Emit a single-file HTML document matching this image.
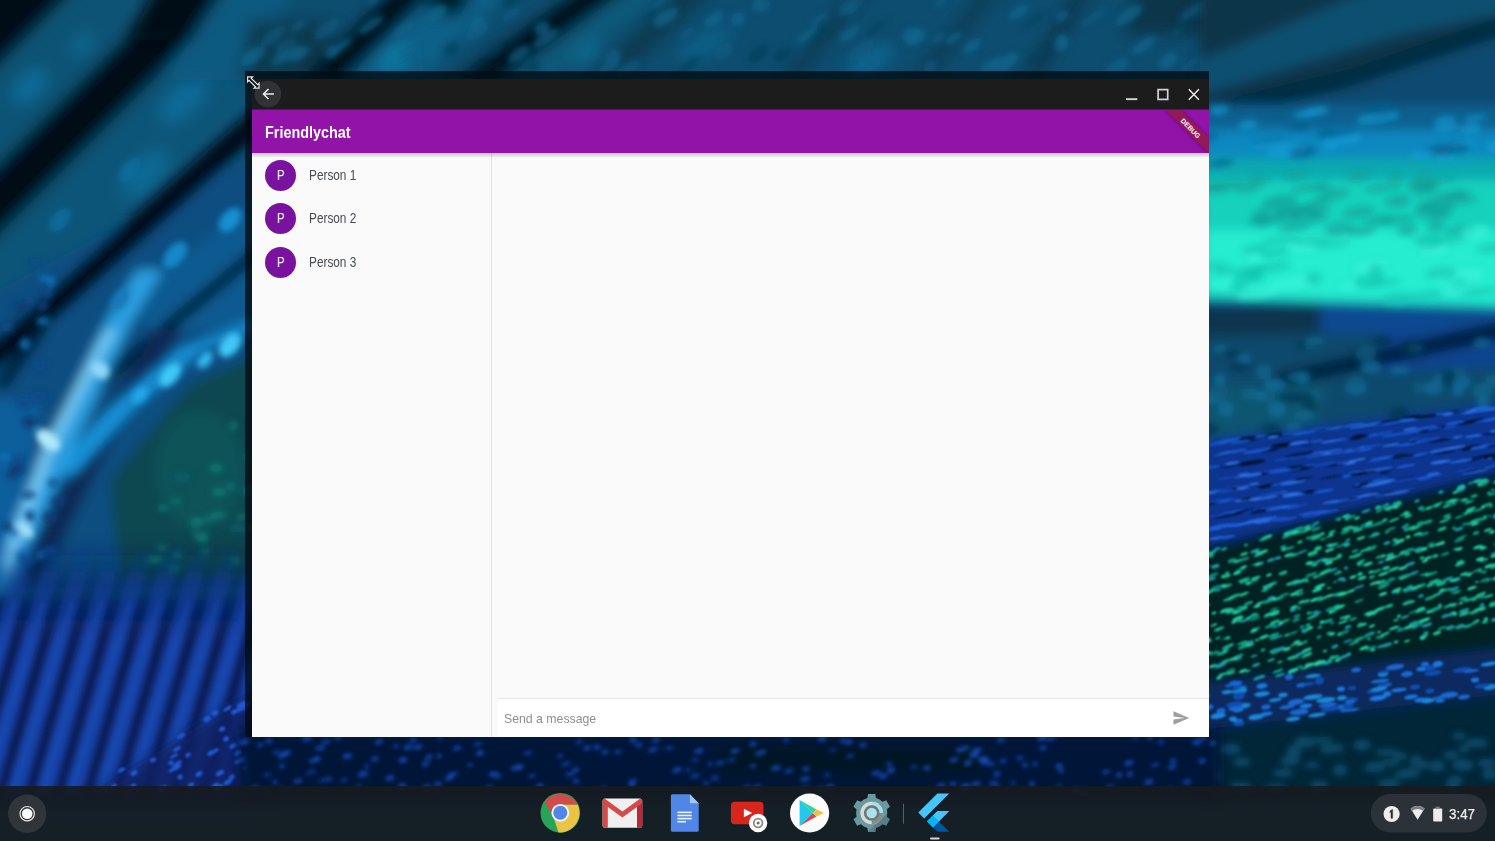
<!DOCTYPE html>
<html><head><meta charset="utf-8">
<style>
*{margin:0;padding:0;box-sizing:border-box}
html,body{width:1495px;height:841px;overflow:hidden;font-family:"Liberation Sans",sans-serif}
body{position:relative;background:#0a3550}
.abs{position:absolute}
#bg{position:absolute;left:0;top:0;width:1495px;height:841px;overflow:hidden}
#frame{position:absolute;left:245px;top:71px;width:964px;height:666px;background:rgba(0,10,15,0.75)}
#win{position:absolute;left:252px;top:79px;width:957px;height:658px;background:#fafafa;overflow:hidden}
#title{position:absolute;left:0;top:0;width:957px;height:31px;background:linear-gradient(#1c1c1c 30px,#561660 30px)}
#appbar{position:absolute;left:0;top:31px;width:957px;height:43px;background:#9113a8;z-index:2}
#shadow{position:absolute;left:0;top:74px;width:957px;height:5px;background:linear-gradient(rgba(0,0,0,0.22),rgba(0,0,0,0));z-index:3}
#appbar .t{position:absolute;left:13px;top:12px;color:#fff;font-size:17.4px;font-weight:bold;transform-origin:0 0;transform:scaleX(0.828);white-space:nowrap}
#side{position:absolute;left:0;top:74px;width:240px;height:584px;background:#fafafa;border-right:1px solid #e2e2e2}
.item{position:absolute;left:12.8px;width:220px;height:31px}
.av{position:absolute;left:0;top:0;width:31.1px;height:31.1px;border-radius:50%;background:#7a12a0;color:#fff;font-size:14.5px;text-align:center;line-height:31px}
.nm{position:absolute;left:44.2px;top:7.3px;font-size:14.5px;color:#474c50;transform-origin:0 0;transform:scaleX(0.815);white-space:nowrap}
.av span{display:inline-block;transform:scaleX(0.8) translateY(0.1px);font-size:14px}
#input{position:absolute;left:246px;top:619px;width:711px;height:39px;background:#fff;border-top:1px solid #e6e6e6}
#input .ph{position:absolute;left:6px;top:11.7px;font-size:13px;color:#8c8f91;transform-origin:0 0;transform:scaleX(0.945);white-space:nowrap}
#shelf{position:absolute;left:0;top:786px;width:1495px;height:55px;background:rgba(22,27,31,0.9)}
</style></head><body>
<div id="bg"><svg id="bgsvg" width="1495" height="841" viewBox="0 0 1495 841" style="position:absolute;left:0;top:0">
<defs>
<filter id="b1" x="-30%" y="-30%" width="160%" height="160%"><feGaussianBlur stdDeviation="1.2"/></filter>
<filter id="b2" x="-30%" y="-30%" width="160%" height="160%"><feGaussianBlur stdDeviation="2"/></filter>
<filter id="b3" x="-30%" y="-30%" width="160%" height="160%"><feGaussianBlur stdDeviation="3"/></filter>
<filter id="b4" x="-30%" y="-30%" width="160%" height="160%"><feGaussianBlur stdDeviation="4"/></filter>
<filter id="b6" x="-30%" y="-30%" width="160%" height="160%"><feGaussianBlur stdDeviation="6"/></filter>
<filter id="b8" x="-30%" y="-30%" width="160%" height="160%"><feGaussianBlur stdDeviation="8"/></filter>
<filter id="b12" x="-30%" y="-30%" width="160%" height="160%"><feGaussianBlur stdDeviation="12"/></filter>
</defs>
<rect width="1495" height="841" fill="#0a4a6c"/>
<g filter="url(#b12)">
<rect x="-30" y="-30" width="290" height="300" fill="#073f5c"/>
<rect x="-30" y="250" width="290" height="340" fill="#0a4a78"/>
<rect x="-30" y="590" width="290" height="210" fill="#0a3078"/>
</g>
<g filter="url(#b8)">
<g transform="rotate(-45)">
<rect x="-400" y="-100" width="900" height="145" fill="#030e18"/>
<rect x="-400" y="45" width="900" height="70" fill="#0a5274"/>
<rect x="-400" y="115" width="900" height="50" fill="#020a12"/>
<rect x="-400" y="165" width="900" height="125" fill="#0a5478"/>
<ellipse cx="-40" cy="82" rx="22" ry="12" fill="#0e6c98"/>
<ellipse cx="27" cy="90" rx="14" ry="9" fill="#0e6890"/>
<ellipse cx="60" cy="200" rx="30" ry="14" fill="#0e6c98"/>
<ellipse cx="-20" cy="225" rx="30" ry="14" fill="#0e6a94"/>
</g>
</g>

<g filter="url(#b6)">
<polygon points="-20,300 260,150 260,600 -20,600" fill="#0a4e80"/>
<polygon points="-38,368 30,310 200,156 252,110 288,110 236,156 66,310 -2,368" fill="#020e1a"/>
<polygon points="120,300 260,200 260,330 150,330" fill="#0b5a90"/>
<polygon points="-8,388 32,330 48,330 8,388" fill="#04203a"/>
<polygon points="70,400 240,258 260,240 280,240 260,258 90,400" fill="#04203a"/>
<polygon points="-20,400 40,400 20,560 -20,580" fill="#0c5e9c"/>
<polygon points="110,480 190,385 260,355 260,580 120,580" fill="#0a4650"/>
<ellipse cx="200" cy="470" rx="45" ry="60" fill="#0c5258"/>
<polygon points="17,580 97,420 157,330 183,330 123,420 43,580" fill="#072c58"/>
<polygon points="50,475 108,410 178,350 248,322 272,322 202,350 132,410 74,475" fill="#1492d8"/>
<polygon points="-18,595 37,470 106,321 137,270 163,270 132,321 63,470 8,595" fill="#2a9ee0"/>
<polygon points="0,570 43,450 95,350 107,330 117,330 105,350 53,450 10,570" fill="#7ccff6"/>
</g>
<g filter="url(#b3)">
<ellipse cx="175" cy="255" rx="16" ry="9" fill="#1488c8" transform="rotate(-50 175 255)"/>
<ellipse cx="230" cy="220" rx="14" ry="9" fill="#1490d0" transform="rotate(-50 230 220)"/>
<ellipse cx="120" cy="300" rx="12" ry="7" fill="#1278b8" transform="rotate(-50 120 300)"/>
<ellipse cx="60" cy="220" rx="14" ry="8" fill="#0e6a9a" transform="rotate(-50 60 220)"/>
<ellipse cx="130" cy="170" rx="14" ry="8" fill="#0e6a9a" transform="rotate(-50 130 170)"/>
<ellipse cx="170" cy="375" rx="14" ry="8" fill="#40c8f8" transform="rotate(-50 170 375)"/>
<ellipse cx="230" cy="345" rx="14" ry="9" fill="#40c8f8" transform="rotate(-50 230 345)"/>
<ellipse cx="48" cy="440" rx="8" ry="14" fill="#b0e8fc" transform="rotate(-50 48 440)"/>
<ellipse cx="25" cy="530" rx="6" ry="10" fill="#a0e0fa" transform="rotate(-50 25 530)"/>
<ellipse cx="100" cy="370" rx="8" ry="10" fill="#90d8f8" transform="rotate(-50 100 370)"/>
<ellipse cx="205" cy="360" rx="10" ry="6" fill="#30b8f0" transform="rotate(-50 205 360)"/>
<ellipse cx="140" cy="395" rx="10" ry="6" fill="#20a8e8" transform="rotate(-50 140 395)"/>
<ellipse cx="218" cy="515" rx="8.5" ry="3.3" fill="#107870"/>
<ellipse cx="197" cy="522" rx="7.5" ry="4.3" fill="#107870"/>
<ellipse cx="201" cy="538" rx="4.0" ry="5.4" fill="#107870"/>
<ellipse cx="245" cy="457" rx="4.5" ry="3.3" fill="#0a5a66"/>
<ellipse cx="202" cy="537" rx="7.6" ry="4.6" fill="#107870"/>
<ellipse cx="205" cy="551" rx="5.8" ry="3.6" fill="#0e6a68"/>
<ellipse cx="163" cy="508" rx="5.8" ry="4.1" fill="#0c6a70"/>
<ellipse cx="210" cy="519" rx="7.4" ry="3.2" fill="#0c6a70"/>
<ellipse cx="241" cy="517" rx="5.1" ry="4.0" fill="#0e6a68"/>
<ellipse cx="155" cy="560" rx="8.4" ry="3.9" fill="#107870"/>
<ellipse cx="177" cy="555" rx="6.3" ry="3.8" fill="#0c6a70"/>
<ellipse cx="219" cy="492" rx="7.7" ry="4.3" fill="#107870"/>
<ellipse cx="173" cy="570" rx="4.7" ry="4.5" fill="#0e6a68"/>
<ellipse cx="233" cy="426" rx="4.8" ry="5.0" fill="#0e6a68"/>
<ellipse cx="176" cy="501" rx="6.3" ry="3.8" fill="#0e6a68"/>
<ellipse cx="236" cy="528" rx="7.8" ry="4.0" fill="#0a5a66"/>
<ellipse cx="182" cy="477" rx="8.8" ry="5.6" fill="#0a5a66"/>
<ellipse cx="247" cy="530" rx="6.5" ry="3.3" fill="#0a5a66"/>
<ellipse cx="231" cy="486" rx="5.0" ry="4.1" fill="#0c6a70"/>
<ellipse cx="195" cy="532" rx="6.7" ry="3.0" fill="#0a5a66"/>
<ellipse cx="174" cy="568" rx="8.0" ry="3.7" fill="#0c6a70"/>
<ellipse cx="235" cy="561" rx="4.4" ry="4.5" fill="#0e6a68"/>
<ellipse cx="247" cy="491" rx="4.6" ry="5.0" fill="#0c6a70"/>
<ellipse cx="162" cy="548" rx="6.1" ry="3.6" fill="#0c6a70"/>
<ellipse cx="216" cy="468" rx="7.4" ry="4.1" fill="#107870"/>
<ellipse cx="7" cy="327" rx="5.7" ry="4.8" fill="#0a4a88"/>
<ellipse cx="35" cy="262" rx="7.5" ry="3.2" fill="#0a4a88"/>
<ellipse cx="54" cy="518" rx="4.4" ry="3.7" fill="#0a3a70"/>
<ellipse cx="29" cy="422" rx="7.6" ry="5.6" fill="#0a3a70"/>
<ellipse cx="28" cy="495" rx="8.0" ry="3.6" fill="#0a4a88"/>
<ellipse cx="40" cy="366" rx="6.1" ry="5.6" fill="#0a4a88"/>
<ellipse cx="40" cy="555" rx="4.5" ry="4.2" fill="#1070b8"/>
<ellipse cx="48" cy="293" rx="5.0" ry="4.6" fill="#0a4a88"/>
<ellipse cx="25" cy="344" rx="5.2" ry="5.8" fill="#1070b8"/>
<ellipse cx="48" cy="517" rx="4.5" ry="5.0" fill="#0a3a70"/>
<ellipse cx="50" cy="551" rx="8.6" ry="5.5" fill="#0a4a88"/>
<ellipse cx="24" cy="404" rx="8.3" ry="5.7" fill="#0a4a88"/>
<ellipse cx="23" cy="556" rx="5.3" ry="5.4" fill="#1070b8"/>
<ellipse cx="17" cy="469" rx="7.7" ry="5.4" fill="#0a3a70"/>
<ellipse cx="43" cy="306" rx="5.5" ry="5.9" fill="#0a3a70"/>
<ellipse cx="44" cy="278" rx="5.6" ry="3.2" fill="#1070b8"/>
<ellipse cx="30" cy="516" rx="4.8" ry="5.9" fill="#0a4a88"/>
<ellipse cx="51" cy="281" rx="4.3" ry="5.6" fill="#1070b8"/>
<ellipse cx="7" cy="527" rx="5.2" ry="4.8" fill="#0a3a70"/>
<ellipse cx="5" cy="457" rx="6.8" ry="3.9" fill="#1070b8"/>
<ellipse cx="12" cy="475" rx="5.2" ry="4.2" fill="#0a3a70"/>
<ellipse cx="39" cy="397" rx="8.6" ry="5.8" fill="#0a4a88"/>
<ellipse cx="27" cy="560" rx="9.0" ry="3.2" fill="#0a4a88"/>
<ellipse cx="30" cy="300" rx="5.7" ry="3.2" fill="#0a4a88"/>
<ellipse cx="22" cy="307" rx="8.2" ry="5.1" fill="#0a3a70"/>
<ellipse cx="59" cy="502" rx="6.6" ry="5.0" fill="#0a3a70"/>
<ellipse cx="18" cy="459" rx="8.7" ry="3.4" fill="#0a4a88"/>
<ellipse cx="53" cy="483" rx="4.8" ry="3.8" fill="#0a4a88"/>
<ellipse cx="43" cy="321" rx="7.2" ry="3.8" fill="#1070b8"/>
<ellipse cx="15" cy="532" rx="4.3" ry="4.9" fill="#1070b8"/>
</g>
<g filter="url(#b6)">
<polygon points="-20,540 270,540 270,800 -20,800" fill="url(#darkg)"/>
</g>
<defs><linearGradient id="barbg" gradientUnits="userSpaceOnUse" x1="0" y1="545" x2="0" y2="640"><stop offset="0" stop-color="#1440a4" stop-opacity="0"/><stop offset="1" stop-color="#1440a4" stop-opacity="1"/></linearGradient><linearGradient id="darkg" gradientUnits="userSpaceOnUse" x1="0" y1="540" x2="0" y2="640"><stop offset="0" stop-color="#081d55" stop-opacity="0"/><stop offset="1" stop-color="#081d55" stop-opacity="1"/></linearGradient></defs>
<g filter="url(#b3)">
<polygon points="-82,795 -63,795 10,540 -7,540" fill="url(#barbg)"/>
<polygon points="-76,790 -72,790 -12,600 -15,600" fill="#2a62d0" fill-opacity="0.45"/>
<polygon points="-53,795 -34,795 39,540 22,540" fill="url(#barbg)"/>
<polygon points="-47,790 -43,790 17,600 14,600" fill="#2a62d0" fill-opacity="0.45"/>
<polygon points="-24,795 -5,795 68,540 51,540" fill="url(#barbg)"/>
<polygon points="-18,790 -14,790 46,600 43,600" fill="#2a62d0" fill-opacity="0.45"/>
<polygon points="5,795 24,795 97,540 80,540" fill="url(#barbg)"/>
<polygon points="11,790 15,790 75,600 72,600" fill="#2a62d0" fill-opacity="0.45"/>
<polygon points="34,795 53,795 126,540 109,540" fill="url(#barbg)"/>
<polygon points="40,790 44,790 104,600 101,600" fill="#2a62d0" fill-opacity="0.45"/>
<polygon points="63,795 82,795 155,540 138,540" fill="url(#barbg)"/>
<polygon points="69,790 73,790 133,600 130,600" fill="#2a62d0" fill-opacity="0.45"/>
<polygon points="92,795 111,795 184,540 167,540" fill="url(#barbg)"/>
<polygon points="98,790 102,790 162,600 159,600" fill="#2a62d0" fill-opacity="0.45"/>
<polygon points="121,795 140,795 213,540 196,540" fill="url(#barbg)"/>
<polygon points="127,790 131,790 191,600 188,600" fill="#2a62d0" fill-opacity="0.45"/>
<polygon points="150,795 169,795 242,540 225,540" fill="url(#barbg)"/>
<polygon points="156,790 160,790 220,600 217,600" fill="#2a62d0" fill-opacity="0.45"/>
<polygon points="179,795 198,795 271,540 254,540" fill="url(#barbg)"/>
<polygon points="185,790 189,790 249,600 246,600" fill="#2a62d0" fill-opacity="0.45"/>
<polygon points="208,795 227,795 300,540 283,540" fill="url(#barbg)"/>
<polygon points="214,790 218,790 278,600 275,600" fill="#2a62d0" fill-opacity="0.45"/>
<polygon points="237,795 256,795 329,540 312,540" fill="url(#barbg)"/>
<polygon points="243,790 247,790 307,600 304,600" fill="#2a62d0" fill-opacity="0.45"/>
<polygon points="266,795 285,795 358,540 341,540" fill="url(#barbg)"/>
<polygon points="272,790 276,790 336,600 333,600" fill="#2a62d0" fill-opacity="0.45"/>
<polygon points="295,795 314,795 387,540 370,540" fill="url(#barbg)"/>
<polygon points="301,790 305,790 365,600 362,600" fill="#2a62d0" fill-opacity="0.45"/>
</g>
<g filter="url(#b6)">
<polygon points="90,795 270,680 270,800" fill="#0a2060" fill-opacity="0.85"/>
</g>
<g filter="url(#b1)">
<ellipse cx="222" cy="729" rx="3.1" ry="2.3" fill="#2058d0" transform="rotate(-30 222 729)"/>
<ellipse cx="188" cy="755" rx="2.9" ry="2.1" fill="#2058d0" transform="rotate(-30 188 755)"/>
<ellipse cx="180" cy="777" rx="2.6" ry="2.5" fill="#2058d0" transform="rotate(-30 180 777)"/>
<ellipse cx="134" cy="773" rx="3.8" ry="2.3" fill="#2058d0" transform="rotate(-30 134 773)"/>
<ellipse cx="122" cy="770" rx="3.8" ry="1.7" fill="#2058d0" transform="rotate(-30 122 770)"/>
<ellipse cx="171" cy="763" rx="2.7" ry="2.3" fill="#2058d0" transform="rotate(-30 171 763)"/>
<ellipse cx="247" cy="767" rx="4.4" ry="2.3" fill="#2058d0" transform="rotate(-30 247 767)"/>
<ellipse cx="121" cy="770" rx="3.8" ry="1.6" fill="#2058d0" transform="rotate(-30 121 770)"/>
<ellipse cx="172" cy="770" rx="3.9" ry="1.6" fill="#2058d0" transform="rotate(-30 172 770)"/>
<ellipse cx="241" cy="705" rx="4.6" ry="2.5" fill="#2058d0" transform="rotate(-30 241 705)"/>
<ellipse cx="215" cy="785" rx="3.8" ry="1.7" fill="#2058d0" transform="rotate(-30 215 785)"/>
<ellipse cx="176" cy="766" rx="4.4" ry="1.9" fill="#2058d0" transform="rotate(-30 176 766)"/>
<ellipse cx="243" cy="703" rx="3.7" ry="1.5" fill="#2058d0" transform="rotate(-30 243 703)"/>
<ellipse cx="160" cy="789" rx="2.8" ry="2.5" fill="#2058d0" transform="rotate(-30 160 789)"/>
<ellipse cx="237" cy="762" rx="2.6" ry="2.0" fill="#2058d0" transform="rotate(-30 237 762)"/>
<ellipse cx="228" cy="782" rx="4.8" ry="2.3" fill="#2058d0" transform="rotate(-30 228 782)"/>
<ellipse cx="177" cy="768" rx="4.4" ry="1.5" fill="#2058d0" transform="rotate(-30 177 768)"/>
<ellipse cx="239" cy="710" rx="3.5" ry="2.0" fill="#2058d0" transform="rotate(-30 239 710)"/>
<ellipse cx="234" cy="712" rx="3.2" ry="2.3" fill="#2058d0" transform="rotate(-30 234 712)"/>
<ellipse cx="114" cy="786" rx="3.1" ry="2.0" fill="#2058d0" transform="rotate(-30 114 786)"/>
<ellipse cx="163" cy="788" rx="4.3" ry="2.1" fill="#2058d0" transform="rotate(-30 163 788)"/>
<ellipse cx="227" cy="709" rx="4.1" ry="1.8" fill="#2058d0" transform="rotate(-30 227 709)"/>
<ellipse cx="233" cy="746" rx="4.2" ry="2.3" fill="#2058d0" transform="rotate(-30 233 746)"/>
<ellipse cx="133" cy="786" rx="3.5" ry="2.0" fill="#2058d0" transform="rotate(-30 133 786)"/>
<ellipse cx="178" cy="763" rx="4.4" ry="1.7" fill="#2058d0" transform="rotate(-30 178 763)"/>
<ellipse cx="226" cy="739" rx="3.1" ry="2.4" fill="#2058d0" transform="rotate(-30 226 739)"/>
<ellipse cx="232" cy="777" rx="3.3" ry="2.4" fill="#2058d0" transform="rotate(-30 232 777)"/>
<ellipse cx="219" cy="787" rx="4.4" ry="2.5" fill="#2058d0" transform="rotate(-30 219 787)"/>
<ellipse cx="177" cy="767" rx="4.5" ry="2.0" fill="#2058d0" transform="rotate(-30 177 767)"/>
<ellipse cx="181" cy="736" rx="4.7" ry="1.9" fill="#2058d0" transform="rotate(-30 181 736)"/>
<ellipse cx="215" cy="751" rx="4.3" ry="1.8" fill="#2058d0" transform="rotate(-30 215 751)"/>
<ellipse cx="238" cy="753" rx="3.9" ry="2.2" fill="#2058d0" transform="rotate(-30 238 753)"/>
<ellipse cx="211" cy="753" rx="4.1" ry="2.3" fill="#2058d0" transform="rotate(-30 211 753)"/>
<ellipse cx="246" cy="705" rx="3.8" ry="2.1" fill="#2058d0" transform="rotate(-30 246 705)"/>
<ellipse cx="244" cy="708" rx="4.3" ry="1.6" fill="#2058d0" transform="rotate(-30 244 708)"/>
<ellipse cx="174" cy="756" rx="4.6" ry="1.5" fill="#2058d0" transform="rotate(-30 174 756)"/>
<ellipse cx="215" cy="713" rx="3.5" ry="2.5" fill="#2058d0" transform="rotate(-30 215 713)"/>
<ellipse cx="229" cy="707" rx="2.5" ry="1.5" fill="#2058d0" transform="rotate(-30 229 707)"/>
<ellipse cx="220" cy="773" rx="4.5" ry="2.4" fill="#2058d0" transform="rotate(-30 220 773)"/>
<ellipse cx="199" cy="774" rx="3.9" ry="2.2" fill="#2058d0" transform="rotate(-30 199 774)"/>
<ellipse cx="249" cy="735" rx="4.3" ry="1.7" fill="#2058d0" transform="rotate(-30 249 735)"/>
<ellipse cx="177" cy="749" rx="4.4" ry="1.8" fill="#2058d0" transform="rotate(-30 177 749)"/>
<ellipse cx="191" cy="785" rx="3.5" ry="2.2" fill="#2058d0" transform="rotate(-30 191 785)"/>
<ellipse cx="207" cy="719" rx="4.0" ry="2.5" fill="#2058d0" transform="rotate(-30 207 719)"/>
<ellipse cx="153" cy="760" rx="3.3" ry="2.1" fill="#2058d0" transform="rotate(-30 153 760)"/>
</g>
<g filter="url(#b8)">
<rect x="240" y="-20" width="980" height="100" fill="#0a4e70"/>
<polygon points="160,-20 230,-20 190,40 130,40" fill="#020c14"/>
<polygon points="230,-20 300,-20 235,80 165,80" fill="#0a5a80"/>
<polygon points="250,20 335,20 320,80 240,80" fill="#083a50"/>
<polygon points="400,-20 445,-20 345,80 300,80" fill="#020c14"/>
<polygon points="445,-20 520,-20 420,80 345,80" fill="#0a6088"/>
<ellipse cx="395" cy="58" rx="18" ry="9" fill="#1080a8" transform="rotate(-40 395 58)"/>
<polygon points="430,-20 480,-20 460,15 430,15" fill="#041a26"/>
<polygon points="590,-20 640,-20 500,80 450,80" fill="#020c14"/>
<polygon points="640,-20 680,-20 550,80 505,80" fill="#0a5a7a"/>
<ellipse cx="587" cy="53" rx="16" ry="8" fill="#0d6a90" transform="rotate(-40 587 53)"/>
<polygon points="690,-20 725,-20 620,80 585,80" fill="#083a50"/>
<ellipse cx="705" cy="45" rx="30" ry="10" fill="#0c6088" transform="rotate(-30 705 45)"/>
<polygon points="860,-20 880,-20 800,80 780,80" fill="#083a55"/>
<polygon points="990,-20 1010,-20 930,80 910,80" fill="#073a55"/>
<ellipse cx="870" cy="61" rx="25" ry="9" fill="#0d6a98" transform="rotate(-30 870 61)"/>
<polygon points="1140,-20 1230,-20 1230,35 1120,35" fill="#083448"/>
<polygon points="1080,-20 1100,-20 1040,80 1020,80" fill="#073850"/>
</g>
<g filter="url(#b3)">
<ellipse cx="451" cy="49" rx="9.4" ry="5.6" fill="#07405a" fill-opacity="0.7" transform="rotate(-35 451 49)"/>
<ellipse cx="249" cy="61" rx="8.8" ry="4.0" fill="#0b5a80" fill-opacity="0.7" transform="rotate(-35 249 61)"/>
<ellipse cx="299" cy="54" rx="12.0" ry="5.0" fill="#0d6a90" fill-opacity="0.7" transform="rotate(-35 299 54)"/>
<ellipse cx="817" cy="32" rx="11.0" ry="6.8" fill="#07405a" fill-opacity="0.7" transform="rotate(-35 817 32)"/>
<ellipse cx="660" cy="2" rx="15.5" ry="3.6" fill="#0b5a80" fill-opacity="0.7" transform="rotate(-35 660 2)"/>
<ellipse cx="972" cy="46" rx="10.6" ry="5.1" fill="#0d6a90" fill-opacity="0.7" transform="rotate(-35 972 46)"/>
<ellipse cx="666" cy="17" rx="14.5" ry="6.6" fill="#0d6a90" fill-opacity="0.7" transform="rotate(-35 666 17)"/>
<ellipse cx="991" cy="65" rx="13.5" ry="4.4" fill="#0d6a90" fill-opacity="0.7" transform="rotate(-35 991 65)"/>
<ellipse cx="400" cy="58" rx="9.3" ry="4.3" fill="#0d6a90" fill-opacity="0.7" transform="rotate(-35 400 58)"/>
<ellipse cx="1176" cy="33" rx="8.0" ry="3.0" fill="#0d6a90" fill-opacity="0.7" transform="rotate(-35 1176 33)"/>
<ellipse cx="1062" cy="16" rx="7.1" ry="5.1" fill="#0c6088" fill-opacity="0.7" transform="rotate(-35 1062 16)"/>
<ellipse cx="850" cy="9" rx="7.2" ry="5.8" fill="#0d6a90" fill-opacity="0.7" transform="rotate(-35 850 9)"/>
<ellipse cx="763" cy="6" rx="8.4" ry="5.4" fill="#0c6088" fill-opacity="0.7" transform="rotate(-35 763 6)"/>
<ellipse cx="477" cy="31" rx="13.9" ry="6.7" fill="#0c6088" fill-opacity="0.7" transform="rotate(-35 477 31)"/>
<ellipse cx="628" cy="69" rx="14.1" ry="5.7" fill="#0b5a80" fill-opacity="0.7" transform="rotate(-35 628 69)"/>
<ellipse cx="273" cy="36" rx="14.9" ry="6.1" fill="#0b5a80" fill-opacity="0.7" transform="rotate(-35 273 36)"/>
<ellipse cx="417" cy="67" rx="6.8" ry="6.9" fill="#0b5a80" fill-opacity="0.7" transform="rotate(-35 417 67)"/>
<ellipse cx="938" cy="38" rx="7.6" ry="4.4" fill="#0b5a80" fill-opacity="0.7" transform="rotate(-35 938 38)"/>
<ellipse cx="876" cy="28" rx="14.0" ry="3.2" fill="#07405a" fill-opacity="0.7" transform="rotate(-35 876 28)"/>
<ellipse cx="807" cy="35" rx="14.2" ry="3.6" fill="#0d6a90" fill-opacity="0.7" transform="rotate(-35 807 35)"/>
<ellipse cx="542" cy="28" rx="8.7" ry="5.7" fill="#0d6a90" fill-opacity="0.7" transform="rotate(-35 542 28)"/>
<ellipse cx="288" cy="54" rx="14.3" ry="5.1" fill="#0c6088" fill-opacity="0.7" transform="rotate(-35 288 54)"/>
<ellipse cx="849" cy="34" rx="11.6" ry="4.5" fill="#0d6a90" fill-opacity="0.7" transform="rotate(-35 849 34)"/>
<ellipse cx="285" cy="45" rx="12.1" ry="4.7" fill="#0c6088" fill-opacity="0.7" transform="rotate(-35 285 45)"/>
<ellipse cx="653" cy="14" rx="6.3" ry="3.9" fill="#07405a" fill-opacity="0.7" transform="rotate(-35 653 14)"/>
<ellipse cx="253" cy="56" rx="14.5" ry="6.9" fill="#0d6a90" fill-opacity="0.7" transform="rotate(-35 253 56)"/>
<ellipse cx="954" cy="38" rx="9.8" ry="4.1" fill="#0d6a90" fill-opacity="0.7" transform="rotate(-35 954 38)"/>
<ellipse cx="911" cy="35" rx="9.3" ry="6.6" fill="#0d6a90" fill-opacity="0.7" transform="rotate(-35 911 35)"/>
<ellipse cx="519" cy="54" rx="13.0" ry="5.9" fill="#0c6088" fill-opacity="0.7" transform="rotate(-35 519 54)"/>
<ellipse cx="1093" cy="18" rx="16.0" ry="4.3" fill="#0b5a80" fill-opacity="0.7" transform="rotate(-35 1093 18)"/>
<ellipse cx="1036" cy="56" rx="13.2" ry="3.1" fill="#07405a" fill-opacity="0.7" transform="rotate(-35 1036 56)"/>
<ellipse cx="1129" cy="15" rx="15.8" ry="6.1" fill="#0d6a90" fill-opacity="0.7" transform="rotate(-35 1129 15)"/>
<ellipse cx="1006" cy="63" rx="14.9" ry="6.3" fill="#0d6a90" fill-opacity="0.7" transform="rotate(-35 1006 63)"/>
<ellipse cx="724" cy="51" rx="11.1" ry="6.9" fill="#0b5a80" fill-opacity="0.7" transform="rotate(-35 724 51)"/>
<ellipse cx="609" cy="67" rx="13.7" ry="5.1" fill="#0c6088" fill-opacity="0.7" transform="rotate(-35 609 67)"/>
<ellipse cx="373" cy="0" rx="6.9" ry="4.8" fill="#0b5a80" fill-opacity="0.7" transform="rotate(-35 373 0)"/>
<ellipse cx="287" cy="46" rx="7.1" ry="5.0" fill="#07405a" fill-opacity="0.7" transform="rotate(-35 287 46)"/>
<ellipse cx="873" cy="63" rx="8.9" ry="6.1" fill="#0c6088" fill-opacity="0.7" transform="rotate(-35 873 63)"/>
<ellipse cx="511" cy="0" rx="10.1" ry="6.2" fill="#07405a" fill-opacity="0.7" transform="rotate(-35 511 0)"/>
<ellipse cx="689" cy="65" rx="14.8" ry="4.1" fill="#07405a" fill-opacity="0.7" transform="rotate(-35 689 65)"/>
<ellipse cx="371" cy="25" rx="15.4" ry="4.4" fill="#0d6a90" fill-opacity="0.7" transform="rotate(-35 371 25)"/>
<ellipse cx="1034" cy="20" rx="13.8" ry="3.0" fill="#07405a" fill-opacity="0.7" transform="rotate(-35 1034 20)"/>
<ellipse cx="282" cy="57" rx="12.9" ry="5.0" fill="#0c6088" fill-opacity="0.7" transform="rotate(-35 282 57)"/>
<ellipse cx="1019" cy="12" rx="11.7" ry="5.2" fill="#0d6a90" fill-opacity="0.7" transform="rotate(-35 1019 12)"/>
<ellipse cx="1062" cy="45" rx="7.7" ry="6.0" fill="#0c6088" fill-opacity="0.7" transform="rotate(-35 1062 45)"/>
<ellipse cx="409" cy="53" rx="10.1" ry="4.3" fill="#0b5a80" fill-opacity="0.7" transform="rotate(-35 409 53)"/>
<ellipse cx="613" cy="57" rx="9.0" ry="6.7" fill="#0c6088" fill-opacity="0.7" transform="rotate(-35 613 57)"/>
<ellipse cx="477" cy="23" rx="9.0" ry="4.7" fill="#0d6a90" fill-opacity="0.7" transform="rotate(-35 477 23)"/>
<ellipse cx="1206" cy="6" rx="15.6" ry="6.7" fill="#0b5a80" fill-opacity="0.7" transform="rotate(-35 1206 6)"/>
<ellipse cx="930" cy="67" rx="7.8" ry="5.9" fill="#0b5a80" fill-opacity="0.7" transform="rotate(-35 930 67)"/>
<ellipse cx="1192" cy="63" rx="15.1" ry="3.3" fill="#0b5a80" fill-opacity="0.7" transform="rotate(-35 1192 63)"/>
<ellipse cx="1117" cy="67" rx="14.2" ry="6.6" fill="#0c6088" fill-opacity="0.7" transform="rotate(-35 1117 67)"/>
<ellipse cx="941" cy="2" rx="9.1" ry="3.6" fill="#0c6088" fill-opacity="0.7" transform="rotate(-35 941 2)"/>
<ellipse cx="851" cy="5" rx="15.5" ry="6.9" fill="#0b5a80" fill-opacity="0.7" transform="rotate(-35 851 5)"/>
<ellipse cx="327" cy="29" rx="15.8" ry="6.5" fill="#0b5a80" fill-opacity="0.7" transform="rotate(-35 327 29)"/>
<ellipse cx="714" cy="19" rx="11.7" ry="5.6" fill="#0d6a90" fill-opacity="0.7" transform="rotate(-35 714 19)"/>
<ellipse cx="533" cy="67" rx="7.4" ry="6.7" fill="#07405a" fill-opacity="0.7" transform="rotate(-35 533 67)"/>
<ellipse cx="782" cy="55" rx="9.9" ry="6.0" fill="#07405a" fill-opacity="0.7" transform="rotate(-35 782 55)"/>
<ellipse cx="757" cy="4" rx="6.8" ry="3.8" fill="#0d6a90" fill-opacity="0.7" transform="rotate(-35 757 4)"/>
<ellipse cx="686" cy="34" rx="11.2" ry="4.0" fill="#0b5a80" fill-opacity="0.7" transform="rotate(-35 686 34)"/>
<ellipse cx="511" cy="14" rx="11.7" ry="4.3" fill="#0b5a80" fill-opacity="0.7" transform="rotate(-35 511 14)"/>
<ellipse cx="758" cy="54" rx="12.3" ry="6.7" fill="#07405a" fill-opacity="0.7" transform="rotate(-35 758 54)"/>
<ellipse cx="437" cy="13" rx="11.4" ry="6.8" fill="#0d6a90" fill-opacity="0.7" transform="rotate(-35 437 13)"/>
<ellipse cx="332" cy="52" rx="8.7" ry="6.0" fill="#0b5a80" fill-opacity="0.7" transform="rotate(-35 332 52)"/>
<ellipse cx="819" cy="19" rx="11.0" ry="3.3" fill="#0c6088" fill-opacity="0.7" transform="rotate(-35 819 19)"/>
<ellipse cx="1062" cy="41" rx="6.6" ry="7.0" fill="#0d6a90" fill-opacity="0.7" transform="rotate(-35 1062 41)"/>
<ellipse cx="916" cy="37" rx="11.5" ry="6.9" fill="#0d6a90" fill-opacity="0.7" transform="rotate(-35 916 37)"/>
<ellipse cx="861" cy="50" rx="16.0" ry="6.4" fill="#0b5a80" fill-opacity="0.7" transform="rotate(-35 861 50)"/>
<ellipse cx="493" cy="50" rx="10.3" ry="3.1" fill="#07405a" fill-opacity="0.7" transform="rotate(-35 493 50)"/>
<ellipse cx="1179" cy="30" rx="14.9" ry="5.6" fill="#07405a" fill-opacity="0.7" transform="rotate(-35 1179 30)"/>
<ellipse cx="1144" cy="45" rx="14.6" ry="5.0" fill="#0d6a90" fill-opacity="0.7" transform="rotate(-35 1144 45)"/>
<ellipse cx="298" cy="26" rx="9.7" ry="4.4" fill="#0b5a80" fill-opacity="0.7" transform="rotate(-35 298 26)"/>
<ellipse cx="738" cy="19" rx="7.6" ry="6.6" fill="#0d6a90" fill-opacity="0.7" transform="rotate(-35 738 19)"/>
<ellipse cx="340" cy="47" rx="15.1" ry="3.7" fill="#0d6a90" fill-opacity="0.7" transform="rotate(-35 340 47)"/>
<ellipse cx="546" cy="38" rx="15.2" ry="5.4" fill="#0c6088" fill-opacity="0.7" transform="rotate(-35 546 38)"/>
<ellipse cx="1168" cy="61" rx="10.8" ry="6.4" fill="#0d6a90" fill-opacity="0.7" transform="rotate(-35 1168 61)"/>
<ellipse cx="404" cy="29" rx="14.2" ry="4.9" fill="#0c6088" fill-opacity="0.7" transform="rotate(-35 404 29)"/>
<ellipse cx="1192" cy="11" rx="15.4" ry="4.5" fill="#0b5a80" fill-opacity="0.7" transform="rotate(-35 1192 11)"/>
<ellipse cx="399" cy="58" rx="9.8" ry="3.5" fill="#0d6a90" fill-opacity="0.7" transform="rotate(-35 399 58)"/>
<ellipse cx="865" cy="60" rx="7.0" ry="6.9" fill="#0c6088" fill-opacity="0.7" transform="rotate(-35 865 60)"/>
</g>
<g filter="url(#b6)">
<rect x="1200" y="-20" width="320" height="120" fill="#08354a"/>
<polygon points="1200,60 1395,-20 1520,-20 1520,10 1395,36 1200,95" fill="#0a5070"/>
<polygon points="1200,105 1348,70 1520,10 1520,30 1348,88 1200,125" fill="#052a40"/>
<polygon points="1200,125 1348,88 1520,30 1520,110 1200,130" fill="#0a4a70"/>
<rect x="1200" y="105" width="320" height="30" fill="#0a6090"/>
<rect x="1200" y="130" width="320" height="30" fill="#0c88c0"/>
<rect x="1200" y="158" width="320" height="30" fill="#10a8b0"/>
<polygon points="1200,180 1520,180 1520,310 1200,298" fill="#18d2bc"/>
<polygon points="1200,230 1520,230 1520,305 1200,295" fill="#28ecd0"/>

<polygon points="1200,298 1520,308 1520,340 1200,345" fill="#0c4890"/>
<polygon points="1200,305 1320,305 1320,345 1200,350" fill="#07344e"/>
<polygon points="1200,336 1520,330 1520,440 1200,440" fill="#0a4a6c"/>
<polygon points="1380,332 1520,325 1520,365 1380,372" fill="#0d4490"/>
<polygon points="1270,375 1495,322 1520,325 1520,335 1290,385" fill="#041e3a"/>
<polygon points="1200,385 1330,385 1310,440 1200,445" fill="#0b5470"/>
<polygon points="1200,440 1520,400 1520,470 1200,548" fill="#0c3590"/>
<polygon points="1200,548 1520,465 1520,648 1200,686" fill="#052420"/>
<polygon points="1200,684 1520,646 1520,694 1200,732" fill="#082a60"/>
<polygon points="1200,730 1520,692 1520,800 1200,800" fill="#062838"/>
</g>
<g filter="url(#b3)">
<ellipse cx="1220" cy="349" rx="8" ry="4" fill="#0e6a90" fill-opacity="0.7"/>
<ellipse cx="1315" cy="396" rx="7" ry="4" fill="#0c5c80" fill-opacity="0.7"/>
<ellipse cx="1303" cy="373" rx="7" ry="4" fill="#06344e" fill-opacity="0.7"/>
<ellipse cx="1315" cy="341" rx="10" ry="4" fill="#0e6a90" fill-opacity="0.7"/>
<ellipse cx="1232" cy="354" rx="11" ry="4" fill="#06344e" fill-opacity="0.7"/>
<ellipse cx="1371" cy="367" rx="11" ry="7" fill="#1070a0" fill-opacity="0.7"/>
<ellipse cx="1356" cy="388" rx="11" ry="7" fill="#1070a0" fill-opacity="0.7"/>
<ellipse cx="1209" cy="429" rx="10" ry="6" fill="#06344e" fill-opacity="0.7"/>
<ellipse cx="1356" cy="382" rx="9" ry="7" fill="#0c5c80" fill-opacity="0.7"/>
<ellipse cx="1415" cy="348" rx="8" ry="5" fill="#1070a0" fill-opacity="0.7"/>
<ellipse cx="1303" cy="379" rx="6" ry="6" fill="#1070a0" fill-opacity="0.7"/>
<ellipse cx="1210" cy="399" rx="11" ry="5" fill="#1070a0" fill-opacity="0.7"/>
<ellipse cx="1494" cy="381" rx="9" ry="7" fill="#0e6a90" fill-opacity="0.7"/>
<ellipse cx="1485" cy="403" rx="7" ry="6" fill="#0c5c80" fill-opacity="0.7"/>
<ellipse cx="1250" cy="394" rx="8" ry="6" fill="#0e6a90" fill-opacity="0.7"/>
<ellipse cx="1244" cy="359" rx="7" ry="5" fill="#1070a0" fill-opacity="0.7"/>
<ellipse cx="1482" cy="403" rx="5" ry="6" fill="#1070a0" fill-opacity="0.7"/>
<ellipse cx="1410" cy="348" rx="11" ry="7" fill="#06344e" fill-opacity="0.7"/>
<ellipse cx="1226" cy="409" rx="8" ry="8" fill="#1070a0" fill-opacity="0.7"/>
<ellipse cx="1482" cy="343" rx="9" ry="6" fill="#0e6a90" fill-opacity="0.7"/>
<ellipse cx="1461" cy="382" rx="10" ry="7" fill="#1070a0" fill-opacity="0.7"/>
<ellipse cx="1399" cy="414" rx="11" ry="7" fill="#06344e" fill-opacity="0.7"/>
<ellipse cx="1361" cy="355" rx="10" ry="8" fill="#06344e" fill-opacity="0.7"/>
<ellipse cx="1312" cy="393" rx="7" ry="4" fill="#0c5c80" fill-opacity="0.7"/>
<ellipse cx="1438" cy="379" rx="5" ry="5" fill="#0e6a90" fill-opacity="0.7"/>
<ellipse cx="1399" cy="370" rx="11" ry="4" fill="#1070a0" fill-opacity="0.7"/>
<ellipse cx="1458" cy="391" rx="6" ry="6" fill="#1070a0" fill-opacity="0.7"/>
<ellipse cx="1270" cy="397" rx="6" ry="8" fill="#0c5c80" fill-opacity="0.7"/>
<ellipse cx="1264" cy="372" rx="8" ry="8" fill="#0e6a90" fill-opacity="0.7"/>
<ellipse cx="1482" cy="391" rx="10" ry="8" fill="#0e6a90" fill-opacity="0.7"/>
<ellipse cx="1261" cy="396" rx="6" ry="5" fill="#1070a0" fill-opacity="0.7"/>
<ellipse cx="1366" cy="353" rx="11" ry="8" fill="#0c5c80" fill-opacity="0.7"/>
<ellipse cx="1433" cy="388" rx="10" ry="7" fill="#1070a0" fill-opacity="0.7"/>
<ellipse cx="1456" cy="374" rx="11" ry="7" fill="#0c5c80" fill-opacity="0.7"/>
<ellipse cx="1382" cy="341" rx="11" ry="6" fill="#06344e" fill-opacity="0.7"/>
<ellipse cx="1305" cy="398" rx="10" ry="5" fill="#06344e" fill-opacity="0.7"/>
<ellipse cx="1310" cy="407" rx="8" ry="5" fill="#06344e" fill-opacity="0.7"/>
<ellipse cx="1304" cy="415" rx="11" ry="5" fill="#0e6a90" fill-opacity="0.7"/>
<ellipse cx="1449" cy="378" rx="7" ry="8" fill="#06344e" fill-opacity="0.7"/>
<ellipse cx="1240" cy="367" rx="11" ry="5" fill="#06344e" fill-opacity="0.7"/>
<ellipse cx="1220" cy="379" rx="6" ry="6" fill="#1070a0" fill-opacity="0.7"/>
<ellipse cx="1275" cy="385" rx="11" ry="6" fill="#1070a0" fill-opacity="0.7"/>
<ellipse cx="1277" cy="409" rx="9" ry="8" fill="#1070a0" fill-opacity="0.7"/>
<ellipse cx="1303" cy="345" rx="6" ry="6" fill="#06344e" fill-opacity="0.7"/>
<ellipse cx="1418" cy="388" rx="5" ry="8" fill="#0c5c80" fill-opacity="0.7"/>
<ellipse cx="1299" cy="377" rx="12" ry="6" fill="#0e6a90" fill-opacity="0.7"/>
<ellipse cx="1289" cy="398" rx="12" ry="5" fill="#06344e" fill-opacity="0.7"/>
<ellipse cx="1271" cy="429" rx="11" ry="5" fill="#06344e" fill-opacity="0.7"/>
<ellipse cx="1309" cy="344" rx="5" ry="7" fill="#0c5c80" fill-opacity="0.7"/>
<ellipse cx="1219" cy="392" rx="10" ry="8" fill="#0c5c80" fill-opacity="0.7"/>
<ellipse cx="1293" cy="427" rx="8" ry="5" fill="#0e6a90" fill-opacity="0.7"/>
</g>
<g filter="url(#b3)">
<ellipse cx="1322" cy="187" rx="10" ry="4" fill="#0e9e98" fill-opacity="0.6" transform="rotate(-8 1322 187)"/>
<ellipse cx="1425" cy="190" rx="13" ry="6" fill="#0e9e98" fill-opacity="0.6" transform="rotate(-8 1425 190)"/>
<ellipse cx="1361" cy="231" rx="14" ry="5" fill="#0e9e98" fill-opacity="0.6" transform="rotate(-8 1361 231)"/>
<ellipse cx="1383" cy="188" rx="19" ry="4" fill="#0e9e98" fill-opacity="0.6" transform="rotate(-8 1383 188)"/>
<ellipse cx="1318" cy="216" rx="10" ry="6" fill="#0e9e98" fill-opacity="0.6" transform="rotate(-8 1318 216)"/>
<ellipse cx="1451" cy="195" rx="19" ry="5" fill="#0e9e98" fill-opacity="0.6" transform="rotate(-8 1451 195)"/>
<ellipse cx="1430" cy="203" rx="13" ry="4" fill="#0e9e98" fill-opacity="0.6" transform="rotate(-8 1430 203)"/>
<ellipse cx="1207" cy="187" rx="20" ry="5" fill="#0e9e98" fill-opacity="0.6" transform="rotate(-8 1207 187)"/>
<ellipse cx="1339" cy="229" rx="15" ry="7" fill="#0e9e98" fill-opacity="0.6" transform="rotate(-8 1339 229)"/>
<ellipse cx="1309" cy="188" rx="19" ry="4" fill="#0e9e98" fill-opacity="0.6" transform="rotate(-8 1309 188)"/>
<ellipse cx="1435" cy="211" rx="20" ry="7" fill="#0e9e98" fill-opacity="0.6" transform="rotate(-8 1435 211)"/>
<ellipse cx="1396" cy="177" rx="8" ry="5" fill="#0e9e98" fill-opacity="0.6" transform="rotate(-8 1396 177)"/>
<ellipse cx="1443" cy="180" rx="13" ry="3" fill="#0e9e98" fill-opacity="0.6" transform="rotate(-8 1443 180)"/>
<ellipse cx="1295" cy="175" rx="12" ry="5" fill="#0e9e98" fill-opacity="0.6" transform="rotate(-8 1295 175)"/>
<ellipse cx="1263" cy="222" rx="9" ry="4" fill="#0e9e98" fill-opacity="0.6" transform="rotate(-8 1263 222)"/>
<ellipse cx="1280" cy="199" rx="17" ry="4" fill="#0e9e98" fill-opacity="0.6" transform="rotate(-8 1280 199)"/>
<ellipse cx="1407" cy="230" rx="10" ry="6" fill="#0e9e98" fill-opacity="0.6" transform="rotate(-8 1407 230)"/>
<ellipse cx="1379" cy="220" rx="15" ry="5" fill="#0e9e98" fill-opacity="0.6" transform="rotate(-8 1379 220)"/>
<ellipse cx="1233" cy="184" rx="10" ry="4" fill="#0e9e98" fill-opacity="0.6" transform="rotate(-8 1233 184)"/>
<ellipse cx="1247" cy="187" rx="15" ry="6" fill="#0e9e98" fill-opacity="0.6" transform="rotate(-8 1247 187)"/>
<ellipse cx="1436" cy="226" rx="9" ry="6" fill="#0e9e98" fill-opacity="0.6" transform="rotate(-8 1436 226)"/>
<ellipse cx="1259" cy="179" rx="11" ry="5" fill="#0e9e98" fill-opacity="0.6" transform="rotate(-8 1259 179)"/>
<ellipse cx="1219" cy="188" rx="13" ry="6" fill="#0e9e98" fill-opacity="0.6" transform="rotate(-8 1219 188)"/>
<ellipse cx="1321" cy="200" rx="12" ry="3" fill="#0e9e98" fill-opacity="0.6" transform="rotate(-8 1321 200)"/>
<ellipse cx="1460" cy="230" rx="17" ry="5" fill="#0e9e98" fill-opacity="0.6" transform="rotate(-8 1460 230)"/>
<ellipse cx="1334" cy="194" rx="16" ry="6" fill="#0e9e98" fill-opacity="0.6" transform="rotate(-8 1334 194)"/>
<ellipse cx="1295" cy="227" rx="17" ry="4" fill="#0e9e98" fill-opacity="0.6" transform="rotate(-8 1295 227)"/>
<ellipse cx="1440" cy="215" rx="11" ry="4" fill="#0e9e98" fill-opacity="0.6" transform="rotate(-8 1440 215)"/>
<ellipse cx="1423" cy="180" rx="13" ry="7" fill="#0e9e98" fill-opacity="0.6" transform="rotate(-8 1423 180)"/>
<ellipse cx="1279" cy="205" rx="19" ry="6" fill="#0e9e98" fill-opacity="0.6" transform="rotate(-8 1279 205)"/>
<ellipse cx="1434" cy="207" rx="19" ry="4" fill="#0e9e98" fill-opacity="0.6" transform="rotate(-8 1434 207)"/>
<ellipse cx="1461" cy="200" rx="16" ry="5" fill="#0e9e98" fill-opacity="0.6" transform="rotate(-8 1461 200)"/>
<ellipse cx="1287" cy="216" rx="15" ry="7" fill="#0e9e98" fill-opacity="0.6" transform="rotate(-8 1287 216)"/>
<ellipse cx="1398" cy="201" rx="13" ry="7" fill="#0e9e98" fill-opacity="0.6" transform="rotate(-8 1398 201)"/>
<ellipse cx="1305" cy="215" rx="16" ry="7" fill="#0e9e98" fill-opacity="0.6" transform="rotate(-8 1305 215)"/>
<ellipse cx="1261" cy="215" rx="10" ry="6" fill="#0e9e98" fill-opacity="0.6" transform="rotate(-8 1261 215)"/>
<ellipse cx="1396" cy="220" rx="18" ry="4" fill="#0e9e98" fill-opacity="0.6" transform="rotate(-8 1396 220)"/>
<ellipse cx="1455" cy="196" rx="13" ry="3" fill="#0e9e98" fill-opacity="0.6" transform="rotate(-8 1455 196)"/>
<ellipse cx="1359" cy="175" rx="12" ry="6" fill="#0e9e98" fill-opacity="0.6" transform="rotate(-8 1359 175)"/>
<ellipse cx="1422" cy="185" rx="17" ry="5" fill="#0e9e98" fill-opacity="0.6" transform="rotate(-8 1422 185)"/>
<ellipse cx="1265" cy="220" rx="17" ry="5" fill="#0e9e98" fill-opacity="0.6" transform="rotate(-8 1265 220)"/>
<ellipse cx="1359" cy="212" rx="16" ry="6" fill="#0e9e98" fill-opacity="0.6" transform="rotate(-8 1359 212)"/>
<ellipse cx="1428" cy="187" rx="8" ry="3" fill="#0e9e98" fill-opacity="0.6" transform="rotate(-8 1428 187)"/>
<ellipse cx="1294" cy="210" rx="20" ry="5" fill="#0e9e98" fill-opacity="0.6" transform="rotate(-8 1294 210)"/>
<ellipse cx="1312" cy="208" rx="19" ry="5" fill="#0e9e98" fill-opacity="0.6" transform="rotate(-8 1312 208)"/>
<ellipse cx="1291" cy="283" rx="22" ry="6" fill="#3af4dc" fill-opacity="0.6" transform="rotate(-8 1291 283)"/>
<ellipse cx="1434" cy="249" rx="13" ry="7" fill="#3af4dc" fill-opacity="0.6" transform="rotate(-8 1434 249)"/>
<ellipse cx="1457" cy="279" rx="13" ry="5" fill="#14c4b0" fill-opacity="0.6" transform="rotate(-8 1457 279)"/>
<ellipse cx="1309" cy="245" rx="14" ry="6" fill="#3af4dc" fill-opacity="0.6" transform="rotate(-8 1309 245)"/>
<ellipse cx="1258" cy="294" rx="22" ry="5" fill="#3af4dc" fill-opacity="0.6" transform="rotate(-8 1258 294)"/>
<ellipse cx="1398" cy="299" rx="15" ry="7" fill="#14c4b0" fill-opacity="0.6" transform="rotate(-8 1398 299)"/>
<ellipse cx="1238" cy="286" rx="9" ry="6" fill="#14c4b0" fill-opacity="0.6" transform="rotate(-8 1238 286)"/>
<ellipse cx="1370" cy="267" rx="17" ry="5" fill="#3af4dc" fill-opacity="0.6" transform="rotate(-8 1370 267)"/>
<ellipse cx="1281" cy="240" rx="21" ry="5" fill="#14c4b0" fill-opacity="0.6" transform="rotate(-8 1281 240)"/>
<ellipse cx="1304" cy="246" rx="19" ry="4" fill="#3af4dc" fill-opacity="0.6" transform="rotate(-8 1304 246)"/>
<ellipse cx="1222" cy="284" rx="11" ry="4" fill="#3af4dc" fill-opacity="0.6" transform="rotate(-8 1222 284)"/>
<ellipse cx="1255" cy="249" rx="13" ry="5" fill="#14c4b0" fill-opacity="0.6" transform="rotate(-8 1255 249)"/>
<ellipse cx="1430" cy="242" rx="13" ry="7" fill="#14c4b0" fill-opacity="0.6" transform="rotate(-8 1430 242)"/>
<ellipse cx="1421" cy="238" rx="10" ry="4" fill="#14c4b0" fill-opacity="0.6" transform="rotate(-8 1421 238)"/>
<ellipse cx="1215" cy="266" rx="13" ry="4" fill="#14c4b0" fill-opacity="0.6" transform="rotate(-8 1215 266)"/>
<ellipse cx="1383" cy="283" rx="17" ry="4" fill="#14c4b0" fill-opacity="0.6" transform="rotate(-8 1383 283)"/>
<ellipse cx="1464" cy="287" rx="14" ry="4" fill="#14c4b0" fill-opacity="0.6" transform="rotate(-8 1464 287)"/>
<ellipse cx="1248" cy="275" rx="15" ry="7" fill="#14c4b0" fill-opacity="0.6" transform="rotate(-8 1248 275)"/>
<ellipse cx="1314" cy="278" rx="9" ry="6" fill="#14c4b0" fill-opacity="0.6" transform="rotate(-8 1314 278)"/>
<ellipse cx="1369" cy="281" rx="16" ry="7" fill="#14c4b0" fill-opacity="0.6" transform="rotate(-8 1369 281)"/>
<ellipse cx="1459" cy="289" rx="19" ry="4" fill="#3af4dc" fill-opacity="0.6" transform="rotate(-8 1459 289)"/>
<ellipse cx="1376" cy="271" rx="8" ry="7" fill="#14c4b0" fill-opacity="0.6" transform="rotate(-8 1376 271)"/>
<ellipse cx="1479" cy="292" rx="19" ry="4" fill="#14c4b0" fill-opacity="0.6" transform="rotate(-8 1479 292)"/>
<ellipse cx="1348" cy="286" rx="9" ry="4" fill="#3af4dc" fill-opacity="0.6" transform="rotate(-8 1348 286)"/>
<ellipse cx="1451" cy="276" rx="19" ry="7" fill="#3af4dc" fill-opacity="0.6" transform="rotate(-8 1451 276)"/>
<ellipse cx="1441" cy="273" rx="16" ry="6" fill="#14c4b0" fill-opacity="0.6" transform="rotate(-8 1441 273)"/>
<ellipse cx="1426" cy="296" rx="18" ry="5" fill="#14c4b0" fill-opacity="0.6" transform="rotate(-8 1426 296)"/>
<ellipse cx="1256" cy="258" rx="9" ry="4" fill="#3af4dc" fill-opacity="0.6" transform="rotate(-8 1256 258)"/>
<ellipse cx="1253" cy="270" rx="14" ry="5" fill="#14c4b0" fill-opacity="0.6" transform="rotate(-8 1253 270)"/>
<ellipse cx="1448" cy="239" rx="21" ry="6" fill="#14c4b0" fill-opacity="0.6" transform="rotate(-8 1448 239)"/>
<ellipse cx="1492" cy="248" rx="16" ry="5" fill="#14c4b0" fill-opacity="0.6" transform="rotate(-8 1492 248)"/>
<ellipse cx="1475" cy="232" rx="14" ry="7" fill="#3af4dc" fill-opacity="0.6" transform="rotate(-8 1475 232)"/>
<ellipse cx="1226" cy="271" rx="13" ry="4" fill="#14c4b0" fill-opacity="0.6" transform="rotate(-8 1226 271)"/>
<ellipse cx="1312" cy="241" rx="18" ry="5" fill="#14c4b0" fill-opacity="0.6" transform="rotate(-8 1312 241)"/>
<ellipse cx="1332" cy="244" rx="19" ry="4" fill="#14c4b0" fill-opacity="0.6" transform="rotate(-8 1332 244)"/>
<ellipse cx="1255" cy="278" rx="10" ry="5" fill="#14c4b0" fill-opacity="0.6" transform="rotate(-8 1255 278)"/>
<ellipse cx="1273" cy="267" rx="18" ry="5" fill="#14c4b0" fill-opacity="0.6" transform="rotate(-8 1273 267)"/>
<ellipse cx="1275" cy="253" rx="16" ry="5" fill="#14c4b0" fill-opacity="0.6" transform="rotate(-8 1275 253)"/>
<ellipse cx="1435" cy="232" rx="9" ry="3" fill="#14c4b0" fill-opacity="0.6" transform="rotate(-8 1435 232)"/>
<ellipse cx="1473" cy="276" rx="11" ry="7" fill="#3af4dc" fill-opacity="0.6" transform="rotate(-8 1473 276)"/>
<ellipse cx="1208" cy="137" rx="11" ry="4" fill="#0a5a88" fill-opacity="0.6" transform="rotate(-8 1208 137)"/>
<ellipse cx="1305" cy="114" rx="12" ry="4" fill="#12a0d8" fill-opacity="0.6" transform="rotate(-8 1305 114)"/>
<ellipse cx="1221" cy="163" rx="13" ry="4" fill="#0a5a88" fill-opacity="0.6" transform="rotate(-8 1221 163)"/>
<ellipse cx="1447" cy="128" rx="13" ry="4" fill="#12a0d8" fill-opacity="0.6" transform="rotate(-8 1447 128)"/>
<ellipse cx="1276" cy="114" rx="9" ry="3" fill="#0a5a88" fill-opacity="0.6" transform="rotate(-8 1276 114)"/>
<ellipse cx="1269" cy="142" rx="19" ry="3" fill="#0a5a88" fill-opacity="0.6" transform="rotate(-8 1269 142)"/>
<ellipse cx="1331" cy="144" rx="9" ry="6" fill="#12a0d8" fill-opacity="0.6" transform="rotate(-8 1331 144)"/>
<ellipse cx="1349" cy="139" rx="13" ry="5" fill="#12a0d8" fill-opacity="0.6" transform="rotate(-8 1349 139)"/>
<ellipse cx="1300" cy="126" rx="10" ry="5" fill="#0a5a88" fill-opacity="0.6" transform="rotate(-8 1300 126)"/>
<ellipse cx="1475" cy="118" rx="13" ry="3" fill="#12a0d8" fill-opacity="0.6" transform="rotate(-8 1475 118)"/>
<ellipse cx="1385" cy="120" rx="14" ry="5" fill="#0a5a88" fill-opacity="0.6" transform="rotate(-8 1385 120)"/>
<ellipse cx="1380" cy="121" rx="19" ry="3" fill="#0a5a88" fill-opacity="0.6" transform="rotate(-8 1380 121)"/>
<ellipse cx="1287" cy="151" rx="21" ry="6" fill="#12a0d8" fill-opacity="0.6" transform="rotate(-8 1287 151)"/>
<ellipse cx="1435" cy="150" rx="15" ry="4" fill="#0a5a88" fill-opacity="0.6" transform="rotate(-8 1435 150)"/>
<ellipse cx="1471" cy="129" rx="11" ry="5" fill="#12a0d8" fill-opacity="0.6" transform="rotate(-8 1471 129)"/>
<ellipse cx="1337" cy="134" rx="22" ry="3" fill="#0a5a88" fill-opacity="0.6" transform="rotate(-8 1337 134)"/>
<ellipse cx="1219" cy="110" rx="10" ry="5" fill="#12a0d8" fill-opacity="0.6" transform="rotate(-8 1219 110)"/>
<ellipse cx="1461" cy="144" rx="16" ry="3" fill="#12a0d8" fill-opacity="0.6" transform="rotate(-8 1461 144)"/>
<ellipse cx="1268" cy="145" rx="22" ry="3" fill="#12a0d8" fill-opacity="0.6" transform="rotate(-8 1268 145)"/>
<ellipse cx="1446" cy="158" rx="11" ry="4" fill="#12a0d8" fill-opacity="0.6" transform="rotate(-8 1446 158)"/>
<ellipse cx="1495" cy="147" rx="9" ry="6" fill="#12a0d8" fill-opacity="0.6" transform="rotate(-8 1495 147)"/>
<ellipse cx="1317" cy="111" rx="12" ry="5" fill="#12a0d8" fill-opacity="0.6" transform="rotate(-8 1317 111)"/>
<ellipse cx="1451" cy="149" rx="19" ry="6" fill="#0a5a88" fill-opacity="0.6" transform="rotate(-8 1451 149)"/>
<ellipse cx="1422" cy="155" rx="12" ry="5" fill="#12a0d8" fill-opacity="0.6" transform="rotate(-8 1422 155)"/>
<ellipse cx="1378" cy="118" rx="22" ry="6" fill="#12a0d8" fill-opacity="0.6" transform="rotate(-8 1378 118)"/>
<ellipse cx="1445" cy="120" rx="12" ry="4" fill="#12a0d8" fill-opacity="0.6" transform="rotate(-8 1445 120)"/>
<ellipse cx="1248" cy="125" rx="10" ry="5" fill="#12a0d8" fill-opacity="0.6" transform="rotate(-8 1248 125)"/>
<ellipse cx="1380" cy="109" rx="16" ry="6" fill="#0a5a88" fill-opacity="0.6" transform="rotate(-8 1380 109)"/>
<ellipse cx="1303" cy="152" rx="14" ry="6" fill="#0a5a88" fill-opacity="0.6" transform="rotate(-8 1303 152)"/>
<ellipse cx="1327" cy="131" rx="9" ry="3" fill="#0a5a88" fill-opacity="0.6" transform="rotate(-8 1327 131)"/>
</g>
<g filter="url(#b1)">
<ellipse cx="1389" cy="508" rx="5.2" ry="1.7" fill="#2ac8a0" transform="rotate(-20 1389 508)"/>
<ellipse cx="1397" cy="505" rx="5.4" ry="1.6" fill="#12a080" transform="rotate(-20 1397 505)"/>
<ellipse cx="1396" cy="507" rx="2.5" ry="1.4" fill="#12a080" transform="rotate(-20 1396 507)"/>
<ellipse cx="1317" cy="523" rx="3.0" ry="1.5" fill="#0e8878" transform="rotate(-20 1317 523)"/>
<ellipse cx="1287" cy="536" rx="5.1" ry="1.1" fill="#18b890" transform="rotate(-20 1287 536)"/>
<ellipse cx="1246" cy="545" rx="2.5" ry="1.0" fill="#18b890" transform="rotate(-20 1246 545)"/>
<ellipse cx="1267" cy="537" rx="5.9" ry="1.7" fill="#20d0a0" transform="rotate(-20 1267 537)"/>
<ellipse cx="1298" cy="529" rx="5.5" ry="1.5" fill="#12a080" transform="rotate(-20 1298 529)"/>
<ellipse cx="1483" cy="484" rx="5.9" ry="1.7" fill="#20d0a0" transform="rotate(-20 1483 484)"/>
<ellipse cx="1211" cy="553" rx="5.7" ry="1.2" fill="#20d0a0" transform="rotate(-20 1211 553)"/>
<ellipse cx="1294" cy="532" rx="2.0" ry="1.5" fill="#20d0a0" transform="rotate(-20 1294 532)"/>
<ellipse cx="1224" cy="549" rx="3.2" ry="1.5" fill="#12a080" transform="rotate(-20 1224 549)"/>
<ellipse cx="1347" cy="519" rx="2.2" ry="1.7" fill="#18b890" transform="rotate(-20 1347 519)"/>
<ellipse cx="1485" cy="481" rx="3.6" ry="1.4" fill="#0e8878" transform="rotate(-20 1485 481)"/>
<ellipse cx="1313" cy="527" rx="2.0" ry="1.0" fill="#12a080" transform="rotate(-20 1313 527)"/>
<ellipse cx="1389" cy="510" rx="2.5" ry="1.2" fill="#0e8878" transform="rotate(-20 1389 510)"/>
<ellipse cx="1307" cy="527" rx="4.1" ry="1.6" fill="#18b890" transform="rotate(-20 1307 527)"/>
<ellipse cx="1379" cy="511" rx="3.5" ry="1.2" fill="#0e8878" transform="rotate(-20 1379 511)"/>
<ellipse cx="1484" cy="480" rx="3.4" ry="1.5" fill="#12a080" transform="rotate(-20 1484 480)"/>
<ellipse cx="1305" cy="531" rx="4.2" ry="1.2" fill="#20d0a0" transform="rotate(-20 1305 531)"/>
<ellipse cx="1295" cy="533" rx="4.5" ry="1.5" fill="#20d0a0" transform="rotate(-20 1295 533)"/>
<ellipse cx="1499" cy="476" rx="2.2" ry="1.7" fill="#1a98a8" transform="rotate(-20 1499 476)"/>
<ellipse cx="1477" cy="481" rx="5.0" ry="1.3" fill="#20d0a0" transform="rotate(-20 1477 481)"/>
<ellipse cx="1339" cy="519" rx="2.2" ry="1.7" fill="#18b890" transform="rotate(-20 1339 519)"/>
<ellipse cx="1441" cy="492" rx="2.8" ry="1.7" fill="#1a98a8" transform="rotate(-20 1441 492)"/>
<ellipse cx="1485" cy="483" rx="5.2" ry="1.1" fill="#0e8878" transform="rotate(-20 1485 483)"/>
<ellipse cx="1315" cy="524" rx="3.7" ry="1.1" fill="#1a98a8" transform="rotate(-20 1315 524)"/>
<ellipse cx="1456" cy="492" rx="3.8" ry="1.4" fill="#2ac8a0" transform="rotate(-20 1456 492)"/>
<ellipse cx="1299" cy="529" rx="3.9" ry="1.7" fill="#18b890" transform="rotate(-20 1299 529)"/>
<ellipse cx="1316" cy="529" rx="5.8" ry="1.5" fill="#0e8878" transform="rotate(-20 1316 529)"/>
<ellipse cx="1461" cy="486" rx="4.0" ry="1.4" fill="#1a98a8" transform="rotate(-20 1461 486)"/>
<ellipse cx="1461" cy="488" rx="5.1" ry="1.6" fill="#2ac8a0" transform="rotate(-20 1461 488)"/>
<ellipse cx="1378" cy="507" rx="3.2" ry="1.4" fill="#2ac8a0" transform="rotate(-20 1378 507)"/>
<ellipse cx="1288" cy="533" rx="5.1" ry="1.5" fill="#20d0a0" transform="rotate(-20 1288 533)"/>
<ellipse cx="1487" cy="481" rx="2.7" ry="1.6" fill="#0e8878" transform="rotate(-20 1487 481)"/>
<ellipse cx="1366" cy="511" rx="4.7" ry="1.3" fill="#1a98a8" transform="rotate(-20 1366 511)"/>
<ellipse cx="1396" cy="507" rx="3.4" ry="1.5" fill="#2ac8a0" transform="rotate(-20 1396 507)"/>
<ellipse cx="1482" cy="482" rx="5.7" ry="1.1" fill="#2ac8a0" transform="rotate(-20 1482 482)"/>
<ellipse cx="1338" cy="519" rx="3.3" ry="1.1" fill="#12a080" transform="rotate(-20 1338 519)"/>
<ellipse cx="1264" cy="539" rx="5.4" ry="1.2" fill="#18b890" transform="rotate(-20 1264 539)"/>
<ellipse cx="1417" cy="501" rx="2.7" ry="1.6" fill="#1a98a8" transform="rotate(-20 1417 501)"/>
<ellipse cx="1357" cy="518" rx="3.2" ry="1.4" fill="#2ac8a0" transform="rotate(-20 1357 518)"/>
<ellipse cx="1285" cy="537" rx="2.8" ry="1.4" fill="#1a98a8" transform="rotate(-20 1285 537)"/>
<ellipse cx="1397" cy="503" rx="4.7" ry="1.5" fill="#18b890" transform="rotate(-20 1397 503)"/>
<ellipse cx="1496" cy="482" rx="2.7" ry="1.7" fill="#18b890" transform="rotate(-20 1496 482)"/>
<ellipse cx="1299" cy="529" rx="2.8" ry="1.0" fill="#0e8878" transform="rotate(-20 1299 529)"/>
<ellipse cx="1309" cy="529" rx="2.3" ry="1.2" fill="#2ac8a0" transform="rotate(-20 1309 529)"/>
<ellipse cx="1471" cy="483" rx="3.6" ry="1.2" fill="#0e8878" transform="rotate(-20 1471 483)"/>
<ellipse cx="1461" cy="490" rx="4.2" ry="1.7" fill="#1a98a8" transform="rotate(-20 1461 490)"/>
<ellipse cx="1386" cy="505" rx="4.2" ry="1.3" fill="#1a98a8" transform="rotate(-20 1386 505)"/>
<ellipse cx="1291" cy="531" rx="2.5" ry="1.3" fill="#1a98a8" transform="rotate(-20 1291 531)"/>
<ellipse cx="1394" cy="505" rx="2.6" ry="1.4" fill="#1a98a8" transform="rotate(-20 1394 505)"/>
<ellipse cx="1346" cy="516" rx="2.5" ry="1.1" fill="#2ac8a0" transform="rotate(-20 1346 516)"/>
<ellipse cx="1205" cy="552" rx="4.3" ry="1.5" fill="#12a080" transform="rotate(-20 1205 552)"/>
<ellipse cx="1301" cy="532" rx="4.3" ry="1.3" fill="#12a080" transform="rotate(-20 1301 532)"/>
<ellipse cx="1351" cy="517" rx="4.8" ry="1.3" fill="#12a080" transform="rotate(-20 1351 517)"/>
<ellipse cx="1381" cy="508" rx="5.9" ry="1.4" fill="#0e8878" transform="rotate(-20 1381 508)"/>
<ellipse cx="1211" cy="556" rx="3.2" ry="1.7" fill="#12a080" transform="rotate(-20 1211 556)"/>
<ellipse cx="1346" cy="516" rx="4.5" ry="1.3" fill="#20d0a0" transform="rotate(-20 1346 516)"/>
<ellipse cx="1217" cy="549" rx="3.6" ry="1.4" fill="#1a98a8" transform="rotate(-20 1217 549)"/>
<ellipse cx="1286" cy="549" rx="5.1" ry="1.2" fill="#20d0a0" transform="rotate(-20 1286 549)"/>
<ellipse cx="1454" cy="504" rx="3.1" ry="1.4" fill="#0e8878" transform="rotate(-20 1454 504)"/>
<ellipse cx="1358" cy="530" rx="5.5" ry="1.7" fill="#18b890" transform="rotate(-20 1358 530)"/>
<ellipse cx="1429" cy="508" rx="4.1" ry="1.3" fill="#20d0a0" transform="rotate(-20 1429 508)"/>
<ellipse cx="1421" cy="508" rx="3.4" ry="1.5" fill="#1a98a8" transform="rotate(-20 1421 508)"/>
<ellipse cx="1244" cy="554" rx="4.2" ry="1.5" fill="#18b890" transform="rotate(-20 1244 554)"/>
<ellipse cx="1467" cy="500" rx="2.1" ry="1.6" fill="#0e8878" transform="rotate(-20 1467 500)"/>
<ellipse cx="1380" cy="523" rx="5.8" ry="1.5" fill="#0e8878" transform="rotate(-20 1380 523)"/>
<ellipse cx="1345" cy="532" rx="4.9" ry="1.7" fill="#0e8878" transform="rotate(-20 1345 532)"/>
<ellipse cx="1450" cy="501" rx="5.3" ry="1.5" fill="#0e8878" transform="rotate(-20 1450 501)"/>
<ellipse cx="1377" cy="524" rx="3.9" ry="1.2" fill="#12a080" transform="rotate(-20 1377 524)"/>
<ellipse cx="1346" cy="531" rx="4.0" ry="1.2" fill="#12a080" transform="rotate(-20 1346 531)"/>
<ellipse cx="1331" cy="535" rx="2.2" ry="1.5" fill="#20d0a0" transform="rotate(-20 1331 535)"/>
<ellipse cx="1447" cy="506" rx="4.7" ry="1.0" fill="#2ac8a0" transform="rotate(-20 1447 506)"/>
<ellipse cx="1332" cy="532" rx="3.6" ry="1.4" fill="#18b890" transform="rotate(-20 1332 532)"/>
<ellipse cx="1453" cy="501" rx="4.6" ry="1.7" fill="#2ac8a0" transform="rotate(-20 1453 501)"/>
<ellipse cx="1469" cy="502" rx="4.8" ry="1.3" fill="#12a080" transform="rotate(-20 1469 502)"/>
<ellipse cx="1385" cy="520" rx="2.6" ry="1.5" fill="#18b890" transform="rotate(-20 1385 520)"/>
<ellipse cx="1369" cy="526" rx="5.0" ry="1.2" fill="#1a98a8" transform="rotate(-20 1369 526)"/>
<ellipse cx="1375" cy="525" rx="5.5" ry="1.1" fill="#0e8878" transform="rotate(-20 1375 525)"/>
<ellipse cx="1232" cy="561" rx="4.0" ry="1.3" fill="#2ac8a0" transform="rotate(-20 1232 561)"/>
<ellipse cx="1315" cy="536" rx="4.8" ry="1.1" fill="#2ac8a0" transform="rotate(-20 1315 536)"/>
<ellipse cx="1405" cy="514" rx="5.8" ry="1.4" fill="#12a080" transform="rotate(-20 1405 514)"/>
<ellipse cx="1283" cy="547" rx="3.0" ry="1.6" fill="#1a98a8" transform="rotate(-20 1283 547)"/>
<ellipse cx="1493" cy="494" rx="5.5" ry="1.3" fill="#0e8878" transform="rotate(-20 1493 494)"/>
<ellipse cx="1258" cy="555" rx="4.6" ry="1.1" fill="#2ac8a0" transform="rotate(-20 1258 555)"/>
<ellipse cx="1216" cy="567" rx="4.0" ry="1.3" fill="#0e8878" transform="rotate(-20 1216 567)"/>
<ellipse cx="1464" cy="500" rx="3.3" ry="1.6" fill="#18b890" transform="rotate(-20 1464 500)"/>
<ellipse cx="1365" cy="525" rx="5.4" ry="1.7" fill="#0e8878" transform="rotate(-20 1365 525)"/>
<ellipse cx="1406" cy="513" rx="2.5" ry="1.7" fill="#2ac8a0" transform="rotate(-20 1406 513)"/>
<ellipse cx="1350" cy="528" rx="4.8" ry="1.3" fill="#12a080" transform="rotate(-20 1350 528)"/>
<ellipse cx="1290" cy="548" rx="4.8" ry="1.6" fill="#0e8878" transform="rotate(-20 1290 548)"/>
<ellipse cx="1245" cy="559" rx="4.6" ry="1.6" fill="#0e8878" transform="rotate(-20 1245 559)"/>
<ellipse cx="1489" cy="493" rx="2.1" ry="1.7" fill="#12a080" transform="rotate(-20 1489 493)"/>
<ellipse cx="1423" cy="510" rx="2.4" ry="1.0" fill="#12a080" transform="rotate(-20 1423 510)"/>
<ellipse cx="1263" cy="552" rx="5.7" ry="1.5" fill="#20d0a0" transform="rotate(-20 1263 552)"/>
<ellipse cx="1205" cy="567" rx="5.6" ry="1.5" fill="#0e8878" transform="rotate(-20 1205 567)"/>
<ellipse cx="1300" cy="542" rx="2.8" ry="1.5" fill="#18b890" transform="rotate(-20 1300 542)"/>
<ellipse cx="1316" cy="538" rx="5.5" ry="1.1" fill="#20d0a0" transform="rotate(-20 1316 538)"/>
<ellipse cx="1238" cy="561" rx="5.0" ry="1.5" fill="#18b890" transform="rotate(-20 1238 561)"/>
<ellipse cx="1347" cy="528" rx="5.7" ry="1.3" fill="#18b890" transform="rotate(-20 1347 528)"/>
<ellipse cx="1408" cy="516" rx="3.9" ry="1.7" fill="#18b890" transform="rotate(-20 1408 516)"/>
<ellipse cx="1437" cy="506" rx="3.8" ry="1.2" fill="#12a080" transform="rotate(-20 1437 506)"/>
<ellipse cx="1215" cy="566" rx="4.3" ry="1.5" fill="#1a98a8" transform="rotate(-20 1215 566)"/>
<ellipse cx="1323" cy="539" rx="3.5" ry="1.2" fill="#0e8878" transform="rotate(-20 1323 539)"/>
<ellipse cx="1312" cy="537" rx="6.0" ry="1.4" fill="#12a080" transform="rotate(-20 1312 537)"/>
<ellipse cx="1257" cy="552" rx="2.2" ry="1.5" fill="#2ac8a0" transform="rotate(-20 1257 552)"/>
<ellipse cx="1493" cy="490" rx="2.2" ry="1.6" fill="#0e8878" transform="rotate(-20 1493 490)"/>
<ellipse cx="1255" cy="551" rx="5.3" ry="1.6" fill="#1a98a8" transform="rotate(-20 1255 551)"/>
<ellipse cx="1308" cy="538" rx="2.3" ry="1.7" fill="#0e8878" transform="rotate(-20 1308 538)"/>
<ellipse cx="1232" cy="560" rx="4.7" ry="1.5" fill="#0e8878" transform="rotate(-20 1232 560)"/>
<ellipse cx="1322" cy="534" rx="3.0" ry="1.3" fill="#20d0a0" transform="rotate(-20 1322 534)"/>
<ellipse cx="1394" cy="520" rx="5.8" ry="1.1" fill="#2ac8a0" transform="rotate(-20 1394 520)"/>
<ellipse cx="1355" cy="528" rx="4.1" ry="1.1" fill="#20d0a0" transform="rotate(-20 1355 528)"/>
<ellipse cx="1438" cy="504" rx="5.9" ry="1.1" fill="#18b890" transform="rotate(-20 1438 504)"/>
<ellipse cx="1458" cy="500" rx="2.1" ry="1.4" fill="#0e8878" transform="rotate(-20 1458 500)"/>
<ellipse cx="1330" cy="536" rx="4.1" ry="1.1" fill="#18b890" transform="rotate(-20 1330 536)"/>
<ellipse cx="1474" cy="496" rx="3.8" ry="1.6" fill="#12a080" transform="rotate(-20 1474 496)"/>
<ellipse cx="1369" cy="523" rx="3.9" ry="1.6" fill="#20d0a0" transform="rotate(-20 1369 523)"/>
<ellipse cx="1447" cy="503" rx="2.5" ry="1.1" fill="#12a080" transform="rotate(-20 1447 503)"/>
<ellipse cx="1411" cy="528" rx="5.9" ry="1.5" fill="#20d0a0" transform="rotate(-20 1411 528)"/>
<ellipse cx="1223" cy="576" rx="2.2" ry="1.1" fill="#20d0a0" transform="rotate(-20 1223 576)"/>
<ellipse cx="1465" cy="514" rx="2.3" ry="1.6" fill="#0e8878" transform="rotate(-20 1465 514)"/>
<ellipse cx="1427" cy="522" rx="5.6" ry="1.5" fill="#12a080" transform="rotate(-20 1427 522)"/>
<ellipse cx="1375" cy="535" rx="5.3" ry="1.5" fill="#18b890" transform="rotate(-20 1375 535)"/>
<ellipse cx="1420" cy="525" rx="3.1" ry="1.6" fill="#0e8878" transform="rotate(-20 1420 525)"/>
<ellipse cx="1371" cy="536" rx="3.2" ry="1.1" fill="#0e8878" transform="rotate(-20 1371 536)"/>
<ellipse cx="1404" cy="527" rx="2.3" ry="1.6" fill="#1a98a8" transform="rotate(-20 1404 527)"/>
<ellipse cx="1213" cy="575" rx="5.9" ry="1.6" fill="#0e8878" transform="rotate(-20 1213 575)"/>
<ellipse cx="1459" cy="517" rx="4.4" ry="1.2" fill="#0e8878" transform="rotate(-20 1459 517)"/>
<ellipse cx="1242" cy="568" rx="3.4" ry="1.1" fill="#1a98a8" transform="rotate(-20 1242 568)"/>
<ellipse cx="1449" cy="518" rx="2.4" ry="1.4" fill="#12a080" transform="rotate(-20 1449 518)"/>
<ellipse cx="1391" cy="529" rx="5.1" ry="1.3" fill="#0e8878" transform="rotate(-20 1391 529)"/>
<ellipse cx="1240" cy="570" rx="5.7" ry="1.3" fill="#0e8878" transform="rotate(-20 1240 570)"/>
<ellipse cx="1256" cy="564" rx="4.7" ry="1.1" fill="#0e8878" transform="rotate(-20 1256 564)"/>
<ellipse cx="1491" cy="506" rx="2.4" ry="1.6" fill="#0e8878" transform="rotate(-20 1491 506)"/>
<ellipse cx="1407" cy="525" rx="2.0" ry="1.7" fill="#12a080" transform="rotate(-20 1407 525)"/>
<ellipse cx="1347" cy="545" rx="3.6" ry="1.2" fill="#20d0a0" transform="rotate(-20 1347 545)"/>
<ellipse cx="1447" cy="516" rx="4.1" ry="1.6" fill="#12a080" transform="rotate(-20 1447 516)"/>
<ellipse cx="1313" cy="554" rx="5.3" ry="1.5" fill="#18b890" transform="rotate(-20 1313 554)"/>
<ellipse cx="1387" cy="532" rx="2.6" ry="1.6" fill="#0e8878" transform="rotate(-20 1387 532)"/>
<ellipse cx="1318" cy="548" rx="3.6" ry="1.6" fill="#20d0a0" transform="rotate(-20 1318 548)"/>
<ellipse cx="1471" cy="509" rx="5.2" ry="1.2" fill="#2ac8a0" transform="rotate(-20 1471 509)"/>
<ellipse cx="1344" cy="544" rx="2.4" ry="1.1" fill="#2ac8a0" transform="rotate(-20 1344 544)"/>
<ellipse cx="1208" cy="579" rx="4.3" ry="1.1" fill="#0e8878" transform="rotate(-20 1208 579)"/>
<ellipse cx="1212" cy="579" rx="4.4" ry="1.4" fill="#1a98a8" transform="rotate(-20 1212 579)"/>
<ellipse cx="1345" cy="544" rx="3.6" ry="1.7" fill="#1a98a8" transform="rotate(-20 1345 544)"/>
<ellipse cx="1478" cy="510" rx="4.7" ry="1.4" fill="#0e8878" transform="rotate(-20 1478 510)"/>
<ellipse cx="1312" cy="553" rx="4.7" ry="1.4" fill="#20d0a0" transform="rotate(-20 1312 553)"/>
<ellipse cx="1289" cy="555" rx="5.1" ry="1.5" fill="#2ac8a0" transform="rotate(-20 1289 555)"/>
<ellipse cx="1327" cy="551" rx="2.1" ry="1.7" fill="#12a080" transform="rotate(-20 1327 551)"/>
<ellipse cx="1226" cy="576" rx="4.7" ry="1.7" fill="#20d0a0" transform="rotate(-20 1226 576)"/>
<ellipse cx="1408" cy="529" rx="5.0" ry="1.5" fill="#12a080" transform="rotate(-20 1408 529)"/>
<ellipse cx="1348" cy="540" rx="2.5" ry="1.3" fill="#1a98a8" transform="rotate(-20 1348 540)"/>
<ellipse cx="1330" cy="550" rx="4.7" ry="1.3" fill="#2ac8a0" transform="rotate(-20 1330 550)"/>
<ellipse cx="1361" cy="538" rx="4.7" ry="1.2" fill="#20d0a0" transform="rotate(-20 1361 538)"/>
<ellipse cx="1237" cy="573" rx="4.2" ry="1.5" fill="#20d0a0" transform="rotate(-20 1237 573)"/>
<ellipse cx="1278" cy="558" rx="3.2" ry="1.6" fill="#1a98a8" transform="rotate(-20 1278 558)"/>
<ellipse cx="1228" cy="576" rx="2.3" ry="1.3" fill="#12a080" transform="rotate(-20 1228 576)"/>
<ellipse cx="1271" cy="560" rx="4.3" ry="1.6" fill="#1a98a8" transform="rotate(-20 1271 560)"/>
<ellipse cx="1420" cy="523" rx="3.7" ry="1.4" fill="#12a080" transform="rotate(-20 1420 523)"/>
<ellipse cx="1294" cy="555" rx="4.4" ry="1.7" fill="#12a080" transform="rotate(-20 1294 555)"/>
<ellipse cx="1329" cy="545" rx="3.2" ry="1.4" fill="#1a98a8" transform="rotate(-20 1329 545)"/>
<ellipse cx="1259" cy="564" rx="4.4" ry="1.5" fill="#2ac8a0" transform="rotate(-20 1259 564)"/>
<ellipse cx="1302" cy="552" rx="5.8" ry="1.1" fill="#1a98a8" transform="rotate(-20 1302 552)"/>
<ellipse cx="1487" cy="505" rx="5.4" ry="1.5" fill="#12a080" transform="rotate(-20 1487 505)"/>
<ellipse cx="1469" cy="512" rx="5.2" ry="1.6" fill="#18b890" transform="rotate(-20 1469 512)"/>
<ellipse cx="1262" cy="563" rx="2.4" ry="1.1" fill="#1a98a8" transform="rotate(-20 1262 563)"/>
<ellipse cx="1429" cy="522" rx="3.8" ry="1.2" fill="#12a080" transform="rotate(-20 1429 522)"/>
<ellipse cx="1415" cy="528" rx="5.8" ry="1.5" fill="#18b890" transform="rotate(-20 1415 528)"/>
<ellipse cx="1313" cy="554" rx="2.8" ry="1.2" fill="#12a080" transform="rotate(-20 1313 554)"/>
<ellipse cx="1340" cy="546" rx="5.0" ry="1.1" fill="#0e8878" transform="rotate(-20 1340 546)"/>
<ellipse cx="1483" cy="507" rx="2.0" ry="1.7" fill="#20d0a0" transform="rotate(-20 1483 507)"/>
<ellipse cx="1244" cy="567" rx="3.5" ry="1.3" fill="#2ac8a0" transform="rotate(-20 1244 567)"/>
<ellipse cx="1226" cy="576" rx="4.9" ry="1.2" fill="#18b890" transform="rotate(-20 1226 576)"/>
<ellipse cx="1444" cy="521" rx="5.0" ry="1.1" fill="#20d0a0" transform="rotate(-20 1444 521)"/>
<ellipse cx="1318" cy="549" rx="4.0" ry="1.5" fill="#18b890" transform="rotate(-20 1318 549)"/>
<ellipse cx="1375" cy="534" rx="3.3" ry="1.6" fill="#1a98a8" transform="rotate(-20 1375 534)"/>
<ellipse cx="1333" cy="545" rx="5.9" ry="1.2" fill="#2ac8a0" transform="rotate(-20 1333 545)"/>
<ellipse cx="1227" cy="573" rx="2.4" ry="1.4" fill="#12a080" transform="rotate(-20 1227 573)"/>
<ellipse cx="1365" cy="550" rx="5.7" ry="1.1" fill="#20d0a0" transform="rotate(-20 1365 550)"/>
<ellipse cx="1243" cy="580" rx="5.3" ry="1.1" fill="#18b890" transform="rotate(-20 1243 580)"/>
<ellipse cx="1211" cy="591" rx="5.8" ry="1.7" fill="#18b890" transform="rotate(-20 1211 591)"/>
<ellipse cx="1221" cy="586" rx="5.9" ry="1.3" fill="#0e8878" transform="rotate(-20 1221 586)"/>
<ellipse cx="1358" cy="555" rx="4.4" ry="1.6" fill="#0e8878" transform="rotate(-20 1358 555)"/>
<ellipse cx="1355" cy="551" rx="3.6" ry="1.6" fill="#0e8878" transform="rotate(-20 1355 551)"/>
<ellipse cx="1459" cy="529" rx="4.6" ry="1.5" fill="#1a98a8" transform="rotate(-20 1459 529)"/>
<ellipse cx="1216" cy="587" rx="5.1" ry="1.3" fill="#0e8878" transform="rotate(-20 1216 587)"/>
<ellipse cx="1475" cy="521" rx="6.0" ry="1.6" fill="#20d0a0" transform="rotate(-20 1475 521)"/>
<ellipse cx="1249" cy="583" rx="3.7" ry="1.7" fill="#20d0a0" transform="rotate(-20 1249 583)"/>
<ellipse cx="1269" cy="575" rx="3.1" ry="1.4" fill="#20d0a0" transform="rotate(-20 1269 575)"/>
<ellipse cx="1206" cy="593" rx="5.1" ry="1.6" fill="#18b890" transform="rotate(-20 1206 593)"/>
<ellipse cx="1227" cy="586" rx="5.6" ry="1.7" fill="#12a080" transform="rotate(-20 1227 586)"/>
<ellipse cx="1396" cy="544" rx="4.0" ry="1.2" fill="#0e8878" transform="rotate(-20 1396 544)"/>
<ellipse cx="1245" cy="580" rx="5.7" ry="1.7" fill="#18b890" transform="rotate(-20 1245 580)"/>
<ellipse cx="1209" cy="593" rx="2.3" ry="1.1" fill="#2ac8a0" transform="rotate(-20 1209 593)"/>
<ellipse cx="1315" cy="565" rx="2.6" ry="1.4" fill="#2ac8a0" transform="rotate(-20 1315 565)"/>
<ellipse cx="1369" cy="548" rx="2.4" ry="1.3" fill="#20d0a0" transform="rotate(-20 1369 548)"/>
<ellipse cx="1314" cy="564" rx="4.3" ry="1.7" fill="#12a080" transform="rotate(-20 1314 564)"/>
<ellipse cx="1490" cy="516" rx="2.1" ry="1.0" fill="#0e8878" transform="rotate(-20 1490 516)"/>
<ellipse cx="1244" cy="582" rx="4.8" ry="1.0" fill="#12a080" transform="rotate(-20 1244 582)"/>
<ellipse cx="1329" cy="560" rx="4.4" ry="1.6" fill="#18b890" transform="rotate(-20 1329 560)"/>
<ellipse cx="1442" cy="529" rx="4.8" ry="1.7" fill="#18b890" transform="rotate(-20 1442 529)"/>
<ellipse cx="1370" cy="549" rx="2.4" ry="1.1" fill="#20d0a0" transform="rotate(-20 1370 549)"/>
<ellipse cx="1373" cy="547" rx="4.3" ry="1.4" fill="#0e8878" transform="rotate(-20 1373 547)"/>
<ellipse cx="1496" cy="515" rx="2.7" ry="1.7" fill="#18b890" transform="rotate(-20 1496 515)"/>
<ellipse cx="1395" cy="540" rx="2.8" ry="1.5" fill="#18b890" transform="rotate(-20 1395 540)"/>
<ellipse cx="1478" cy="520" rx="4.2" ry="1.6" fill="#12a080" transform="rotate(-20 1478 520)"/>
<ellipse cx="1340" cy="555" rx="2.0" ry="1.4" fill="#1a98a8" transform="rotate(-20 1340 555)"/>
<ellipse cx="1339" cy="555" rx="2.4" ry="1.3" fill="#12a080" transform="rotate(-20 1339 555)"/>
<ellipse cx="1315" cy="563" rx="5.3" ry="1.4" fill="#12a080" transform="rotate(-20 1315 563)"/>
<ellipse cx="1424" cy="534" rx="5.3" ry="1.5" fill="#0e8878" transform="rotate(-20 1424 534)"/>
<ellipse cx="1254" cy="581" rx="4.8" ry="1.4" fill="#0e8878" transform="rotate(-20 1254 581)"/>
<ellipse cx="1475" cy="524" rx="4.4" ry="1.4" fill="#2ac8a0" transform="rotate(-20 1475 524)"/>
<ellipse cx="1310" cy="563" rx="3.8" ry="1.5" fill="#1a98a8" transform="rotate(-20 1310 563)"/>
<ellipse cx="1351" cy="557" rx="2.2" ry="1.4" fill="#18b890" transform="rotate(-20 1351 557)"/>
<ellipse cx="1327" cy="561" rx="3.8" ry="1.4" fill="#1a98a8" transform="rotate(-20 1327 561)"/>
<ellipse cx="1485" cy="517" rx="2.3" ry="1.5" fill="#18b890" transform="rotate(-20 1485 517)"/>
<ellipse cx="1218" cy="590" rx="3.2" ry="1.4" fill="#1a98a8" transform="rotate(-20 1218 590)"/>
<ellipse cx="1418" cy="534" rx="4.6" ry="1.6" fill="#18b890" transform="rotate(-20 1418 534)"/>
<ellipse cx="1325" cy="560" rx="3.8" ry="1.2" fill="#20d0a0" transform="rotate(-20 1325 560)"/>
<ellipse cx="1357" cy="555" rx="3.9" ry="1.1" fill="#12a080" transform="rotate(-20 1357 555)"/>
<ellipse cx="1483" cy="519" rx="4.4" ry="1.3" fill="#12a080" transform="rotate(-20 1483 519)"/>
<ellipse cx="1309" cy="563" rx="3.7" ry="1.5" fill="#2ac8a0" transform="rotate(-20 1309 563)"/>
<ellipse cx="1321" cy="560" rx="5.7" ry="1.1" fill="#1a98a8" transform="rotate(-20 1321 560)"/>
<ellipse cx="1337" cy="558" rx="5.6" ry="1.1" fill="#20d0a0" transform="rotate(-20 1337 558)"/>
<ellipse cx="1371" cy="549" rx="5.8" ry="1.2" fill="#12a080" transform="rotate(-20 1371 549)"/>
<ellipse cx="1400" cy="541" rx="5.1" ry="1.6" fill="#20d0a0" transform="rotate(-20 1400 541)"/>
<ellipse cx="1387" cy="543" rx="3.7" ry="1.6" fill="#1a98a8" transform="rotate(-20 1387 543)"/>
<ellipse cx="1283" cy="573" rx="4.6" ry="1.7" fill="#18b890" transform="rotate(-20 1283 573)"/>
<ellipse cx="1408" cy="537" rx="2.4" ry="1.7" fill="#20d0a0" transform="rotate(-20 1408 537)"/>
<ellipse cx="1454" cy="528" rx="2.2" ry="1.7" fill="#0e8878" transform="rotate(-20 1454 528)"/>
<ellipse cx="1256" cy="578" rx="5.1" ry="1.1" fill="#20d0a0" transform="rotate(-20 1256 578)"/>
<ellipse cx="1465" cy="524" rx="3.2" ry="1.3" fill="#0e8878" transform="rotate(-20 1465 524)"/>
<ellipse cx="1224" cy="586" rx="2.7" ry="1.7" fill="#2ac8a0" transform="rotate(-20 1224 586)"/>
<ellipse cx="1469" cy="524" rx="2.4" ry="1.3" fill="#12a080" transform="rotate(-20 1469 524)"/>
<ellipse cx="1329" cy="563" rx="4.2" ry="1.5" fill="#2ac8a0" transform="rotate(-20 1329 563)"/>
<ellipse cx="1356" cy="556" rx="5.8" ry="1.3" fill="#18b890" transform="rotate(-20 1356 556)"/>
<ellipse cx="1255" cy="578" rx="4.5" ry="1.1" fill="#2ac8a0" transform="rotate(-20 1255 578)"/>
<ellipse cx="1496" cy="517" rx="3.7" ry="1.2" fill="#1a98a8" transform="rotate(-20 1496 517)"/>
<ellipse cx="1339" cy="572" rx="2.2" ry="1.7" fill="#12a080" transform="rotate(-20 1339 572)"/>
<ellipse cx="1318" cy="576" rx="5.7" ry="1.2" fill="#2ac8a0" transform="rotate(-20 1318 576)"/>
<ellipse cx="1361" cy="562" rx="2.2" ry="1.7" fill="#0e8878" transform="rotate(-20 1361 562)"/>
<ellipse cx="1295" cy="582" rx="5.2" ry="1.5" fill="#20d0a0" transform="rotate(-20 1295 582)"/>
<ellipse cx="1289" cy="584" rx="3.0" ry="1.4" fill="#2ac8a0" transform="rotate(-20 1289 584)"/>
<ellipse cx="1383" cy="556" rx="2.8" ry="1.5" fill="#2ac8a0" transform="rotate(-20 1383 556)"/>
<ellipse cx="1432" cy="546" rx="2.9" ry="1.2" fill="#2ac8a0" transform="rotate(-20 1432 546)"/>
<ellipse cx="1231" cy="598" rx="4.5" ry="1.6" fill="#12a080" transform="rotate(-20 1231 598)"/>
<ellipse cx="1442" cy="543" rx="3.2" ry="1.7" fill="#2ac8a0" transform="rotate(-20 1442 543)"/>
<ellipse cx="1310" cy="575" rx="4.9" ry="1.1" fill="#18b890" transform="rotate(-20 1310 575)"/>
<ellipse cx="1304" cy="580" rx="4.6" ry="1.4" fill="#1a98a8" transform="rotate(-20 1304 580)"/>
<ellipse cx="1476" cy="533" rx="3.3" ry="1.7" fill="#12a080" transform="rotate(-20 1476 533)"/>
<ellipse cx="1360" cy="563" rx="3.5" ry="1.6" fill="#20d0a0" transform="rotate(-20 1360 563)"/>
<ellipse cx="1398" cy="556" rx="4.9" ry="1.0" fill="#12a080" transform="rotate(-20 1398 556)"/>
<ellipse cx="1297" cy="583" rx="4.6" ry="1.3" fill="#1a98a8" transform="rotate(-20 1297 583)"/>
<ellipse cx="1404" cy="552" rx="4.9" ry="1.4" fill="#2ac8a0" transform="rotate(-20 1404 552)"/>
<ellipse cx="1408" cy="554" rx="2.1" ry="1.4" fill="#2ac8a0" transform="rotate(-20 1408 554)"/>
<ellipse cx="1205" cy="606" rx="5.1" ry="1.6" fill="#18b890" transform="rotate(-20 1205 606)"/>
<ellipse cx="1272" cy="584" rx="5.9" ry="1.6" fill="#12a080" transform="rotate(-20 1272 584)"/>
<ellipse cx="1492" cy="532" rx="3.0" ry="1.6" fill="#2ac8a0" transform="rotate(-20 1492 532)"/>
<ellipse cx="1235" cy="596" rx="5.5" ry="1.5" fill="#18b890" transform="rotate(-20 1235 596)"/>
<ellipse cx="1265" cy="587" rx="2.3" ry="1.7" fill="#20d0a0" transform="rotate(-20 1265 587)"/>
<ellipse cx="1333" cy="570" rx="4.9" ry="1.3" fill="#1a98a8" transform="rotate(-20 1333 570)"/>
<ellipse cx="1368" cy="564" rx="5.1" ry="1.5" fill="#20d0a0" transform="rotate(-20 1368 564)"/>
<ellipse cx="1362" cy="561" rx="3.7" ry="1.3" fill="#12a080" transform="rotate(-20 1362 561)"/>
<ellipse cx="1431" cy="544" rx="3.8" ry="1.3" fill="#0e8878" transform="rotate(-20 1431 544)"/>
<ellipse cx="1346" cy="568" rx="2.1" ry="1.6" fill="#1a98a8" transform="rotate(-20 1346 568)"/>
<ellipse cx="1389" cy="559" rx="4.5" ry="1.5" fill="#1a98a8" transform="rotate(-20 1389 559)"/>
<ellipse cx="1265" cy="590" rx="3.8" ry="1.4" fill="#18b890" transform="rotate(-20 1265 590)"/>
<ellipse cx="1410" cy="550" rx="4.1" ry="1.7" fill="#12a080" transform="rotate(-20 1410 550)"/>
<ellipse cx="1270" cy="585" rx="3.7" ry="1.2" fill="#2ac8a0" transform="rotate(-20 1270 585)"/>
<ellipse cx="1462" cy="537" rx="5.1" ry="1.1" fill="#0e8878" transform="rotate(-20 1462 537)"/>
<ellipse cx="1408" cy="550" rx="3.6" ry="1.3" fill="#0e8878" transform="rotate(-20 1408 550)"/>
<ellipse cx="1488" cy="530" rx="4.1" ry="1.2" fill="#2ac8a0" transform="rotate(-20 1488 530)"/>
<ellipse cx="1459" cy="540" rx="5.1" ry="1.7" fill="#0e8878" transform="rotate(-20 1459 540)"/>
<ellipse cx="1439" cy="544" rx="4.6" ry="1.5" fill="#2ac8a0" transform="rotate(-20 1439 544)"/>
<ellipse cx="1422" cy="550" rx="2.8" ry="1.4" fill="#2ac8a0" transform="rotate(-20 1422 550)"/>
<ellipse cx="1406" cy="554" rx="2.8" ry="1.4" fill="#12a080" transform="rotate(-20 1406 554)"/>
<ellipse cx="1313" cy="574" rx="4.4" ry="1.3" fill="#12a080" transform="rotate(-20 1313 574)"/>
<ellipse cx="1390" cy="555" rx="4.2" ry="1.5" fill="#18b890" transform="rotate(-20 1390 555)"/>
<ellipse cx="1424" cy="549" rx="3.9" ry="1.6" fill="#20d0a0" transform="rotate(-20 1424 549)"/>
<ellipse cx="1419" cy="551" rx="4.0" ry="1.3" fill="#18b890" transform="rotate(-20 1419 551)"/>
<ellipse cx="1418" cy="549" rx="5.5" ry="1.2" fill="#1a98a8" transform="rotate(-20 1418 549)"/>
<ellipse cx="1338" cy="573" rx="4.4" ry="1.4" fill="#12a080" transform="rotate(-20 1338 573)"/>
<ellipse cx="1321" cy="575" rx="5.9" ry="1.0" fill="#0e8878" transform="rotate(-20 1321 575)"/>
<ellipse cx="1292" cy="584" rx="2.3" ry="1.4" fill="#12a080" transform="rotate(-20 1292 584)"/>
<ellipse cx="1230" cy="599" rx="3.3" ry="1.1" fill="#20d0a0" transform="rotate(-20 1230 599)"/>
<ellipse cx="1325" cy="572" rx="5.4" ry="1.6" fill="#20d0a0" transform="rotate(-20 1325 572)"/>
<ellipse cx="1391" cy="558" rx="5.7" ry="1.7" fill="#2ac8a0" transform="rotate(-20 1391 558)"/>
<ellipse cx="1462" cy="539" rx="2.3" ry="1.4" fill="#0e8878" transform="rotate(-20 1462 539)"/>
<ellipse cx="1269" cy="587" rx="3.7" ry="1.5" fill="#1a98a8" transform="rotate(-20 1269 587)"/>
<ellipse cx="1226" cy="600" rx="3.0" ry="1.2" fill="#18b890" transform="rotate(-20 1226 600)"/>
<ellipse cx="1379" cy="557" rx="3.5" ry="1.3" fill="#12a080" transform="rotate(-20 1379 557)"/>
<ellipse cx="1307" cy="581" rx="2.4" ry="1.3" fill="#12a080" transform="rotate(-20 1307 581)"/>
<ellipse cx="1310" cy="575" rx="3.3" ry="1.6" fill="#0e8878" transform="rotate(-20 1310 575)"/>
<ellipse cx="1302" cy="581" rx="3.8" ry="1.7" fill="#18b890" transform="rotate(-20 1302 581)"/>
<ellipse cx="1381" cy="562" rx="3.2" ry="1.3" fill="#1a98a8" transform="rotate(-20 1381 562)"/>
<ellipse cx="1360" cy="565" rx="2.4" ry="1.4" fill="#0e8878" transform="rotate(-20 1360 565)"/>
<ellipse cx="1327" cy="571" rx="4.9" ry="1.7" fill="#18b890" transform="rotate(-20 1327 571)"/>
<ellipse cx="1244" cy="594" rx="5.5" ry="1.2" fill="#20d0a0" transform="rotate(-20 1244 594)"/>
<ellipse cx="1329" cy="588" rx="2.4" ry="1.0" fill="#12a080" transform="rotate(-20 1329 588)"/>
<ellipse cx="1422" cy="558" rx="2.4" ry="1.6" fill="#18b890" transform="rotate(-20 1422 558)"/>
<ellipse cx="1225" cy="610" rx="4.5" ry="1.2" fill="#2ac8a0" transform="rotate(-20 1225 610)"/>
<ellipse cx="1273" cy="599" rx="3.2" ry="1.5" fill="#1a98a8" transform="rotate(-20 1273 599)"/>
<ellipse cx="1410" cy="564" rx="5.4" ry="1.6" fill="#1a98a8" transform="rotate(-20 1410 564)"/>
<ellipse cx="1341" cy="579" rx="3.5" ry="1.7" fill="#1a98a8" transform="rotate(-20 1341 579)"/>
<ellipse cx="1231" cy="610" rx="3.1" ry="1.7" fill="#20d0a0" transform="rotate(-20 1231 610)"/>
<ellipse cx="1483" cy="548" rx="3.6" ry="1.6" fill="#20d0a0" transform="rotate(-20 1483 548)"/>
<ellipse cx="1243" cy="609" rx="4.9" ry="1.3" fill="#20d0a0" transform="rotate(-20 1243 609)"/>
<ellipse cx="1258" cy="606" rx="2.0" ry="1.5" fill="#20d0a0" transform="rotate(-20 1258 606)"/>
<ellipse cx="1280" cy="598" rx="3.7" ry="1.5" fill="#0e8878" transform="rotate(-20 1280 598)"/>
<ellipse cx="1240" cy="607" rx="2.8" ry="1.1" fill="#0e8878" transform="rotate(-20 1240 607)"/>
<ellipse cx="1277" cy="599" rx="4.3" ry="1.4" fill="#18b890" transform="rotate(-20 1277 599)"/>
<ellipse cx="1435" cy="556" rx="3.4" ry="1.5" fill="#12a080" transform="rotate(-20 1435 556)"/>
<ellipse cx="1455" cy="549" rx="2.8" ry="1.0" fill="#0e8878" transform="rotate(-20 1455 549)"/>
<ellipse cx="1360" cy="574" rx="2.9" ry="1.7" fill="#20d0a0" transform="rotate(-20 1360 574)"/>
<ellipse cx="1270" cy="600" rx="2.1" ry="1.1" fill="#12a080" transform="rotate(-20 1270 600)"/>
<ellipse cx="1237" cy="610" rx="2.5" ry="1.7" fill="#2ac8a0" transform="rotate(-20 1237 610)"/>
<ellipse cx="1237" cy="612" rx="5.0" ry="1.7" fill="#20d0a0" transform="rotate(-20 1237 612)"/>
<ellipse cx="1436" cy="556" rx="2.7" ry="1.2" fill="#18b890" transform="rotate(-20 1436 556)"/>
<ellipse cx="1320" cy="586" rx="5.9" ry="1.6" fill="#20d0a0" transform="rotate(-20 1320 586)"/>
<ellipse cx="1344" cy="580" rx="2.2" ry="1.6" fill="#1a98a8" transform="rotate(-20 1344 580)"/>
<ellipse cx="1269" cy="601" rx="2.4" ry="1.4" fill="#2ac8a0" transform="rotate(-20 1269 601)"/>
<ellipse cx="1282" cy="597" rx="2.5" ry="1.1" fill="#12a080" transform="rotate(-20 1282 597)"/>
<ellipse cx="1299" cy="591" rx="4.5" ry="1.0" fill="#2ac8a0" transform="rotate(-20 1299 591)"/>
<ellipse cx="1425" cy="561" rx="3.3" ry="1.3" fill="#20d0a0" transform="rotate(-20 1425 561)"/>
<ellipse cx="1284" cy="595" rx="5.4" ry="1.4" fill="#0e8878" transform="rotate(-20 1284 595)"/>
<ellipse cx="1249" cy="603" rx="4.3" ry="1.2" fill="#18b890" transform="rotate(-20 1249 603)"/>
<ellipse cx="1371" cy="572" rx="2.9" ry="1.3" fill="#2ac8a0" transform="rotate(-20 1371 572)"/>
<ellipse cx="1377" cy="571" rx="4.9" ry="1.2" fill="#12a080" transform="rotate(-20 1377 571)"/>
<ellipse cx="1240" cy="609" rx="4.8" ry="1.5" fill="#0e8878" transform="rotate(-20 1240 609)"/>
<ellipse cx="1270" cy="600" rx="3.2" ry="1.2" fill="#1a98a8" transform="rotate(-20 1270 600)"/>
<ellipse cx="1260" cy="603" rx="4.2" ry="1.1" fill="#2ac8a0" transform="rotate(-20 1260 603)"/>
<ellipse cx="1394" cy="569" rx="5.8" ry="1.7" fill="#18b890" transform="rotate(-20 1394 569)"/>
<ellipse cx="1294" cy="594" rx="4.4" ry="1.5" fill="#20d0a0" transform="rotate(-20 1294 594)"/>
<ellipse cx="1317" cy="590" rx="5.4" ry="1.5" fill="#20d0a0" transform="rotate(-20 1317 590)"/>
<ellipse cx="1244" cy="607" rx="4.2" ry="1.1" fill="#18b890" transform="rotate(-20 1244 607)"/>
<ellipse cx="1385" cy="573" rx="5.7" ry="1.1" fill="#1a98a8" transform="rotate(-20 1385 573)"/>
<ellipse cx="1214" cy="613" rx="2.6" ry="1.3" fill="#20d0a0" transform="rotate(-20 1214 613)"/>
<ellipse cx="1228" cy="610" rx="4.8" ry="1.5" fill="#18b890" transform="rotate(-20 1228 610)"/>
<ellipse cx="1383" cy="574" rx="5.2" ry="1.3" fill="#20d0a0" transform="rotate(-20 1383 574)"/>
<ellipse cx="1225" cy="611" rx="5.9" ry="1.3" fill="#2ac8a0" transform="rotate(-20 1225 611)"/>
<ellipse cx="1496" cy="544" rx="2.2" ry="1.7" fill="#0e8878" transform="rotate(-20 1496 544)"/>
<ellipse cx="1386" cy="568" rx="4.0" ry="1.5" fill="#20d0a0" transform="rotate(-20 1386 568)"/>
<ellipse cx="1353" cy="577" rx="3.7" ry="1.6" fill="#2ac8a0" transform="rotate(-20 1353 577)"/>
<ellipse cx="1403" cy="568" rx="4.8" ry="1.5" fill="#2ac8a0" transform="rotate(-20 1403 568)"/>
<ellipse cx="1478" cy="547" rx="5.1" ry="1.5" fill="#20d0a0" transform="rotate(-20 1478 547)"/>
<ellipse cx="1428" cy="558" rx="4.0" ry="1.4" fill="#2ac8a0" transform="rotate(-20 1428 558)"/>
<ellipse cx="1257" cy="606" rx="3.9" ry="1.4" fill="#2ac8a0" transform="rotate(-20 1257 606)"/>
<ellipse cx="1372" cy="577" rx="3.3" ry="1.5" fill="#12a080" transform="rotate(-20 1372 577)"/>
<ellipse cx="1230" cy="612" rx="4.6" ry="1.4" fill="#18b890" transform="rotate(-20 1230 612)"/>
<ellipse cx="1459" cy="549" rx="3.9" ry="1.5" fill="#2ac8a0" transform="rotate(-20 1459 549)"/>
<ellipse cx="1246" cy="604" rx="2.2" ry="1.6" fill="#0e8878" transform="rotate(-20 1246 604)"/>
<ellipse cx="1335" cy="582" rx="2.5" ry="1.0" fill="#0e8878" transform="rotate(-20 1335 582)"/>
<ellipse cx="1362" cy="578" rx="4.5" ry="1.6" fill="#2ac8a0" transform="rotate(-20 1362 578)"/>
<ellipse cx="1271" cy="598" rx="4.0" ry="1.6" fill="#1a98a8" transform="rotate(-20 1271 598)"/>
<ellipse cx="1300" cy="594" rx="4.3" ry="1.0" fill="#18b890" transform="rotate(-20 1300 594)"/>
<ellipse cx="1265" cy="602" rx="3.0" ry="1.7" fill="#12a080" transform="rotate(-20 1265 602)"/>
<ellipse cx="1445" cy="554" rx="4.7" ry="1.4" fill="#0e8878" transform="rotate(-20 1445 554)"/>
<ellipse cx="1274" cy="599" rx="2.9" ry="1.3" fill="#20d0a0" transform="rotate(-20 1274 599)"/>
<ellipse cx="1240" cy="618" rx="3.3" ry="1.6" fill="#20d0a0" transform="rotate(-20 1240 618)"/>
<ellipse cx="1431" cy="574" rx="2.4" ry="1.4" fill="#20d0a0" transform="rotate(-20 1431 574)"/>
<ellipse cx="1240" cy="621" rx="3.1" ry="1.1" fill="#18b890" transform="rotate(-20 1240 621)"/>
<ellipse cx="1235" cy="621" rx="2.6" ry="1.7" fill="#12a080" transform="rotate(-20 1235 621)"/>
<ellipse cx="1299" cy="608" rx="2.2" ry="1.7" fill="#0e8878" transform="rotate(-20 1299 608)"/>
<ellipse cx="1318" cy="598" rx="5.3" ry="1.4" fill="#0e8878" transform="rotate(-20 1318 598)"/>
<ellipse cx="1422" cy="575" rx="2.0" ry="1.2" fill="#0e8878" transform="rotate(-20 1422 575)"/>
<ellipse cx="1246" cy="620" rx="4.5" ry="1.3" fill="#1a98a8" transform="rotate(-20 1246 620)"/>
<ellipse cx="1460" cy="562" rx="3.7" ry="1.7" fill="#18b890" transform="rotate(-20 1460 562)"/>
<ellipse cx="1339" cy="594" rx="5.8" ry="1.4" fill="#20d0a0" transform="rotate(-20 1339 594)"/>
<ellipse cx="1359" cy="587" rx="6.0" ry="1.1" fill="#1a98a8" transform="rotate(-20 1359 587)"/>
<ellipse cx="1275" cy="614" rx="4.5" ry="1.4" fill="#2ac8a0" transform="rotate(-20 1275 614)"/>
<ellipse cx="1403" cy="578" rx="4.1" ry="1.2" fill="#2ac8a0" transform="rotate(-20 1403 578)"/>
<ellipse cx="1214" cy="625" rx="3.6" ry="1.0" fill="#2ac8a0" transform="rotate(-20 1214 625)"/>
<ellipse cx="1343" cy="594" rx="5.6" ry="1.7" fill="#20d0a0" transform="rotate(-20 1343 594)"/>
<ellipse cx="1267" cy="616" rx="3.9" ry="1.1" fill="#18b890" transform="rotate(-20 1267 616)"/>
<ellipse cx="1386" cy="585" rx="4.2" ry="1.7" fill="#0e8878" transform="rotate(-20 1386 585)"/>
<ellipse cx="1219" cy="629" rx="5.7" ry="1.5" fill="#18b890" transform="rotate(-20 1219 629)"/>
<ellipse cx="1274" cy="612" rx="5.5" ry="1.1" fill="#20d0a0" transform="rotate(-20 1274 612)"/>
<ellipse cx="1274" cy="609" rx="4.1" ry="1.1" fill="#0e8878" transform="rotate(-20 1274 609)"/>
<ellipse cx="1484" cy="560" rx="4.6" ry="1.4" fill="#12a080" transform="rotate(-20 1484 560)"/>
<ellipse cx="1336" cy="594" rx="3.5" ry="1.1" fill="#0e8878" transform="rotate(-20 1336 594)"/>
<ellipse cx="1293" cy="610" rx="3.3" ry="1.7" fill="#1a98a8" transform="rotate(-20 1293 610)"/>
<ellipse cx="1481" cy="560" rx="2.3" ry="1.2" fill="#2ac8a0" transform="rotate(-20 1481 560)"/>
<ellipse cx="1314" cy="600" rx="4.1" ry="1.6" fill="#20d0a0" transform="rotate(-20 1314 600)"/>
<ellipse cx="1307" cy="601" rx="2.9" ry="1.4" fill="#20d0a0" transform="rotate(-20 1307 601)"/>
<ellipse cx="1383" cy="583" rx="5.3" ry="1.2" fill="#12a080" transform="rotate(-20 1383 583)"/>
<ellipse cx="1427" cy="575" rx="2.1" ry="1.7" fill="#18b890" transform="rotate(-20 1427 575)"/>
<ellipse cx="1434" cy="573" rx="3.7" ry="1.4" fill="#0e8878" transform="rotate(-20 1434 573)"/>
<ellipse cx="1403" cy="576" rx="6.0" ry="1.3" fill="#0e8878" transform="rotate(-20 1403 576)"/>
<ellipse cx="1238" cy="618" rx="5.8" ry="1.7" fill="#20d0a0" transform="rotate(-20 1238 618)"/>
<ellipse cx="1251" cy="617" rx="5.4" ry="1.2" fill="#20d0a0" transform="rotate(-20 1251 617)"/>
<ellipse cx="1255" cy="619" rx="5.7" ry="1.0" fill="#0e8878" transform="rotate(-20 1255 619)"/>
<ellipse cx="1302" cy="602" rx="4.0" ry="1.7" fill="#18b890" transform="rotate(-20 1302 602)"/>
<ellipse cx="1294" cy="607" rx="4.0" ry="1.4" fill="#2ac8a0" transform="rotate(-20 1294 607)"/>
<ellipse cx="1254" cy="615" rx="3.6" ry="1.7" fill="#20d0a0" transform="rotate(-20 1254 615)"/>
<ellipse cx="1480" cy="559" rx="4.4" ry="1.6" fill="#2ac8a0" transform="rotate(-20 1480 559)"/>
<ellipse cx="1381" cy="582" rx="5.0" ry="1.4" fill="#2ac8a0" transform="rotate(-20 1381 582)"/>
<ellipse cx="1408" cy="576" rx="3.0" ry="1.0" fill="#18b890" transform="rotate(-20 1408 576)"/>
<ellipse cx="1460" cy="564" rx="5.8" ry="1.5" fill="#18b890" transform="rotate(-20 1460 564)"/>
<ellipse cx="1412" cy="574" rx="6.0" ry="1.1" fill="#1a98a8" transform="rotate(-20 1412 574)"/>
<ellipse cx="1495" cy="553" rx="4.8" ry="1.2" fill="#0e8878" transform="rotate(-20 1495 553)"/>
<ellipse cx="1414" cy="573" rx="5.3" ry="1.2" fill="#1a98a8" transform="rotate(-20 1414 573)"/>
<ellipse cx="1322" cy="599" rx="4.9" ry="1.2" fill="#18b890" transform="rotate(-20 1322 599)"/>
<ellipse cx="1494" cy="556" rx="3.9" ry="1.4" fill="#2ac8a0" transform="rotate(-20 1494 556)"/>
<ellipse cx="1275" cy="613" rx="5.2" ry="1.1" fill="#18b890" transform="rotate(-20 1275 613)"/>
<ellipse cx="1382" cy="587" rx="4.5" ry="1.6" fill="#12a080" transform="rotate(-20 1382 587)"/>
<ellipse cx="1351" cy="591" rx="3.9" ry="1.3" fill="#2ac8a0" transform="rotate(-20 1351 591)"/>
<ellipse cx="1375" cy="583" rx="5.8" ry="1.4" fill="#2ac8a0" transform="rotate(-20 1375 583)"/>
<ellipse cx="1391" cy="580" rx="5.8" ry="1.5" fill="#0e8878" transform="rotate(-20 1391 580)"/>
<ellipse cx="1244" cy="621" rx="3.4" ry="1.1" fill="#1a98a8" transform="rotate(-20 1244 621)"/>
<ellipse cx="1426" cy="574" rx="3.5" ry="1.1" fill="#18b890" transform="rotate(-20 1426 574)"/>
<ellipse cx="1269" cy="614" rx="4.8" ry="1.2" fill="#18b890" transform="rotate(-20 1269 614)"/>
<ellipse cx="1234" cy="622" rx="2.8" ry="1.5" fill="#2ac8a0" transform="rotate(-20 1234 622)"/>
<ellipse cx="1272" cy="614" rx="3.7" ry="1.4" fill="#20d0a0" transform="rotate(-20 1272 614)"/>
<ellipse cx="1237" cy="619" rx="3.9" ry="1.3" fill="#2ac8a0" transform="rotate(-20 1237 619)"/>
<ellipse cx="1383" cy="583" rx="4.6" ry="1.5" fill="#0e8878" transform="rotate(-20 1383 583)"/>
<ellipse cx="1391" cy="579" rx="2.1" ry="1.6" fill="#0e8878" transform="rotate(-20 1391 579)"/>
<ellipse cx="1255" cy="616" rx="4.7" ry="1.5" fill="#0e8878" transform="rotate(-20 1255 616)"/>
<ellipse cx="1329" cy="596" rx="5.3" ry="1.4" fill="#2ac8a0" transform="rotate(-20 1329 596)"/>
<ellipse cx="1489" cy="566" rx="4.9" ry="1.7" fill="#2ac8a0" transform="rotate(-20 1489 566)"/>
<ellipse cx="1458" cy="579" rx="2.8" ry="1.6" fill="#1a98a8" transform="rotate(-20 1458 579)"/>
<ellipse cx="1337" cy="606" rx="3.3" ry="1.7" fill="#0e8878" transform="rotate(-20 1337 606)"/>
<ellipse cx="1497" cy="565" rx="3.6" ry="1.1" fill="#2ac8a0" transform="rotate(-20 1497 565)"/>
<ellipse cx="1226" cy="638" rx="4.1" ry="1.1" fill="#0e8878" transform="rotate(-20 1226 638)"/>
<ellipse cx="1334" cy="611" rx="3.5" ry="1.4" fill="#12a080" transform="rotate(-20 1334 611)"/>
<ellipse cx="1495" cy="565" rx="5.6" ry="1.7" fill="#2ac8a0" transform="rotate(-20 1495 565)"/>
<ellipse cx="1297" cy="616" rx="3.7" ry="1.6" fill="#0e8878" transform="rotate(-20 1297 616)"/>
<ellipse cx="1270" cy="626" rx="5.8" ry="1.4" fill="#12a080" transform="rotate(-20 1270 626)"/>
<ellipse cx="1209" cy="641" rx="2.8" ry="1.6" fill="#2ac8a0" transform="rotate(-20 1209 641)"/>
<ellipse cx="1315" cy="612" rx="4.0" ry="1.1" fill="#1a98a8" transform="rotate(-20 1315 612)"/>
<ellipse cx="1228" cy="638" rx="2.7" ry="1.6" fill="#18b890" transform="rotate(-20 1228 638)"/>
<ellipse cx="1438" cy="582" rx="4.6" ry="1.4" fill="#18b890" transform="rotate(-20 1438 582)"/>
<ellipse cx="1448" cy="579" rx="5.6" ry="1.6" fill="#1a98a8" transform="rotate(-20 1448 579)"/>
<ellipse cx="1469" cy="574" rx="5.4" ry="1.5" fill="#0e8878" transform="rotate(-20 1469 574)"/>
<ellipse cx="1309" cy="613" rx="2.4" ry="1.1" fill="#20d0a0" transform="rotate(-20 1309 613)"/>
<ellipse cx="1285" cy="621" rx="5.7" ry="1.3" fill="#12a080" transform="rotate(-20 1285 621)"/>
<ellipse cx="1275" cy="622" rx="5.7" ry="1.7" fill="#18b890" transform="rotate(-20 1275 622)"/>
<ellipse cx="1420" cy="586" rx="3.9" ry="1.5" fill="#20d0a0" transform="rotate(-20 1420 586)"/>
<ellipse cx="1480" cy="571" rx="2.1" ry="1.0" fill="#2ac8a0" transform="rotate(-20 1480 571)"/>
<ellipse cx="1331" cy="612" rx="2.6" ry="1.7" fill="#20d0a0" transform="rotate(-20 1331 612)"/>
<ellipse cx="1256" cy="629" rx="4.8" ry="1.2" fill="#12a080" transform="rotate(-20 1256 629)"/>
<ellipse cx="1312" cy="617" rx="5.9" ry="1.5" fill="#12a080" transform="rotate(-20 1312 617)"/>
<ellipse cx="1430" cy="585" rx="4.0" ry="1.6" fill="#18b890" transform="rotate(-20 1430 585)"/>
<ellipse cx="1254" cy="631" rx="4.1" ry="1.2" fill="#20d0a0" transform="rotate(-20 1254 631)"/>
<ellipse cx="1441" cy="584" rx="5.6" ry="1.7" fill="#18b890" transform="rotate(-20 1441 584)"/>
<ellipse cx="1359" cy="601" rx="5.1" ry="1.2" fill="#0e8878" transform="rotate(-20 1359 601)"/>
<ellipse cx="1484" cy="572" rx="2.9" ry="1.7" fill="#0e8878" transform="rotate(-20 1484 572)"/>
<ellipse cx="1435" cy="581" rx="2.7" ry="1.1" fill="#2ac8a0" transform="rotate(-20 1435 581)"/>
<ellipse cx="1314" cy="616" rx="4.8" ry="1.3" fill="#18b890" transform="rotate(-20 1314 616)"/>
<ellipse cx="1218" cy="638" rx="2.9" ry="1.1" fill="#18b890" transform="rotate(-20 1218 638)"/>
<ellipse cx="1415" cy="589" rx="4.3" ry="1.2" fill="#1a98a8" transform="rotate(-20 1415 589)"/>
<ellipse cx="1408" cy="590" rx="6.0" ry="1.6" fill="#0e8878" transform="rotate(-20 1408 590)"/>
<ellipse cx="1413" cy="588" rx="5.1" ry="1.1" fill="#2ac8a0" transform="rotate(-20 1413 588)"/>
<ellipse cx="1296" cy="620" rx="4.0" ry="1.7" fill="#0e8878" transform="rotate(-20 1296 620)"/>
<ellipse cx="1499" cy="569" rx="2.2" ry="1.1" fill="#20d0a0" transform="rotate(-20 1499 569)"/>
<ellipse cx="1331" cy="609" rx="6.0" ry="1.1" fill="#20d0a0" transform="rotate(-20 1331 609)"/>
<ellipse cx="1434" cy="581" rx="5.9" ry="1.1" fill="#18b890" transform="rotate(-20 1434 581)"/>
<ellipse cx="1254" cy="630" rx="2.5" ry="1.6" fill="#2ac8a0" transform="rotate(-20 1254 630)"/>
<ellipse cx="1383" cy="594" rx="4.3" ry="1.6" fill="#2ac8a0" transform="rotate(-20 1383 594)"/>
<ellipse cx="1330" cy="609" rx="3.6" ry="1.7" fill="#0e8878" transform="rotate(-20 1330 609)"/>
<ellipse cx="1277" cy="626" rx="5.7" ry="1.1" fill="#1a98a8" transform="rotate(-20 1277 626)"/>
<ellipse cx="1314" cy="616" rx="4.0" ry="1.2" fill="#12a080" transform="rotate(-20 1314 616)"/>
<ellipse cx="1340" cy="607" rx="5.7" ry="1.5" fill="#20d0a0" transform="rotate(-20 1340 607)"/>
<ellipse cx="1410" cy="587" rx="3.3" ry="1.5" fill="#18b890" transform="rotate(-20 1410 587)"/>
<ellipse cx="1408" cy="590" rx="4.5" ry="1.6" fill="#1a98a8" transform="rotate(-20 1408 590)"/>
<ellipse cx="1318" cy="613" rx="4.2" ry="1.1" fill="#1a98a8" transform="rotate(-20 1318 613)"/>
<ellipse cx="1398" cy="592" rx="2.1" ry="1.4" fill="#18b890" transform="rotate(-20 1398 592)"/>
<ellipse cx="1394" cy="592" rx="3.0" ry="1.5" fill="#1a98a8" transform="rotate(-20 1394 592)"/>
<ellipse cx="1208" cy="639" rx="2.4" ry="1.6" fill="#20d0a0" transform="rotate(-20 1208 639)"/>
<ellipse cx="1464" cy="574" rx="4.2" ry="1.4" fill="#2ac8a0" transform="rotate(-20 1464 574)"/>
<ellipse cx="1281" cy="623" rx="2.7" ry="1.7" fill="#2ac8a0" transform="rotate(-20 1281 623)"/>
<ellipse cx="1406" cy="589" rx="4.0" ry="1.3" fill="#12a080" transform="rotate(-20 1406 589)"/>
<ellipse cx="1494" cy="567" rx="4.1" ry="1.6" fill="#12a080" transform="rotate(-20 1494 567)"/>
<ellipse cx="1423" cy="585" rx="2.8" ry="1.6" fill="#12a080" transform="rotate(-20 1423 585)"/>
<ellipse cx="1456" cy="580" rx="4.5" ry="1.7" fill="#1a98a8" transform="rotate(-20 1456 580)"/>
<ellipse cx="1469" cy="575" rx="2.5" ry="1.3" fill="#2ac8a0" transform="rotate(-20 1469 575)"/>
<ellipse cx="1454" cy="580" rx="4.9" ry="1.3" fill="#20d0a0" transform="rotate(-20 1454 580)"/>
<ellipse cx="1397" cy="590" rx="4.8" ry="1.7" fill="#2ac8a0" transform="rotate(-20 1397 590)"/>
<ellipse cx="1478" cy="570" rx="4.7" ry="1.3" fill="#0e8878" transform="rotate(-20 1478 570)"/>
<ellipse cx="1227" cy="647" rx="5.8" ry="1.5" fill="#12a080" transform="rotate(-20 1227 647)"/>
<ellipse cx="1231" cy="645" rx="3.0" ry="1.6" fill="#12a080" transform="rotate(-20 1231 645)"/>
<ellipse cx="1274" cy="638" rx="5.1" ry="1.5" fill="#0e8878" transform="rotate(-20 1274 638)"/>
<ellipse cx="1446" cy="590" rx="5.4" ry="1.2" fill="#12a080" transform="rotate(-20 1446 590)"/>
<ellipse cx="1343" cy="622" rx="5.2" ry="1.1" fill="#2ac8a0" transform="rotate(-20 1343 622)"/>
<ellipse cx="1454" cy="589" rx="5.7" ry="1.5" fill="#1a98a8" transform="rotate(-20 1454 589)"/>
<ellipse cx="1226" cy="650" rx="3.5" ry="1.3" fill="#1a98a8" transform="rotate(-20 1226 650)"/>
<ellipse cx="1369" cy="613" rx="5.3" ry="1.4" fill="#20d0a0" transform="rotate(-20 1369 613)"/>
<ellipse cx="1440" cy="593" rx="2.7" ry="1.6" fill="#1a98a8" transform="rotate(-20 1440 593)"/>
<ellipse cx="1457" cy="592" rx="2.8" ry="1.4" fill="#18b890" transform="rotate(-20 1457 592)"/>
<ellipse cx="1496" cy="578" rx="4.2" ry="1.4" fill="#20d0a0" transform="rotate(-20 1496 578)"/>
<ellipse cx="1247" cy="643" rx="4.9" ry="1.3" fill="#20d0a0" transform="rotate(-20 1247 643)"/>
<ellipse cx="1407" cy="603" rx="3.5" ry="1.5" fill="#0e8878" transform="rotate(-20 1407 603)"/>
<ellipse cx="1245" cy="645" rx="4.3" ry="1.7" fill="#12a080" transform="rotate(-20 1245 645)"/>
<ellipse cx="1209" cy="653" rx="2.6" ry="1.7" fill="#20d0a0" transform="rotate(-20 1209 653)"/>
<ellipse cx="1328" cy="621" rx="5.5" ry="1.6" fill="#12a080" transform="rotate(-20 1328 621)"/>
<ellipse cx="1372" cy="614" rx="6.0" ry="1.4" fill="#2ac8a0" transform="rotate(-20 1372 614)"/>
<ellipse cx="1322" cy="622" rx="2.6" ry="1.5" fill="#20d0a0" transform="rotate(-20 1322 622)"/>
<ellipse cx="1332" cy="623" rx="2.2" ry="1.1" fill="#1a98a8" transform="rotate(-20 1332 623)"/>
<ellipse cx="1305" cy="631" rx="3.7" ry="1.5" fill="#18b890" transform="rotate(-20 1305 631)"/>
<ellipse cx="1412" cy="602" rx="3.4" ry="1.1" fill="#20d0a0" transform="rotate(-20 1412 602)"/>
<ellipse cx="1320" cy="627" rx="2.7" ry="1.7" fill="#0e8878" transform="rotate(-20 1320 627)"/>
<ellipse cx="1229" cy="646" rx="4.3" ry="1.1" fill="#18b890" transform="rotate(-20 1229 646)"/>
<ellipse cx="1305" cy="630" rx="3.8" ry="1.5" fill="#1a98a8" transform="rotate(-20 1305 630)"/>
<ellipse cx="1380" cy="609" rx="5.6" ry="1.6" fill="#20d0a0" transform="rotate(-20 1380 609)"/>
<ellipse cx="1421" cy="596" rx="2.8" ry="1.6" fill="#1a98a8" transform="rotate(-20 1421 596)"/>
<ellipse cx="1308" cy="625" rx="2.8" ry="1.4" fill="#18b890" transform="rotate(-20 1308 625)"/>
<ellipse cx="1264" cy="637" rx="5.0" ry="1.6" fill="#20d0a0" transform="rotate(-20 1264 637)"/>
<ellipse cx="1456" cy="592" rx="5.8" ry="1.0" fill="#12a080" transform="rotate(-20 1456 592)"/>
<ellipse cx="1243" cy="647" rx="5.5" ry="1.7" fill="#12a080" transform="rotate(-20 1243 647)"/>
<ellipse cx="1374" cy="612" rx="4.8" ry="1.2" fill="#2ac8a0" transform="rotate(-20 1374 612)"/>
<ellipse cx="1373" cy="613" rx="4.0" ry="1.4" fill="#2ac8a0" transform="rotate(-20 1373 613)"/>
<ellipse cx="1242" cy="643" rx="5.4" ry="1.4" fill="#12a080" transform="rotate(-20 1242 643)"/>
<ellipse cx="1499" cy="580" rx="4.4" ry="1.6" fill="#1a98a8" transform="rotate(-20 1499 580)"/>
<ellipse cx="1353" cy="619" rx="4.2" ry="1.3" fill="#12a080" transform="rotate(-20 1353 619)"/>
<ellipse cx="1214" cy="653" rx="6.0" ry="1.5" fill="#0e8878" transform="rotate(-20 1214 653)"/>
<ellipse cx="1442" cy="590" rx="3.1" ry="1.2" fill="#20d0a0" transform="rotate(-20 1442 590)"/>
<ellipse cx="1472" cy="588" rx="5.1" ry="1.5" fill="#2ac8a0" transform="rotate(-20 1472 588)"/>
<ellipse cx="1274" cy="635" rx="5.6" ry="1.6" fill="#12a080" transform="rotate(-20 1274 635)"/>
<ellipse cx="1485" cy="580" rx="5.3" ry="1.6" fill="#0e8878" transform="rotate(-20 1485 580)"/>
<ellipse cx="1342" cy="618" rx="2.5" ry="1.1" fill="#2ac8a0" transform="rotate(-20 1342 618)"/>
<ellipse cx="1310" cy="628" rx="2.7" ry="1.5" fill="#2ac8a0" transform="rotate(-20 1310 628)"/>
<ellipse cx="1436" cy="595" rx="4.3" ry="1.0" fill="#20d0a0" transform="rotate(-20 1436 595)"/>
<ellipse cx="1278" cy="637" rx="5.1" ry="1.1" fill="#1a98a8" transform="rotate(-20 1278 637)"/>
<ellipse cx="1407" cy="603" rx="4.8" ry="1.7" fill="#2ac8a0" transform="rotate(-20 1407 603)"/>
<ellipse cx="1488" cy="580" rx="3.7" ry="1.6" fill="#0e8878" transform="rotate(-20 1488 580)"/>
<ellipse cx="1250" cy="645" rx="4.6" ry="1.3" fill="#2ac8a0" transform="rotate(-20 1250 645)"/>
<ellipse cx="1287" cy="635" rx="3.2" ry="1.3" fill="#18b890" transform="rotate(-20 1287 635)"/>
<ellipse cx="1222" cy="653" rx="5.8" ry="1.6" fill="#20d0a0" transform="rotate(-20 1222 653)"/>
<ellipse cx="1302" cy="627" rx="2.6" ry="1.7" fill="#0e8878" transform="rotate(-20 1302 627)"/>
<ellipse cx="1477" cy="582" rx="2.2" ry="1.1" fill="#1a98a8" transform="rotate(-20 1477 582)"/>
<ellipse cx="1257" cy="640" rx="2.5" ry="1.0" fill="#2ac8a0" transform="rotate(-20 1257 640)"/>
<ellipse cx="1221" cy="653" rx="3.7" ry="1.1" fill="#0e8878" transform="rotate(-20 1221 653)"/>
<ellipse cx="1389" cy="606" rx="4.5" ry="1.5" fill="#18b890" transform="rotate(-20 1389 606)"/>
<ellipse cx="1293" cy="633" rx="5.4" ry="1.1" fill="#0e8878" transform="rotate(-20 1293 633)"/>
<ellipse cx="1310" cy="628" rx="3.4" ry="1.4" fill="#20d0a0" transform="rotate(-20 1310 628)"/>
<ellipse cx="1251" cy="642" rx="2.8" ry="1.6" fill="#1a98a8" transform="rotate(-20 1251 642)"/>
<ellipse cx="1347" cy="617" rx="3.9" ry="1.5" fill="#20d0a0" transform="rotate(-20 1347 617)"/>
<ellipse cx="1408" cy="602" rx="5.2" ry="1.4" fill="#12a080" transform="rotate(-20 1408 602)"/>
<ellipse cx="1430" cy="598" rx="5.8" ry="1.6" fill="#12a080" transform="rotate(-20 1430 598)"/>
<ellipse cx="1348" cy="627" rx="3.4" ry="1.7" fill="#1a98a8" transform="rotate(-20 1348 627)"/>
<ellipse cx="1345" cy="632" rx="4.4" ry="1.7" fill="#0e8878" transform="rotate(-20 1345 632)"/>
<ellipse cx="1438" cy="608" rx="4.1" ry="1.4" fill="#1a98a8" transform="rotate(-20 1438 608)"/>
<ellipse cx="1413" cy="612" rx="4.6" ry="1.1" fill="#0e8878" transform="rotate(-20 1413 612)"/>
<ellipse cx="1399" cy="616" rx="2.2" ry="1.2" fill="#2ac8a0" transform="rotate(-20 1399 616)"/>
<ellipse cx="1431" cy="611" rx="5.4" ry="1.6" fill="#20d0a0" transform="rotate(-20 1431 611)"/>
<ellipse cx="1263" cy="650" rx="2.6" ry="1.6" fill="#12a080" transform="rotate(-20 1263 650)"/>
<ellipse cx="1300" cy="644" rx="3.9" ry="1.3" fill="#2ac8a0" transform="rotate(-20 1300 644)"/>
<ellipse cx="1274" cy="650" rx="4.8" ry="1.0" fill="#1a98a8" transform="rotate(-20 1274 650)"/>
<ellipse cx="1213" cy="666" rx="4.1" ry="1.5" fill="#2ac8a0" transform="rotate(-20 1213 666)"/>
<ellipse cx="1448" cy="606" rx="3.3" ry="1.0" fill="#0e8878" transform="rotate(-20 1448 606)"/>
<ellipse cx="1481" cy="594" rx="5.7" ry="1.1" fill="#2ac8a0" transform="rotate(-20 1481 594)"/>
<ellipse cx="1451" cy="605" rx="4.8" ry="1.2" fill="#2ac8a0" transform="rotate(-20 1451 605)"/>
<ellipse cx="1446" cy="607" rx="2.4" ry="1.4" fill="#12a080" transform="rotate(-20 1446 607)"/>
<ellipse cx="1362" cy="625" rx="5.3" ry="1.4" fill="#2ac8a0" transform="rotate(-20 1362 625)"/>
<ellipse cx="1220" cy="666" rx="5.2" ry="1.5" fill="#1a98a8" transform="rotate(-20 1220 666)"/>
<ellipse cx="1275" cy="651" rx="5.7" ry="1.0" fill="#18b890" transform="rotate(-20 1275 651)"/>
<ellipse cx="1254" cy="656" rx="3.6" ry="1.1" fill="#1a98a8" transform="rotate(-20 1254 656)"/>
<ellipse cx="1276" cy="650" rx="4.3" ry="1.7" fill="#12a080" transform="rotate(-20 1276 650)"/>
<ellipse cx="1275" cy="652" rx="4.2" ry="1.7" fill="#12a080" transform="rotate(-20 1275 652)"/>
<ellipse cx="1340" cy="634" rx="2.9" ry="1.7" fill="#2ac8a0" transform="rotate(-20 1340 634)"/>
<ellipse cx="1454" cy="605" rx="3.7" ry="1.4" fill="#18b890" transform="rotate(-20 1454 605)"/>
<ellipse cx="1418" cy="611" rx="2.8" ry="1.5" fill="#20d0a0" transform="rotate(-20 1418 611)"/>
<ellipse cx="1332" cy="634" rx="3.3" ry="1.6" fill="#2ac8a0" transform="rotate(-20 1332 634)"/>
<ellipse cx="1481" cy="596" rx="3.9" ry="1.7" fill="#12a080" transform="rotate(-20 1481 596)"/>
<ellipse cx="1238" cy="659" rx="4.4" ry="1.1" fill="#1a98a8" transform="rotate(-20 1238 659)"/>
<ellipse cx="1239" cy="656" rx="4.9" ry="1.3" fill="#18b890" transform="rotate(-20 1239 656)"/>
<ellipse cx="1421" cy="609" rx="4.3" ry="1.7" fill="#20d0a0" transform="rotate(-20 1421 609)"/>
<ellipse cx="1483" cy="597" rx="3.0" ry="1.5" fill="#0e8878" transform="rotate(-20 1483 597)"/>
<ellipse cx="1237" cy="657" rx="5.6" ry="1.2" fill="#1a98a8" transform="rotate(-20 1237 657)"/>
<ellipse cx="1342" cy="633" rx="2.1" ry="1.1" fill="#0e8878" transform="rotate(-20 1342 633)"/>
<ellipse cx="1233" cy="659" rx="4.8" ry="1.4" fill="#20d0a0" transform="rotate(-20 1233 659)"/>
<ellipse cx="1435" cy="609" rx="4.2" ry="1.7" fill="#12a080" transform="rotate(-20 1435 609)"/>
<ellipse cx="1319" cy="637" rx="2.7" ry="1.5" fill="#0e8878" transform="rotate(-20 1319 637)"/>
<ellipse cx="1461" cy="603" rx="2.3" ry="1.3" fill="#2ac8a0" transform="rotate(-20 1461 603)"/>
<ellipse cx="1216" cy="666" rx="3.4" ry="1.3" fill="#1a98a8" transform="rotate(-20 1216 666)"/>
<ellipse cx="1360" cy="624" rx="2.8" ry="1.3" fill="#12a080" transform="rotate(-20 1360 624)"/>
<ellipse cx="1475" cy="598" rx="5.9" ry="1.3" fill="#18b890" transform="rotate(-20 1475 598)"/>
<ellipse cx="1433" cy="611" rx="2.1" ry="1.3" fill="#18b890" transform="rotate(-20 1433 611)"/>
<ellipse cx="1474" cy="600" rx="2.5" ry="1.1" fill="#12a080" transform="rotate(-20 1474 600)"/>
<ellipse cx="1422" cy="611" rx="5.3" ry="1.0" fill="#0e8878" transform="rotate(-20 1422 611)"/>
<ellipse cx="1280" cy="650" rx="4.9" ry="1.4" fill="#1a98a8" transform="rotate(-20 1280 650)"/>
<ellipse cx="1437" cy="609" rx="5.5" ry="1.4" fill="#12a080" transform="rotate(-20 1437 609)"/>
<ellipse cx="1489" cy="596" rx="4.6" ry="1.1" fill="#20d0a0" transform="rotate(-20 1489 596)"/>
<ellipse cx="1463" cy="598" rx="4.8" ry="1.1" fill="#0e8878" transform="rotate(-20 1463 598)"/>
<ellipse cx="1282" cy="649" rx="3.5" ry="1.4" fill="#1a98a8" transform="rotate(-20 1282 649)"/>
<ellipse cx="1305" cy="642" rx="2.8" ry="1.4" fill="#12a080" transform="rotate(-20 1305 642)"/>
<ellipse cx="1468" cy="600" rx="4.2" ry="1.4" fill="#18b890" transform="rotate(-20 1468 600)"/>
<ellipse cx="1293" cy="645" rx="2.9" ry="1.1" fill="#18b890" transform="rotate(-20 1293 645)"/>
<ellipse cx="1297" cy="642" rx="3.6" ry="1.6" fill="#2ac8a0" transform="rotate(-20 1297 642)"/>
<ellipse cx="1226" cy="661" rx="5.8" ry="1.4" fill="#18b890" transform="rotate(-20 1226 661)"/>
<ellipse cx="1222" cy="664" rx="5.4" ry="1.7" fill="#1a98a8" transform="rotate(-20 1222 664)"/>
<ellipse cx="1396" cy="620" rx="3.2" ry="1.4" fill="#12a080" transform="rotate(-20 1396 620)"/>
<ellipse cx="1405" cy="617" rx="4.8" ry="1.2" fill="#1a98a8" transform="rotate(-20 1405 617)"/>
<ellipse cx="1287" cy="649" rx="3.9" ry="1.7" fill="#20d0a0" transform="rotate(-20 1287 649)"/>
<ellipse cx="1464" cy="599" rx="3.1" ry="1.4" fill="#12a080" transform="rotate(-20 1464 599)"/>
<ellipse cx="1329" cy="633" rx="2.9" ry="1.3" fill="#12a080" transform="rotate(-20 1329 633)"/>
<ellipse cx="1440" cy="605" rx="2.2" ry="1.0" fill="#2ac8a0" transform="rotate(-20 1440 605)"/>
<ellipse cx="1372" cy="626" rx="3.3" ry="1.3" fill="#2ac8a0" transform="rotate(-20 1372 626)"/>
<ellipse cx="1281" cy="648" rx="4.3" ry="1.0" fill="#1a98a8" transform="rotate(-20 1281 648)"/>
<ellipse cx="1465" cy="614" rx="2.5" ry="1.1" fill="#18b890" transform="rotate(-20 1465 614)"/>
<ellipse cx="1292" cy="657" rx="5.7" ry="1.3" fill="#0e8878" transform="rotate(-20 1292 657)"/>
<ellipse cx="1378" cy="637" rx="2.9" ry="1.1" fill="#12a080" transform="rotate(-20 1378 637)"/>
<ellipse cx="1463" cy="611" rx="4.2" ry="1.4" fill="#20d0a0" transform="rotate(-20 1463 611)"/>
<ellipse cx="1453" cy="613" rx="2.4" ry="1.6" fill="#2ac8a0" transform="rotate(-20 1453 613)"/>
<ellipse cx="1248" cy="671" rx="2.6" ry="1.1" fill="#18b890" transform="rotate(-20 1248 671)"/>
<ellipse cx="1243" cy="671" rx="4.3" ry="1.5" fill="#20d0a0" transform="rotate(-20 1243 671)"/>
<ellipse cx="1280" cy="662" rx="2.9" ry="1.0" fill="#18b890" transform="rotate(-20 1280 662)"/>
<ellipse cx="1499" cy="601" rx="4.1" ry="1.3" fill="#20d0a0" transform="rotate(-20 1499 601)"/>
<ellipse cx="1219" cy="677" rx="3.3" ry="1.1" fill="#0e8878" transform="rotate(-20 1219 677)"/>
<ellipse cx="1484" cy="608" rx="2.3" ry="1.4" fill="#12a080" transform="rotate(-20 1484 608)"/>
<ellipse cx="1370" cy="634" rx="5.7" ry="1.7" fill="#1a98a8" transform="rotate(-20 1370 634)"/>
<ellipse cx="1256" cy="665" rx="4.3" ry="1.6" fill="#1a98a8" transform="rotate(-20 1256 665)"/>
<ellipse cx="1414" cy="625" rx="3.6" ry="1.5" fill="#12a080" transform="rotate(-20 1414 625)"/>
<ellipse cx="1367" cy="636" rx="3.9" ry="1.6" fill="#0e8878" transform="rotate(-20 1367 636)"/>
<ellipse cx="1297" cy="657" rx="2.2" ry="1.7" fill="#0e8878" transform="rotate(-20 1297 657)"/>
<ellipse cx="1409" cy="627" rx="5.5" ry="1.6" fill="#20d0a0" transform="rotate(-20 1409 627)"/>
<ellipse cx="1493" cy="605" rx="4.5" ry="1.6" fill="#18b890" transform="rotate(-20 1493 605)"/>
<ellipse cx="1224" cy="674" rx="5.7" ry="1.2" fill="#18b890" transform="rotate(-20 1224 674)"/>
<ellipse cx="1336" cy="646" rx="2.4" ry="1.6" fill="#1a98a8" transform="rotate(-20 1336 646)"/>
<ellipse cx="1452" cy="614" rx="4.9" ry="1.7" fill="#1a98a8" transform="rotate(-20 1452 614)"/>
<ellipse cx="1359" cy="639" rx="5.9" ry="1.7" fill="#12a080" transform="rotate(-20 1359 639)"/>
<ellipse cx="1354" cy="643" rx="5.5" ry="1.4" fill="#12a080" transform="rotate(-20 1354 643)"/>
<ellipse cx="1401" cy="630" rx="4.6" ry="1.0" fill="#1a98a8" transform="rotate(-20 1401 630)"/>
<ellipse cx="1427" cy="625" rx="5.8" ry="1.6" fill="#1a98a8" transform="rotate(-20 1427 625)"/>
<ellipse cx="1300" cy="654" rx="5.0" ry="1.7" fill="#1a98a8" transform="rotate(-20 1300 654)"/>
<ellipse cx="1466" cy="610" rx="3.6" ry="1.5" fill="#1a98a8" transform="rotate(-20 1466 610)"/>
<ellipse cx="1482" cy="605" rx="2.5" ry="1.7" fill="#1a98a8" transform="rotate(-20 1482 605)"/>
<ellipse cx="1369" cy="639" rx="2.0" ry="1.0" fill="#18b890" transform="rotate(-20 1369 639)"/>
<ellipse cx="1308" cy="654" rx="4.6" ry="1.4" fill="#18b890" transform="rotate(-20 1308 654)"/>
<ellipse cx="1422" cy="621" rx="4.2" ry="1.5" fill="#18b890" transform="rotate(-20 1422 621)"/>
<ellipse cx="1482" cy="609" rx="3.5" ry="1.6" fill="#2ac8a0" transform="rotate(-20 1482 609)"/>
<ellipse cx="1455" cy="614" rx="2.4" ry="1.5" fill="#20d0a0" transform="rotate(-20 1455 614)"/>
<ellipse cx="1418" cy="625" rx="5.3" ry="1.7" fill="#0e8878" transform="rotate(-20 1418 625)"/>
<ellipse cx="1219" cy="678" rx="2.8" ry="1.4" fill="#20d0a0" transform="rotate(-20 1219 678)"/>
<ellipse cx="1379" cy="632" rx="2.1" ry="1.0" fill="#2ac8a0" transform="rotate(-20 1379 632)"/>
<ellipse cx="1492" cy="603" rx="2.9" ry="1.1" fill="#18b890" transform="rotate(-20 1492 603)"/>
<ellipse cx="1348" cy="641" rx="5.0" ry="1.1" fill="#1a98a8" transform="rotate(-20 1348 641)"/>
<ellipse cx="1394" cy="628" rx="5.7" ry="1.4" fill="#2ac8a0" transform="rotate(-20 1394 628)"/>
<ellipse cx="1334" cy="647" rx="2.7" ry="1.7" fill="#1a98a8" transform="rotate(-20 1334 647)"/>
<ellipse cx="1292" cy="658" rx="5.0" ry="1.0" fill="#2ac8a0" transform="rotate(-20 1292 658)"/>
<ellipse cx="1325" cy="651" rx="2.4" ry="1.0" fill="#2ac8a0" transform="rotate(-20 1325 651)"/>
<ellipse cx="1271" cy="660" rx="4.0" ry="1.3" fill="#1a98a8" transform="rotate(-20 1271 660)"/>
<ellipse cx="1307" cy="650" rx="5.2" ry="1.5" fill="#2ac8a0" transform="rotate(-20 1307 650)"/>
<ellipse cx="1425" cy="620" rx="5.7" ry="1.6" fill="#20d0a0" transform="rotate(-20 1425 620)"/>
<ellipse cx="1231" cy="670" rx="4.4" ry="1.4" fill="#0e8878" transform="rotate(-20 1231 670)"/>
<ellipse cx="1381" cy="637" rx="3.9" ry="1.7" fill="#0e8878" transform="rotate(-20 1381 637)"/>
<ellipse cx="1478" cy="609" rx="4.0" ry="1.0" fill="#20d0a0" transform="rotate(-20 1478 609)"/>
<ellipse cx="1231" cy="673" rx="4.4" ry="1.1" fill="#20d0a0" transform="rotate(-20 1231 673)"/>
<ellipse cx="1464" cy="614" rx="5.6" ry="1.4" fill="#2ac8a0" transform="rotate(-20 1464 614)"/>
<ellipse cx="1474" cy="612" rx="5.2" ry="1.7" fill="#18b890" transform="rotate(-20 1474 612)"/>
<ellipse cx="1385" cy="634" rx="5.2" ry="1.1" fill="#20d0a0" transform="rotate(-20 1385 634)"/>
<ellipse cx="1445" cy="616" rx="3.9" ry="1.6" fill="#1a98a8" transform="rotate(-20 1445 616)"/>
<ellipse cx="1414" cy="623" rx="5.6" ry="1.7" fill="#1a98a8" transform="rotate(-20 1414 623)"/>
<ellipse cx="1306" cy="656" rx="5.9" ry="1.1" fill="#18b890" transform="rotate(-20 1306 656)"/>
<ellipse cx="1293" cy="658" rx="3.1" ry="1.4" fill="#18b890" transform="rotate(-20 1293 658)"/>
<ellipse cx="1400" cy="629" rx="2.6" ry="1.4" fill="#0e8878" transform="rotate(-20 1400 629)"/>
<ellipse cx="1415" cy="627" rx="3.3" ry="1.4" fill="#1a98a8" transform="rotate(-20 1415 627)"/>
<ellipse cx="1415" cy="624" rx="2.9" ry="1.3" fill="#12a080" transform="rotate(-20 1415 624)"/>
<ellipse cx="1221" cy="675" rx="2.6" ry="1.6" fill="#18b890" transform="rotate(-20 1221 675)"/>
<ellipse cx="1449" cy="628" rx="3.4" ry="1.4" fill="#20d0a0" transform="rotate(-20 1449 628)"/>
<ellipse cx="1461" cy="627" rx="4.5" ry="1.4" fill="#1a98a8" transform="rotate(-20 1461 627)"/>
<ellipse cx="1486" cy="622" rx="2.5" ry="1.1" fill="#12a080" transform="rotate(-20 1486 622)"/>
<ellipse cx="1338" cy="660" rx="3.5" ry="1.5" fill="#2ac8a0" transform="rotate(-20 1338 660)"/>
<ellipse cx="1450" cy="627" rx="4.4" ry="1.4" fill="#1a98a8" transform="rotate(-20 1450 627)"/>
<ellipse cx="1349" cy="654" rx="2.2" ry="1.7" fill="#18b890" transform="rotate(-20 1349 654)"/>
<ellipse cx="1318" cy="664" rx="3.8" ry="1.4" fill="#20d0a0" transform="rotate(-20 1318 664)"/>
<ellipse cx="1437" cy="633" rx="4.4" ry="1.6" fill="#20d0a0" transform="rotate(-20 1437 633)"/>
<ellipse cx="1460" cy="626" rx="4.6" ry="1.5" fill="#1a98a8" transform="rotate(-20 1460 626)"/>
<ellipse cx="1486" cy="619" rx="2.2" ry="1.6" fill="#20d0a0" transform="rotate(-20 1486 619)"/>
<ellipse cx="1293" cy="670" rx="5.2" ry="1.4" fill="#2ac8a0" transform="rotate(-20 1293 670)"/>
<ellipse cx="1261" cy="677" rx="4.3" ry="1.4" fill="#2ac8a0" transform="rotate(-20 1261 677)"/>
<ellipse cx="1328" cy="663" rx="4.9" ry="1.2" fill="#1a98a8" transform="rotate(-20 1328 663)"/>
<ellipse cx="1407" cy="641" rx="3.2" ry="1.1" fill="#20d0a0" transform="rotate(-20 1407 641)"/>
<ellipse cx="1458" cy="628" rx="2.1" ry="1.3" fill="#12a080" transform="rotate(-20 1458 628)"/>
<ellipse cx="1388" cy="644" rx="2.2" ry="1.1" fill="#18b890" transform="rotate(-20 1388 644)"/>
<ellipse cx="1343" cy="657" rx="5.9" ry="1.6" fill="#1a98a8" transform="rotate(-20 1343 657)"/>
<ellipse cx="1330" cy="660" rx="3.0" ry="1.7" fill="#12a080" transform="rotate(-20 1330 660)"/>
<ellipse cx="1318" cy="662" rx="3.9" ry="1.3" fill="#2ac8a0" transform="rotate(-20 1318 662)"/>
<ellipse cx="1424" cy="636" rx="4.5" ry="1.6" fill="#1a98a8" transform="rotate(-20 1424 636)"/>
<ellipse cx="1494" cy="620" rx="2.6" ry="1.4" fill="#2ac8a0" transform="rotate(-20 1494 620)"/>
<ellipse cx="1453" cy="628" rx="5.6" ry="1.0" fill="#0e8878" transform="rotate(-20 1453 628)"/>
<ellipse cx="1293" cy="671" rx="5.5" ry="1.7" fill="#20d0a0" transform="rotate(-20 1293 671)"/>
<ellipse cx="1300" cy="667" rx="3.0" ry="1.6" fill="#0e8878" transform="rotate(-20 1300 667)"/>
<ellipse cx="1332" cy="657" rx="2.8" ry="1.2" fill="#12a080" transform="rotate(-20 1332 657)"/>
<ellipse cx="1335" cy="657" rx="4.5" ry="1.3" fill="#18b890" transform="rotate(-20 1335 657)"/>
<ellipse cx="1387" cy="645" rx="5.8" ry="1.6" fill="#1a98a8" transform="rotate(-20 1387 645)"/>
<ellipse cx="1423" cy="638" rx="3.3" ry="1.5" fill="#20d0a0" transform="rotate(-20 1423 638)"/>
<ellipse cx="1324" cy="663" rx="5.5" ry="1.1" fill="#1a98a8" transform="rotate(-20 1324 663)"/>
<ellipse cx="1305" cy="668" rx="4.3" ry="1.2" fill="#12a080" transform="rotate(-20 1305 668)"/>
<ellipse cx="1317" cy="664" rx="3.5" ry="1.7" fill="#2ac8a0" transform="rotate(-20 1317 664)"/>
<ellipse cx="1348" cy="655" rx="2.7" ry="1.7" fill="#1a98a8" transform="rotate(-20 1348 655)"/>
<ellipse cx="1495" cy="619" rx="4.2" ry="1.4" fill="#1a98a8" transform="rotate(-20 1495 619)"/>
<ellipse cx="1258" cy="678" rx="5.0" ry="1.6" fill="#1a98a8" transform="rotate(-20 1258 678)"/>
<ellipse cx="1373" cy="650" rx="2.7" ry="1.3" fill="#2ac8a0" transform="rotate(-20 1373 650)"/>
<ellipse cx="1280" cy="675" rx="5.0" ry="1.4" fill="#1a98a8" transform="rotate(-20 1280 675)"/>
<ellipse cx="1477" cy="621" rx="2.5" ry="1.4" fill="#20d0a0" transform="rotate(-20 1477 621)"/>
<ellipse cx="1322" cy="662" rx="3.8" ry="1.7" fill="#2ac8a0" transform="rotate(-20 1322 662)"/>
<ellipse cx="1364" cy="648" rx="4.9" ry="1.6" fill="#20d0a0" transform="rotate(-20 1364 648)"/>
<ellipse cx="1474" cy="623" rx="2.6" ry="1.7" fill="#12a080" transform="rotate(-20 1474 623)"/>
<ellipse cx="1442" cy="628" rx="5.0" ry="1.1" fill="#12a080" transform="rotate(-20 1442 628)"/>
<ellipse cx="1468" cy="626" rx="4.7" ry="1.5" fill="#12a080" transform="rotate(-20 1468 626)"/>
<ellipse cx="1310" cy="665" rx="5.0" ry="1.7" fill="#20d0a0" transform="rotate(-20 1310 665)"/>
<ellipse cx="1484" cy="622" rx="2.1" ry="1.5" fill="#18b890" transform="rotate(-20 1484 622)"/>
<ellipse cx="1396" cy="642" rx="2.5" ry="1.3" fill="#2ac8a0" transform="rotate(-20 1396 642)"/>
<ellipse cx="1308" cy="665" rx="3.6" ry="1.7" fill="#2ac8a0" transform="rotate(-20 1308 665)"/>
<ellipse cx="1382" cy="646" rx="5.9" ry="1.3" fill="#1a98a8" transform="rotate(-20 1382 646)"/>
<ellipse cx="1426" cy="633" rx="3.0" ry="1.5" fill="#12a080" transform="rotate(-20 1426 633)"/>
<ellipse cx="1278" cy="671" rx="6.0" ry="1.1" fill="#18b890" transform="rotate(-20 1278 671)"/>
<ellipse cx="1371" cy="648" rx="5.5" ry="1.6" fill="#0e8878" transform="rotate(-20 1371 648)"/>
<ellipse cx="1294" cy="432" rx="13.8" ry="0.9" fill="#1448b8" transform="rotate(-10 1294 432)"/>
<ellipse cx="1214" cy="443" rx="9.7" ry="1.0" fill="#1448b8" transform="rotate(-10 1214 443)"/>
<ellipse cx="1425" cy="417" rx="7.2" ry="1.3" fill="#2068e0" transform="rotate(-10 1425 417)"/>
<ellipse cx="1486" cy="410" rx="7.1" ry="0.9" fill="#2068e0" transform="rotate(-10 1486 410)"/>
<ellipse cx="1250" cy="440" rx="11.1" ry="1.1" fill="#06183a" transform="rotate(-10 1250 440)"/>
<ellipse cx="1229" cy="441" rx="9.1" ry="1.4" fill="#1a58d0" transform="rotate(-10 1229 441)"/>
<ellipse cx="1447" cy="413" rx="12.4" ry="1.0" fill="#06183a" transform="rotate(-10 1447 413)"/>
<ellipse cx="1448" cy="414" rx="5.7" ry="1.5" fill="#3070e0" transform="rotate(-10 1448 414)"/>
<ellipse cx="1440" cy="414" rx="12.0" ry="0.9" fill="#1a58d0" transform="rotate(-10 1440 414)"/>
<ellipse cx="1221" cy="443" rx="8.1" ry="1.4" fill="#1a58d0" transform="rotate(-10 1221 443)"/>
<ellipse cx="1354" cy="425" rx="11.0" ry="1.0" fill="#2068e0" transform="rotate(-10 1354 425)"/>
<ellipse cx="1383" cy="424" rx="11.0" ry="1.2" fill="#1448b8" transform="rotate(-10 1383 424)"/>
<ellipse cx="1422" cy="417" rx="10.5" ry="1.2" fill="#06183a" transform="rotate(-10 1422 417)"/>
<ellipse cx="1414" cy="417" rx="6.5" ry="0.8" fill="#06183a" transform="rotate(-10 1414 417)"/>
<ellipse cx="1256" cy="437" rx="10.2" ry="1.2" fill="#1a58d0" transform="rotate(-10 1256 437)"/>
<ellipse cx="1471" cy="411" rx="6.1" ry="0.9" fill="#3070e0" transform="rotate(-10 1471 411)"/>
<ellipse cx="1473" cy="412" rx="12.1" ry="1.2" fill="#2068e0" transform="rotate(-10 1473 412)"/>
<ellipse cx="1248" cy="438" rx="8.9" ry="1.4" fill="#06183a" transform="rotate(-10 1248 438)"/>
<ellipse cx="1320" cy="428" rx="9.9" ry="0.9" fill="#1448b8" transform="rotate(-10 1320 428)"/>
<ellipse cx="1229" cy="440" rx="11.8" ry="1.1" fill="#1a58d0" transform="rotate(-10 1229 440)"/>
<ellipse cx="1480" cy="408" rx="10.3" ry="1.2" fill="#2068e0" transform="rotate(-10 1480 408)"/>
<ellipse cx="1274" cy="436" rx="8.7" ry="1.4" fill="#06183a" transform="rotate(-10 1274 436)"/>
<ellipse cx="1491" cy="409" rx="8.9" ry="1.5" fill="#2068e0" transform="rotate(-10 1491 409)"/>
<ellipse cx="1335" cy="428" rx="9.7" ry="0.8" fill="#3070e0" transform="rotate(-10 1335 428)"/>
<ellipse cx="1411" cy="417" rx="5.9" ry="0.8" fill="#3070e0" transform="rotate(-10 1411 417)"/>
<ellipse cx="1388" cy="422" rx="12.9" ry="1.3" fill="#04102a" transform="rotate(-10 1388 422)"/>
<ellipse cx="1371" cy="424" rx="11.2" ry="0.8" fill="#2068e0" transform="rotate(-10 1371 424)"/>
<ellipse cx="1213" cy="445" rx="8.8" ry="0.9" fill="#1448b8" transform="rotate(-10 1213 445)"/>
<ellipse cx="1405" cy="420" rx="6.6" ry="0.8" fill="#2068e0" transform="rotate(-10 1405 420)"/>
<ellipse cx="1364" cy="426" rx="13.9" ry="1.1" fill="#2068e0" transform="rotate(-10 1364 426)"/>
<ellipse cx="1351" cy="426" rx="7.0" ry="0.9" fill="#1a58d0" transform="rotate(-10 1351 426)"/>
<ellipse cx="1411" cy="420" rx="12.3" ry="1.0" fill="#2068e0" transform="rotate(-10 1411 420)"/>
<ellipse cx="1426" cy="417" rx="12.0" ry="0.9" fill="#06183a" transform="rotate(-10 1426 417)"/>
<ellipse cx="1304" cy="433" rx="12.8" ry="1.3" fill="#1a58d0" transform="rotate(-10 1304 433)"/>
<ellipse cx="1411" cy="417" rx="10.1" ry="0.9" fill="#04102a" transform="rotate(-10 1411 417)"/>
<ellipse cx="1240" cy="442" rx="10.4" ry="1.0" fill="#1a58d0" transform="rotate(-10 1240 442)"/>
<ellipse cx="1273" cy="437" rx="5.6" ry="1.2" fill="#3070e0" transform="rotate(-10 1273 437)"/>
<ellipse cx="1426" cy="416" rx="10.8" ry="0.8" fill="#06183a" transform="rotate(-10 1426 416)"/>
<ellipse cx="1392" cy="423" rx="11.3" ry="1.1" fill="#1a58d0" transform="rotate(-10 1392 423)"/>
<ellipse cx="1275" cy="434" rx="8.5" ry="0.8" fill="#06183a" transform="rotate(-10 1275 434)"/>
<ellipse cx="1374" cy="435" rx="11.4" ry="1.4" fill="#1a58d0" transform="rotate(-10 1374 435)"/>
<ellipse cx="1411" cy="432" rx="12.2" ry="1.3" fill="#1a58d0" transform="rotate(-10 1411 432)"/>
<ellipse cx="1438" cy="427" rx="8.4" ry="0.8" fill="#06183a" transform="rotate(-10 1438 427)"/>
<ellipse cx="1359" cy="436" rx="5.7" ry="1.0" fill="#04102a" transform="rotate(-10 1359 436)"/>
<ellipse cx="1410" cy="429" rx="7.1" ry="1.1" fill="#3070e0" transform="rotate(-10 1410 429)"/>
<ellipse cx="1356" cy="438" rx="5.3" ry="1.3" fill="#04102a" transform="rotate(-10 1356 438)"/>
<ellipse cx="1307" cy="444" rx="5.9" ry="1.5" fill="#04102a" transform="rotate(-10 1307 444)"/>
<ellipse cx="1438" cy="429" rx="13.1" ry="1.0" fill="#04102a" transform="rotate(-10 1438 429)"/>
<ellipse cx="1472" cy="421" rx="13.2" ry="1.1" fill="#06183a" transform="rotate(-10 1472 421)"/>
<ellipse cx="1455" cy="423" rx="9.5" ry="1.5" fill="#1a58d0" transform="rotate(-10 1455 423)"/>
<ellipse cx="1255" cy="451" rx="12.2" ry="0.9" fill="#3070e0" transform="rotate(-10 1255 451)"/>
<ellipse cx="1489" cy="420" rx="9.3" ry="1.4" fill="#1a58d0" transform="rotate(-10 1489 420)"/>
<ellipse cx="1471" cy="422" rx="7.6" ry="1.1" fill="#04102a" transform="rotate(-10 1471 422)"/>
<ellipse cx="1452" cy="427" rx="10.4" ry="0.9" fill="#1a58d0" transform="rotate(-10 1452 427)"/>
<ellipse cx="1270" cy="450" rx="10.0" ry="1.4" fill="#06183a" transform="rotate(-10 1270 450)"/>
<ellipse cx="1360" cy="437" rx="10.9" ry="1.1" fill="#04102a" transform="rotate(-10 1360 437)"/>
<ellipse cx="1498" cy="418" rx="12.7" ry="1.3" fill="#2068e0" transform="rotate(-10 1498 418)"/>
<ellipse cx="1218" cy="455" rx="5.0" ry="1.0" fill="#1448b8" transform="rotate(-10 1218 455)"/>
<ellipse cx="1452" cy="427" rx="13.9" ry="0.8" fill="#1448b8" transform="rotate(-10 1452 427)"/>
<ellipse cx="1230" cy="452" rx="12.6" ry="0.9" fill="#3070e0" transform="rotate(-10 1230 452)"/>
<ellipse cx="1332" cy="441" rx="11.3" ry="1.1" fill="#3070e0" transform="rotate(-10 1332 441)"/>
<ellipse cx="1393" cy="435" rx="11.2" ry="1.1" fill="#1a58d0" transform="rotate(-10 1393 435)"/>
<ellipse cx="1257" cy="451" rx="13.1" ry="1.5" fill="#1a58d0" transform="rotate(-10 1257 451)"/>
<ellipse cx="1285" cy="446" rx="6.4" ry="0.8" fill="#04102a" transform="rotate(-10 1285 446)"/>
<ellipse cx="1311" cy="442" rx="12.0" ry="1.0" fill="#3070e0" transform="rotate(-10 1311 442)"/>
<ellipse cx="1425" cy="428" rx="12.0" ry="1.3" fill="#1a58d0" transform="rotate(-10 1425 428)"/>
<ellipse cx="1301" cy="443" rx="10.2" ry="1.4" fill="#06183a" transform="rotate(-10 1301 443)"/>
<ellipse cx="1484" cy="421" rx="9.8" ry="0.8" fill="#1a58d0" transform="rotate(-10 1484 421)"/>
<ellipse cx="1238" cy="451" rx="9.1" ry="1.2" fill="#1a58d0" transform="rotate(-10 1238 451)"/>
<ellipse cx="1381" cy="433" rx="13.5" ry="0.8" fill="#1448b8" transform="rotate(-10 1381 433)"/>
<ellipse cx="1462" cy="424" rx="8.0" ry="1.2" fill="#06183a" transform="rotate(-10 1462 424)"/>
<ellipse cx="1340" cy="440" rx="7.4" ry="1.1" fill="#1a58d0" transform="rotate(-10 1340 440)"/>
<ellipse cx="1267" cy="448" rx="9.2" ry="1.1" fill="#1448b8" transform="rotate(-10 1267 448)"/>
<ellipse cx="1385" cy="433" rx="7.9" ry="0.9" fill="#1a58d0" transform="rotate(-10 1385 433)"/>
<ellipse cx="1298" cy="443" rx="10.8" ry="1.5" fill="#3070e0" transform="rotate(-10 1298 443)"/>
<ellipse cx="1281" cy="445" rx="10.8" ry="1.5" fill="#04102a" transform="rotate(-10 1281 445)"/>
<ellipse cx="1385" cy="433" rx="8.2" ry="1.1" fill="#1448b8" transform="rotate(-10 1385 433)"/>
<ellipse cx="1431" cy="429" rx="11.2" ry="1.3" fill="#1448b8" transform="rotate(-10 1431 429)"/>
<ellipse cx="1424" cy="431" rx="5.0" ry="1.0" fill="#04102a" transform="rotate(-10 1424 431)"/>
<ellipse cx="1307" cy="443" rx="13.2" ry="0.9" fill="#1448b8" transform="rotate(-10 1307 443)"/>
<ellipse cx="1317" cy="453" rx="5.6" ry="1.3" fill="#3070e0" transform="rotate(-10 1317 453)"/>
<ellipse cx="1431" cy="439" rx="9.3" ry="0.8" fill="#1a58d0" transform="rotate(-10 1431 439)"/>
<ellipse cx="1358" cy="448" rx="13.7" ry="0.9" fill="#2068e0" transform="rotate(-10 1358 448)"/>
<ellipse cx="1252" cy="463" rx="13.4" ry="1.5" fill="#04102a" transform="rotate(-10 1252 463)"/>
<ellipse cx="1410" cy="444" rx="7.7" ry="1.2" fill="#1448b8" transform="rotate(-10 1410 444)"/>
<ellipse cx="1295" cy="456" rx="11.7" ry="1.4" fill="#04102a" transform="rotate(-10 1295 456)"/>
<ellipse cx="1342" cy="452" rx="12.6" ry="0.9" fill="#1448b8" transform="rotate(-10 1342 452)"/>
<ellipse cx="1298" cy="457" rx="11.3" ry="1.3" fill="#1448b8" transform="rotate(-10 1298 457)"/>
<ellipse cx="1297" cy="456" rx="10.7" ry="0.8" fill="#06183a" transform="rotate(-10 1297 456)"/>
<ellipse cx="1391" cy="445" rx="8.9" ry="1.1" fill="#3070e0" transform="rotate(-10 1391 445)"/>
<ellipse cx="1284" cy="459" rx="11.5" ry="0.9" fill="#1448b8" transform="rotate(-10 1284 459)"/>
<ellipse cx="1299" cy="455" rx="5.5" ry="1.1" fill="#2068e0" transform="rotate(-10 1299 455)"/>
<ellipse cx="1320" cy="453" rx="13.0" ry="1.1" fill="#1448b8" transform="rotate(-10 1320 453)"/>
<ellipse cx="1331" cy="451" rx="12.2" ry="0.8" fill="#3070e0" transform="rotate(-10 1331 451)"/>
<ellipse cx="1205" cy="467" rx="6.4" ry="1.5" fill="#1448b8" transform="rotate(-10 1205 467)"/>
<ellipse cx="1487" cy="435" rx="11.7" ry="0.9" fill="#1448b8" transform="rotate(-10 1487 435)"/>
<ellipse cx="1452" cy="438" rx="11.6" ry="1.3" fill="#2068e0" transform="rotate(-10 1452 438)"/>
<ellipse cx="1250" cy="462" rx="13.9" ry="1.0" fill="#06183a" transform="rotate(-10 1250 462)"/>
<ellipse cx="1357" cy="449" rx="7.6" ry="1.3" fill="#06183a" transform="rotate(-10 1357 449)"/>
<ellipse cx="1473" cy="436" rx="8.2" ry="1.3" fill="#2068e0" transform="rotate(-10 1473 436)"/>
<ellipse cx="1337" cy="453" rx="9.5" ry="0.9" fill="#1a58d0" transform="rotate(-10 1337 453)"/>
<ellipse cx="1409" cy="444" rx="13.1" ry="1.3" fill="#1a58d0" transform="rotate(-10 1409 444)"/>
<ellipse cx="1415" cy="440" rx="6.8" ry="1.4" fill="#1a58d0" transform="rotate(-10 1415 440)"/>
<ellipse cx="1359" cy="450" rx="9.2" ry="1.2" fill="#04102a" transform="rotate(-10 1359 450)"/>
<ellipse cx="1416" cy="441" rx="8.1" ry="1.3" fill="#06183a" transform="rotate(-10 1416 441)"/>
<ellipse cx="1367" cy="447" rx="12.5" ry="0.9" fill="#2068e0" transform="rotate(-10 1367 447)"/>
<ellipse cx="1490" cy="434" rx="8.9" ry="0.9" fill="#06183a" transform="rotate(-10 1490 434)"/>
<ellipse cx="1442" cy="440" rx="13.0" ry="1.3" fill="#06183a" transform="rotate(-10 1442 440)"/>
<ellipse cx="1232" cy="463" rx="7.8" ry="1.2" fill="#3070e0" transform="rotate(-10 1232 463)"/>
<ellipse cx="1315" cy="456" rx="9.5" ry="1.5" fill="#1448b8" transform="rotate(-10 1315 456)"/>
<ellipse cx="1302" cy="454" rx="13.4" ry="1.3" fill="#06183a" transform="rotate(-10 1302 454)"/>
<ellipse cx="1351" cy="451" rx="6.5" ry="1.4" fill="#1a58d0" transform="rotate(-10 1351 451)"/>
<ellipse cx="1422" cy="441" rx="6.0" ry="0.9" fill="#2068e0" transform="rotate(-10 1422 441)"/>
<ellipse cx="1498" cy="430" rx="8.8" ry="1.3" fill="#3070e0" transform="rotate(-10 1498 430)"/>
<ellipse cx="1364" cy="450" rx="8.8" ry="1.3" fill="#1a58d0" transform="rotate(-10 1364 450)"/>
<ellipse cx="1373" cy="446" rx="10.0" ry="1.2" fill="#1448b8" transform="rotate(-10 1373 446)"/>
<ellipse cx="1213" cy="467" rx="7.1" ry="1.1" fill="#1a58d0" transform="rotate(-10 1213 467)"/>
<ellipse cx="1327" cy="454" rx="5.1" ry="0.9" fill="#3070e0" transform="rotate(-10 1327 454)"/>
<ellipse cx="1231" cy="466" rx="10.3" ry="0.8" fill="#06183a" transform="rotate(-10 1231 466)"/>
<ellipse cx="1424" cy="440" rx="6.1" ry="1.3" fill="#1448b8" transform="rotate(-10 1424 440)"/>
<ellipse cx="1246" cy="475" rx="6.1" ry="1.3" fill="#3070e0" transform="rotate(-10 1246 475)"/>
<ellipse cx="1480" cy="447" rx="10.9" ry="1.5" fill="#3070e0" transform="rotate(-10 1480 447)"/>
<ellipse cx="1437" cy="453" rx="9.5" ry="1.4" fill="#1448b8" transform="rotate(-10 1437 453)"/>
<ellipse cx="1341" cy="463" rx="11.7" ry="0.8" fill="#3070e0" transform="rotate(-10 1341 463)"/>
<ellipse cx="1406" cy="456" rx="6.0" ry="1.3" fill="#1a58d0" transform="rotate(-10 1406 456)"/>
<ellipse cx="1310" cy="465" rx="5.5" ry="0.9" fill="#1448b8" transform="rotate(-10 1310 465)"/>
<ellipse cx="1300" cy="469" rx="12.3" ry="1.3" fill="#04102a" transform="rotate(-10 1300 469)"/>
<ellipse cx="1289" cy="470" rx="13.3" ry="1.1" fill="#1a58d0" transform="rotate(-10 1289 470)"/>
<ellipse cx="1402" cy="456" rx="6.0" ry="1.0" fill="#2068e0" transform="rotate(-10 1402 456)"/>
<ellipse cx="1292" cy="468" rx="12.3" ry="1.4" fill="#06183a" transform="rotate(-10 1292 468)"/>
<ellipse cx="1245" cy="476" rx="12.1" ry="0.8" fill="#3070e0" transform="rotate(-10 1245 476)"/>
<ellipse cx="1279" cy="470" rx="11.9" ry="1.4" fill="#06183a" transform="rotate(-10 1279 470)"/>
<ellipse cx="1260" cy="474" rx="11.3" ry="1.3" fill="#04102a" transform="rotate(-10 1260 474)"/>
<ellipse cx="1339" cy="464" rx="13.1" ry="1.2" fill="#06183a" transform="rotate(-10 1339 464)"/>
<ellipse cx="1405" cy="456" rx="12.1" ry="1.0" fill="#06183a" transform="rotate(-10 1405 456)"/>
<ellipse cx="1425" cy="453" rx="11.7" ry="1.1" fill="#1448b8" transform="rotate(-10 1425 453)"/>
<ellipse cx="1399" cy="456" rx="9.4" ry="1.3" fill="#06183a" transform="rotate(-10 1399 456)"/>
<ellipse cx="1485" cy="446" rx="13.2" ry="1.1" fill="#1a58d0" transform="rotate(-10 1485 446)"/>
<ellipse cx="1382" cy="458" rx="5.0" ry="0.8" fill="#06183a" transform="rotate(-10 1382 458)"/>
<ellipse cx="1496" cy="445" rx="10.4" ry="0.9" fill="#06183a" transform="rotate(-10 1496 445)"/>
<ellipse cx="1254" cy="474" rx="7.2" ry="1.1" fill="#1a58d0" transform="rotate(-10 1254 474)"/>
<ellipse cx="1379" cy="460" rx="12.3" ry="0.8" fill="#1a58d0" transform="rotate(-10 1379 460)"/>
<ellipse cx="1350" cy="463" rx="6.6" ry="1.4" fill="#3070e0" transform="rotate(-10 1350 463)"/>
<ellipse cx="1280" cy="471" rx="12.2" ry="1.3" fill="#1a58d0" transform="rotate(-10 1280 471)"/>
<ellipse cx="1424" cy="455" rx="7.7" ry="0.8" fill="#06183a" transform="rotate(-10 1424 455)"/>
<ellipse cx="1470" cy="447" rx="12.9" ry="1.0" fill="#06183a" transform="rotate(-10 1470 447)"/>
<ellipse cx="1275" cy="470" rx="13.1" ry="1.3" fill="#1448b8" transform="rotate(-10 1275 470)"/>
<ellipse cx="1467" cy="449" rx="5.1" ry="1.3" fill="#06183a" transform="rotate(-10 1467 449)"/>
<ellipse cx="1420" cy="455" rx="7.7" ry="0.8" fill="#2068e0" transform="rotate(-10 1420 455)"/>
<ellipse cx="1325" cy="464" rx="11.5" ry="1.3" fill="#1448b8" transform="rotate(-10 1325 464)"/>
<ellipse cx="1437" cy="451" rx="6.8" ry="1.4" fill="#2068e0" transform="rotate(-10 1437 451)"/>
<ellipse cx="1444" cy="452" rx="12.3" ry="1.1" fill="#04102a" transform="rotate(-10 1444 452)"/>
<ellipse cx="1357" cy="460" rx="9.2" ry="1.1" fill="#3070e0" transform="rotate(-10 1357 460)"/>
<ellipse cx="1342" cy="463" rx="6.4" ry="1.2" fill="#1448b8" transform="rotate(-10 1342 463)"/>
<ellipse cx="1279" cy="471" rx="5.4" ry="1.1" fill="#1a58d0" transform="rotate(-10 1279 471)"/>
<ellipse cx="1243" cy="474" rx="6.0" ry="1.0" fill="#2068e0" transform="rotate(-10 1243 474)"/>
<ellipse cx="1254" cy="475" rx="8.5" ry="1.2" fill="#3070e0" transform="rotate(-10 1254 475)"/>
<ellipse cx="1382" cy="458" rx="12.5" ry="1.3" fill="#1a58d0" transform="rotate(-10 1382 458)"/>
<ellipse cx="1226" cy="478" rx="9.3" ry="0.9" fill="#1448b8" transform="rotate(-10 1226 478)"/>
<ellipse cx="1452" cy="448" rx="13.5" ry="1.2" fill="#3070e0" transform="rotate(-10 1452 448)"/>
<ellipse cx="1497" cy="457" rx="9.6" ry="1.0" fill="#3070e0" transform="rotate(-10 1497 457)"/>
<ellipse cx="1248" cy="485" rx="7.9" ry="0.8" fill="#1a58d0" transform="rotate(-10 1248 485)"/>
<ellipse cx="1269" cy="486" rx="13.8" ry="0.8" fill="#2068e0" transform="rotate(-10 1269 486)"/>
<ellipse cx="1441" cy="462" rx="10.1" ry="1.4" fill="#3070e0" transform="rotate(-10 1441 462)"/>
<ellipse cx="1497" cy="458" rx="5.6" ry="1.3" fill="#04102a" transform="rotate(-10 1497 458)"/>
<ellipse cx="1211" cy="492" rx="12.7" ry="0.9" fill="#2068e0" transform="rotate(-10 1211 492)"/>
<ellipse cx="1254" cy="484" rx="5.4" ry="1.1" fill="#3070e0" transform="rotate(-10 1254 484)"/>
<ellipse cx="1229" cy="491" rx="10.4" ry="1.1" fill="#1448b8" transform="rotate(-10 1229 491)"/>
<ellipse cx="1364" cy="473" rx="11.2" ry="1.2" fill="#2068e0" transform="rotate(-10 1364 473)"/>
<ellipse cx="1478" cy="460" rx="5.3" ry="0.8" fill="#1448b8" transform="rotate(-10 1478 460)"/>
<ellipse cx="1355" cy="474" rx="7.8" ry="0.9" fill="#06183a" transform="rotate(-10 1355 474)"/>
<ellipse cx="1288" cy="483" rx="12.1" ry="1.0" fill="#1448b8" transform="rotate(-10 1288 483)"/>
<ellipse cx="1332" cy="477" rx="12.1" ry="0.8" fill="#06183a" transform="rotate(-10 1332 477)"/>
<ellipse cx="1491" cy="457" rx="13.8" ry="0.8" fill="#06183a" transform="rotate(-10 1491 457)"/>
<ellipse cx="1210" cy="493" rx="7.6" ry="1.4" fill="#2068e0" transform="rotate(-10 1210 493)"/>
<ellipse cx="1385" cy="472" rx="5.7" ry="1.4" fill="#06183a" transform="rotate(-10 1385 472)"/>
<ellipse cx="1355" cy="472" rx="6.8" ry="0.8" fill="#1a58d0" transform="rotate(-10 1355 472)"/>
<ellipse cx="1306" cy="478" rx="6.4" ry="0.8" fill="#06183a" transform="rotate(-10 1306 478)"/>
<ellipse cx="1406" cy="466" rx="10.8" ry="0.9" fill="#2068e0" transform="rotate(-10 1406 466)"/>
<ellipse cx="1298" cy="480" rx="6.1" ry="1.2" fill="#06183a" transform="rotate(-10 1298 480)"/>
<ellipse cx="1231" cy="488" rx="11.0" ry="0.9" fill="#2068e0" transform="rotate(-10 1231 488)"/>
<ellipse cx="1238" cy="488" rx="13.2" ry="1.0" fill="#04102a" transform="rotate(-10 1238 488)"/>
<ellipse cx="1293" cy="483" rx="13.0" ry="1.0" fill="#3070e0" transform="rotate(-10 1293 483)"/>
<ellipse cx="1230" cy="489" rx="9.7" ry="1.2" fill="#06183a" transform="rotate(-10 1230 489)"/>
<ellipse cx="1470" cy="460" rx="5.4" ry="1.4" fill="#06183a" transform="rotate(-10 1470 460)"/>
<ellipse cx="1347" cy="476" rx="5.0" ry="1.4" fill="#1a58d0" transform="rotate(-10 1347 476)"/>
<ellipse cx="1381" cy="469" rx="12.5" ry="1.1" fill="#2068e0" transform="rotate(-10 1381 469)"/>
<ellipse cx="1488" cy="456" rx="12.2" ry="1.4" fill="#04102a" transform="rotate(-10 1488 456)"/>
<ellipse cx="1437" cy="462" rx="7.1" ry="0.9" fill="#3070e0" transform="rotate(-10 1437 462)"/>
<ellipse cx="1368" cy="471" rx="13.4" ry="0.9" fill="#3070e0" transform="rotate(-10 1368 471)"/>
<ellipse cx="1479" cy="459" rx="5.5" ry="1.2" fill="#1448b8" transform="rotate(-10 1479 459)"/>
<ellipse cx="1265" cy="487" rx="6.5" ry="1.1" fill="#04102a" transform="rotate(-10 1265 487)"/>
<ellipse cx="1243" cy="488" rx="7.0" ry="1.4" fill="#3070e0" transform="rotate(-10 1243 488)"/>
<ellipse cx="1288" cy="482" rx="9.1" ry="1.0" fill="#2068e0" transform="rotate(-10 1288 482)"/>
<ellipse cx="1363" cy="473" rx="13.3" ry="1.4" fill="#04102a" transform="rotate(-10 1363 473)"/>
<ellipse cx="1498" cy="455" rx="11.8" ry="1.1" fill="#04102a" transform="rotate(-10 1498 455)"/>
<ellipse cx="1226" cy="491" rx="7.8" ry="1.4" fill="#1448b8" transform="rotate(-10 1226 491)"/>
<ellipse cx="1476" cy="459" rx="7.5" ry="1.4" fill="#06183a" transform="rotate(-10 1476 459)"/>
<ellipse cx="1265" cy="486" rx="10.0" ry="1.1" fill="#06183a" transform="rotate(-10 1265 486)"/>
<ellipse cx="1461" cy="461" rx="11.8" ry="1.3" fill="#2068e0" transform="rotate(-10 1461 461)"/>
<ellipse cx="1475" cy="472" rx="13.9" ry="0.9" fill="#2068e0" transform="rotate(-10 1475 472)"/>
<ellipse cx="1296" cy="495" rx="14.0" ry="1.3" fill="#2068e0" transform="rotate(-10 1296 495)"/>
<ellipse cx="1490" cy="467" rx="6.2" ry="0.8" fill="#2068e0" transform="rotate(-10 1490 467)"/>
<ellipse cx="1372" cy="485" rx="11.2" ry="1.4" fill="#2068e0" transform="rotate(-10 1372 485)"/>
<ellipse cx="1361" cy="485" rx="8.4" ry="1.4" fill="#04102a" transform="rotate(-10 1361 485)"/>
<ellipse cx="1277" cy="493" rx="11.3" ry="0.8" fill="#3070e0" transform="rotate(-10 1277 493)"/>
<ellipse cx="1406" cy="479" rx="11.0" ry="1.2" fill="#04102a" transform="rotate(-10 1406 479)"/>
<ellipse cx="1265" cy="498" rx="13.3" ry="1.1" fill="#3070e0" transform="rotate(-10 1265 498)"/>
<ellipse cx="1291" cy="494" rx="9.5" ry="1.3" fill="#3070e0" transform="rotate(-10 1291 494)"/>
<ellipse cx="1436" cy="474" rx="6.3" ry="1.0" fill="#1448b8" transform="rotate(-10 1436 474)"/>
<ellipse cx="1363" cy="484" rx="8.9" ry="1.3" fill="#3070e0" transform="rotate(-10 1363 484)"/>
<ellipse cx="1381" cy="480" rx="9.9" ry="1.5" fill="#1a58d0" transform="rotate(-10 1381 480)"/>
<ellipse cx="1366" cy="483" rx="6.8" ry="1.0" fill="#06183a" transform="rotate(-10 1366 483)"/>
<ellipse cx="1471" cy="471" rx="8.2" ry="1.0" fill="#06183a" transform="rotate(-10 1471 471)"/>
<ellipse cx="1209" cy="504" rx="12.0" ry="0.8" fill="#04102a" transform="rotate(-10 1209 504)"/>
<ellipse cx="1372" cy="483" rx="13.6" ry="0.9" fill="#1448b8" transform="rotate(-10 1372 483)"/>
<ellipse cx="1270" cy="494" rx="13.7" ry="1.1" fill="#1448b8" transform="rotate(-10 1270 494)"/>
<ellipse cx="1387" cy="480" rx="9.1" ry="1.3" fill="#04102a" transform="rotate(-10 1387 480)"/>
<ellipse cx="1362" cy="485" rx="6.6" ry="0.9" fill="#04102a" transform="rotate(-10 1362 485)"/>
<ellipse cx="1497" cy="467" rx="5.8" ry="1.4" fill="#04102a" transform="rotate(-10 1497 467)"/>
<ellipse cx="1324" cy="491" rx="10.3" ry="1.4" fill="#1a58d0" transform="rotate(-10 1324 491)"/>
<ellipse cx="1221" cy="500" rx="13.3" ry="1.0" fill="#1448b8" transform="rotate(-10 1221 500)"/>
<ellipse cx="1433" cy="474" rx="6.7" ry="1.3" fill="#3070e0" transform="rotate(-10 1433 474)"/>
<ellipse cx="1424" cy="478" rx="6.8" ry="1.5" fill="#2068e0" transform="rotate(-10 1424 478)"/>
<ellipse cx="1309" cy="492" rx="7.1" ry="1.3" fill="#04102a" transform="rotate(-10 1309 492)"/>
<ellipse cx="1390" cy="480" rx="7.6" ry="1.2" fill="#04102a" transform="rotate(-10 1390 480)"/>
<ellipse cx="1495" cy="466" rx="8.3" ry="1.1" fill="#1a58d0" transform="rotate(-10 1495 466)"/>
<ellipse cx="1431" cy="476" rx="10.7" ry="1.2" fill="#1a58d0" transform="rotate(-10 1431 476)"/>
<ellipse cx="1418" cy="478" rx="9.9" ry="0.9" fill="#1448b8" transform="rotate(-10 1418 478)"/>
<ellipse cx="1226" cy="501" rx="10.7" ry="0.9" fill="#1a58d0" transform="rotate(-10 1226 501)"/>
<ellipse cx="1386" cy="481" rx="10.3" ry="1.4" fill="#2068e0" transform="rotate(-10 1386 481)"/>
<ellipse cx="1255" cy="499" rx="6.8" ry="1.4" fill="#3070e0" transform="rotate(-10 1255 499)"/>
<ellipse cx="1386" cy="482" rx="6.6" ry="1.1" fill="#3070e0" transform="rotate(-10 1386 482)"/>
<ellipse cx="1466" cy="470" rx="12.7" ry="0.8" fill="#1448b8" transform="rotate(-10 1466 470)"/>
<ellipse cx="1243" cy="500" rx="9.0" ry="1.3" fill="#3070e0" transform="rotate(-10 1243 500)"/>
<ellipse cx="1246" cy="499" rx="5.9" ry="1.1" fill="#04102a" transform="rotate(-10 1246 499)"/>
<ellipse cx="1403" cy="480" rx="12.4" ry="1.0" fill="#1448b8" transform="rotate(-10 1403 480)"/>
<ellipse cx="1378" cy="484" rx="11.8" ry="1.2" fill="#3070e0" transform="rotate(-10 1378 484)"/>
<ellipse cx="1235" cy="513" rx="9.3" ry="1.1" fill="#1448b8" transform="rotate(-10 1235 513)"/>
<ellipse cx="1388" cy="493" rx="8.5" ry="0.9" fill="#06183a" transform="rotate(-10 1388 493)"/>
<ellipse cx="1248" cy="511" rx="9.5" ry="1.1" fill="#1448b8" transform="rotate(-10 1248 511)"/>
<ellipse cx="1286" cy="506" rx="13.7" ry="1.3" fill="#1448b8" transform="rotate(-10 1286 506)"/>
<ellipse cx="1354" cy="499" rx="8.2" ry="1.2" fill="#1a58d0" transform="rotate(-10 1354 499)"/>
<ellipse cx="1353" cy="498" rx="9.1" ry="1.2" fill="#2068e0" transform="rotate(-10 1353 498)"/>
<ellipse cx="1232" cy="514" rx="11.4" ry="1.2" fill="#04102a" transform="rotate(-10 1232 514)"/>
<ellipse cx="1293" cy="507" rx="10.6" ry="1.0" fill="#1a58d0" transform="rotate(-10 1293 507)"/>
<ellipse cx="1375" cy="493" rx="5.7" ry="0.9" fill="#04102a" transform="rotate(-10 1375 493)"/>
<ellipse cx="1384" cy="495" rx="10.1" ry="1.3" fill="#1448b8" transform="rotate(-10 1384 495)"/>
<ellipse cx="1275" cy="507" rx="5.5" ry="1.3" fill="#06183a" transform="rotate(-10 1275 507)"/>
<ellipse cx="1349" cy="499" rx="10.8" ry="1.1" fill="#06183a" transform="rotate(-10 1349 499)"/>
<ellipse cx="1226" cy="516" rx="13.8" ry="0.8" fill="#04102a" transform="rotate(-10 1226 516)"/>
<ellipse cx="1303" cy="505" rx="6.5" ry="0.8" fill="#1448b8" transform="rotate(-10 1303 505)"/>
<ellipse cx="1233" cy="512" rx="12.1" ry="1.3" fill="#1a58d0" transform="rotate(-10 1233 512)"/>
<ellipse cx="1393" cy="493" rx="7.0" ry="1.0" fill="#06183a" transform="rotate(-10 1393 493)"/>
<ellipse cx="1339" cy="501" rx="10.8" ry="0.9" fill="#2068e0" transform="rotate(-10 1339 501)"/>
<ellipse cx="1403" cy="490" rx="14.0" ry="0.8" fill="#1448b8" transform="rotate(-10 1403 490)"/>
<ellipse cx="1397" cy="493" rx="12.5" ry="1.1" fill="#3070e0" transform="rotate(-10 1397 493)"/>
<ellipse cx="1368" cy="495" rx="11.9" ry="1.2" fill="#3070e0" transform="rotate(-10 1368 495)"/>
<ellipse cx="1219" cy="515" rx="13.6" ry="0.8" fill="#1448b8" transform="rotate(-10 1219 515)"/>
<ellipse cx="1331" cy="502" rx="8.5" ry="1.1" fill="#3070e0" transform="rotate(-10 1331 502)"/>
<ellipse cx="1261" cy="511" rx="11.0" ry="1.5" fill="#06183a" transform="rotate(-10 1261 511)"/>
<ellipse cx="1244" cy="511" rx="10.4" ry="0.9" fill="#06183a" transform="rotate(-10 1244 511)"/>
<ellipse cx="1278" cy="508" rx="12.9" ry="1.3" fill="#2068e0" transform="rotate(-10 1278 508)"/>
<ellipse cx="1273" cy="507" rx="13.9" ry="0.9" fill="#1448b8" transform="rotate(-10 1273 507)"/>
<ellipse cx="1256" cy="520" rx="12.0" ry="1.2" fill="#1a58d0" transform="rotate(-10 1256 520)"/>
<ellipse cx="1256" cy="521" rx="7.5" ry="1.4" fill="#3070e0" transform="rotate(-10 1256 521)"/>
<ellipse cx="1326" cy="512" rx="13.0" ry="1.3" fill="#3070e0" transform="rotate(-10 1326 512)"/>
<ellipse cx="1286" cy="520" rx="10.0" ry="0.8" fill="#1448b8" transform="rotate(-10 1286 520)"/>
<ellipse cx="1271" cy="520" rx="8.4" ry="1.0" fill="#3070e0" transform="rotate(-10 1271 520)"/>
<ellipse cx="1215" cy="529" rx="7.0" ry="1.1" fill="#2068e0" transform="rotate(-10 1215 529)"/>
<ellipse cx="1255" cy="521" rx="11.5" ry="1.0" fill="#2068e0" transform="rotate(-10 1255 521)"/>
<ellipse cx="1253" cy="522" rx="8.0" ry="1.0" fill="#3070e0" transform="rotate(-10 1253 522)"/>
<ellipse cx="1327" cy="512" rx="11.7" ry="1.1" fill="#1448b8" transform="rotate(-10 1327 512)"/>
<ellipse cx="1308" cy="515" rx="6.0" ry="1.2" fill="#1448b8" transform="rotate(-10 1308 515)"/>
<ellipse cx="1240" cy="525" rx="12.1" ry="0.9" fill="#2068e0" transform="rotate(-10 1240 525)"/>
<ellipse cx="1273" cy="519" rx="13.9" ry="1.5" fill="#1448b8" transform="rotate(-10 1273 519)"/>
<ellipse cx="1211" cy="527" rx="12.0" ry="1.0" fill="#06183a" transform="rotate(-10 1211 527)"/>
<ellipse cx="1311" cy="513" rx="13.1" ry="1.4" fill="#1a58d0" transform="rotate(-10 1311 513)"/>
<ellipse cx="1224" cy="525" rx="13.7" ry="1.3" fill="#1448b8" transform="rotate(-10 1224 525)"/>
<ellipse cx="1322" cy="512" rx="12.4" ry="1.0" fill="#1448b8" transform="rotate(-10 1322 512)"/>
<ellipse cx="1222" cy="527" rx="13.4" ry="1.0" fill="#2068e0" transform="rotate(-10 1222 527)"/>
<ellipse cx="1263" cy="522" rx="8.6" ry="1.0" fill="#3070e0" transform="rotate(-10 1263 522)"/>
<ellipse cx="1264" cy="519" rx="13.4" ry="1.4" fill="#2068e0" transform="rotate(-10 1264 519)"/>
<ellipse cx="1285" cy="519" rx="13.4" ry="0.8" fill="#1a58d0" transform="rotate(-10 1285 519)"/>
<ellipse cx="1322" cy="512" rx="7.9" ry="1.5" fill="#1a58d0" transform="rotate(-10 1322 512)"/>
<ellipse cx="1310" cy="515" rx="8.1" ry="0.8" fill="#1448b8" transform="rotate(-10 1310 515)"/>
<ellipse cx="1219" cy="526" rx="11.6" ry="1.5" fill="#1a58d0" transform="rotate(-10 1219 526)"/>
<ellipse cx="1241" cy="524" rx="7.3" ry="1.1" fill="#2068e0" transform="rotate(-10 1241 524)"/>
<ellipse cx="1312" cy="516" rx="9.8" ry="1.1" fill="#1448b8" transform="rotate(-10 1312 516)"/>
<ellipse cx="1217" cy="538" rx="8.0" ry="1.4" fill="#2068e0" transform="rotate(-10 1217 538)"/>
<ellipse cx="1228" cy="537" rx="7.6" ry="1.5" fill="#1a58d0" transform="rotate(-10 1228 537)"/>
<ellipse cx="1428" cy="701" rx="7.1" ry="2.2" fill="#1a88d8" transform="rotate(-8 1428 701)"/>
<ellipse cx="1320" cy="679" rx="4.1" ry="2.0" fill="#1050b0" transform="rotate(-8 1320 679)"/>
<ellipse cx="1240" cy="687" rx="7.3" ry="1.9" fill="#1050b0" transform="rotate(-8 1240 687)"/>
<ellipse cx="1352" cy="700" rx="6.0" ry="2.5" fill="#1050b0" transform="rotate(-8 1352 700)"/>
<ellipse cx="1342" cy="698" rx="5.0" ry="2.4" fill="#1a88d8" transform="rotate(-8 1342 698)"/>
<ellipse cx="1356" cy="670" rx="4.9" ry="2.3" fill="#1a68d0" transform="rotate(-8 1356 670)"/>
<ellipse cx="1383" cy="674" rx="5.2" ry="2.8" fill="#1a88d8" transform="rotate(-8 1383 674)"/>
<ellipse cx="1256" cy="717" rx="7.9" ry="2.8" fill="#1a88d8" transform="rotate(-8 1256 717)"/>
<ellipse cx="1438" cy="698" rx="6.4" ry="1.6" fill="#1a68d0" transform="rotate(-8 1438 698)"/>
<ellipse cx="1342" cy="707" rx="6.3" ry="2.7" fill="#1a68d0" transform="rotate(-8 1342 707)"/>
<ellipse cx="1380" cy="681" rx="9.5" ry="1.6" fill="#1a78e0" transform="rotate(-8 1380 681)"/>
<ellipse cx="1475" cy="680" rx="4.1" ry="2.4" fill="#1a78e0" transform="rotate(-8 1475 680)"/>
<ellipse cx="1350" cy="702" rx="5.2" ry="1.8" fill="#1a68d0" transform="rotate(-8 1350 702)"/>
<ellipse cx="1385" cy="685" rx="7.3" ry="1.9" fill="#1a68d0" transform="rotate(-8 1385 685)"/>
<ellipse cx="1328" cy="705" rx="9.5" ry="2.0" fill="#1a68d0" transform="rotate(-8 1328 705)"/>
<ellipse cx="1348" cy="706" rx="6.1" ry="1.8" fill="#1050b0" transform="rotate(-8 1348 706)"/>
<ellipse cx="1218" cy="716" rx="8.0" ry="2.7" fill="#1a88d8" transform="rotate(-8 1218 716)"/>
<ellipse cx="1415" cy="687" rx="5.3" ry="2.5" fill="#1050b0" transform="rotate(-8 1415 687)"/>
<ellipse cx="1407" cy="674" rx="6.2" ry="2.8" fill="#1a68d0" transform="rotate(-8 1407 674)"/>
<ellipse cx="1266" cy="707" rx="4.6" ry="2.6" fill="#1a68d0" transform="rotate(-8 1266 707)"/>
<ellipse cx="1298" cy="712" rx="8.3" ry="2.8" fill="#1a68d0" transform="rotate(-8 1298 712)"/>
<ellipse cx="1238" cy="721" rx="5.1" ry="2.0" fill="#1a68d0" transform="rotate(-8 1238 721)"/>
<ellipse cx="1242" cy="706" rx="9.1" ry="2.7" fill="#1a88d8" transform="rotate(-8 1242 706)"/>
<ellipse cx="1411" cy="697" rx="7.1" ry="2.2" fill="#1a78e0" transform="rotate(-8 1411 697)"/>
<ellipse cx="1425" cy="664" rx="4.1" ry="1.7" fill="#1a78e0" transform="rotate(-8 1425 664)"/>
<ellipse cx="1440" cy="701" rx="4.8" ry="1.6" fill="#1a78e0" transform="rotate(-8 1440 701)"/>
<ellipse cx="1397" cy="690" rx="6.9" ry="1.7" fill="#1050b0" transform="rotate(-8 1397 690)"/>
<ellipse cx="1205" cy="696" rx="4.9" ry="2.2" fill="#1a68d0" transform="rotate(-8 1205 696)"/>
<ellipse cx="1399" cy="690" rx="8.0" ry="1.7" fill="#1a78e0" transform="rotate(-8 1399 690)"/>
<ellipse cx="1262" cy="694" rx="7.9" ry="2.5" fill="#1a88d8" transform="rotate(-8 1262 694)"/>
<ellipse cx="1233" cy="685" rx="8.5" ry="1.6" fill="#1a68d0" transform="rotate(-8 1233 685)"/>
<ellipse cx="1209" cy="707" rx="4.6" ry="2.7" fill="#1a68d0" transform="rotate(-8 1209 707)"/>
<ellipse cx="1426" cy="700" rx="5.6" ry="2.2" fill="#1a88d8" transform="rotate(-8 1426 700)"/>
<ellipse cx="1298" cy="702" rx="4.2" ry="1.9" fill="#1a78e0" transform="rotate(-8 1298 702)"/>
<ellipse cx="1238" cy="710" rx="5.5" ry="2.1" fill="#1a88d8" transform="rotate(-8 1238 710)"/>
<ellipse cx="1239" cy="724" rx="5.3" ry="2.2" fill="#1050b0" transform="rotate(-8 1239 724)"/>
<ellipse cx="1462" cy="670" rx="9.8" ry="2.4" fill="#1050b0" transform="rotate(-8 1462 670)"/>
<ellipse cx="1296" cy="702" rx="8.3" ry="3.0" fill="#1a68d0" transform="rotate(-8 1296 702)"/>
<ellipse cx="1449" cy="695" rx="9.5" ry="3.0" fill="#1a68d0" transform="rotate(-8 1449 695)"/>
<ellipse cx="1236" cy="708" rx="7.8" ry="2.7" fill="#1a68d0" transform="rotate(-8 1236 708)"/>
<ellipse cx="1243" cy="690" rx="4.0" ry="3.0" fill="#1a88d8" transform="rotate(-8 1243 690)"/>
<ellipse cx="1420" cy="700" rx="5.7" ry="2.3" fill="#1a78e0" transform="rotate(-8 1420 700)"/>
<ellipse cx="1306" cy="706" rx="6.4" ry="2.4" fill="#1a78e0" transform="rotate(-8 1306 706)"/>
<ellipse cx="1317" cy="715" rx="8.9" ry="1.9" fill="#1a88d8" transform="rotate(-8 1317 715)"/>
<ellipse cx="1383" cy="674" rx="5.0" ry="2.1" fill="#1a88d8" transform="rotate(-8 1383 674)"/>
<ellipse cx="1352" cy="688" rx="4.2" ry="2.0" fill="#1050b0" transform="rotate(-8 1352 688)"/>
<ellipse cx="1395" cy="667" rx="9.3" ry="2.8" fill="#1a68d0" transform="rotate(-8 1395 667)"/>
<ellipse cx="1302" cy="685" rx="6.2" ry="2.1" fill="#1a68d0" transform="rotate(-8 1302 685)"/>
<ellipse cx="1387" cy="694" rx="4.1" ry="2.7" fill="#1a78e0" transform="rotate(-8 1387 694)"/>
<ellipse cx="1227" cy="692" rx="5.5" ry="2.1" fill="#1a88d8" transform="rotate(-8 1227 692)"/>
<ellipse cx="1375" cy="691" rx="8.8" ry="2.3" fill="#1050b0" transform="rotate(-8 1375 691)"/>
<ellipse cx="1330" cy="709" rx="9.6" ry="2.3" fill="#1050b0" transform="rotate(-8 1330 709)"/>
<ellipse cx="1239" cy="697" rx="6.0" ry="2.4" fill="#1050b0" transform="rotate(-8 1239 697)"/>
<ellipse cx="1379" cy="689" rx="8.7" ry="2.0" fill="#1a88d8" transform="rotate(-8 1379 689)"/>
<ellipse cx="1239" cy="694" rx="6.5" ry="1.8" fill="#1050b0" transform="rotate(-8 1239 694)"/>
<ellipse cx="1236" cy="704" rx="7.8" ry="2.6" fill="#1050b0" transform="rotate(-8 1236 704)"/>
<ellipse cx="1238" cy="691" rx="8.0" ry="1.6" fill="#1a88d8" transform="rotate(-8 1238 691)"/>
<ellipse cx="1266" cy="714" rx="6.8" ry="2.1" fill="#1a78e0" transform="rotate(-8 1266 714)"/>
<ellipse cx="1428" cy="668" rx="9.4" ry="2.7" fill="#1050b0" transform="rotate(-8 1428 668)"/>
<ellipse cx="1313" cy="697" rx="9.9" ry="2.4" fill="#1a88d8" transform="rotate(-8 1313 697)"/>
<ellipse cx="1326" cy="700" rx="9.9" ry="2.7" fill="#1a88d8" transform="rotate(-8 1326 700)"/>
<ellipse cx="1313" cy="676" rx="7.9" ry="1.9" fill="#1a88d8" transform="rotate(-8 1313 676)"/>
<ellipse cx="1262" cy="686" rx="5.7" ry="2.7" fill="#1a78e0" transform="rotate(-8 1262 686)"/>
<ellipse cx="1421" cy="669" rx="4.7" ry="2.2" fill="#1a78e0" transform="rotate(-8 1421 669)"/>
<ellipse cx="1490" cy="687" rx="7.0" ry="2.9" fill="#1a88d8" transform="rotate(-8 1490 687)"/>
<ellipse cx="1482" cy="686" rx="7.5" ry="2.3" fill="#1050b0" transform="rotate(-8 1482 686)"/>
<ellipse cx="1221" cy="711" rx="4.6" ry="2.8" fill="#1a68d0" transform="rotate(-8 1221 711)"/>
<ellipse cx="1233" cy="719" rx="4.0" ry="2.4" fill="#1a88d8" transform="rotate(-8 1233 719)"/>
<ellipse cx="1350" cy="710" rx="9.9" ry="1.6" fill="#1a68d0" transform="rotate(-8 1350 710)"/>
<ellipse cx="1275" cy="700" rx="6.7" ry="1.8" fill="#1a88d8" transform="rotate(-8 1275 700)"/>
<ellipse cx="1234" cy="683" rx="4.8" ry="2.6" fill="#1050b0" transform="rotate(-8 1234 683)"/>
<ellipse cx="1236" cy="683" rx="6.9" ry="2.0" fill="#1a68d0" transform="rotate(-8 1236 683)"/>
<ellipse cx="1382" cy="685" rx="5.1" ry="1.5" fill="#1050b0" transform="rotate(-8 1382 685)"/>
<ellipse cx="1319" cy="682" rx="4.4" ry="2.4" fill="#1050b0" transform="rotate(-8 1319 682)"/>
<ellipse cx="1289" cy="677" rx="4.2" ry="2.9" fill="#1a68d0" transform="rotate(-8 1289 677)"/>
<ellipse cx="1384" cy="672" rx="5.5" ry="1.6" fill="#1050b0" transform="rotate(-8 1384 672)"/>
<ellipse cx="1283" cy="695" rx="5.0" ry="2.2" fill="#1a88d8" transform="rotate(-8 1283 695)"/>
<ellipse cx="1287" cy="707" rx="8.0" ry="1.9" fill="#1a68d0" transform="rotate(-8 1287 707)"/>
<ellipse cx="1438" cy="664" rx="5.2" ry="3.0" fill="#1a78e0" transform="rotate(-8 1438 664)"/>
<ellipse cx="1430" cy="691" rx="4.5" ry="2.4" fill="#1050b0" transform="rotate(-8 1430 691)"/>
<ellipse cx="1378" cy="698" rx="8.8" ry="2.7" fill="#1a78e0" transform="rotate(-8 1378 698)"/>
<ellipse cx="1489" cy="664" rx="8.6" ry="2.1" fill="#1a88d8" transform="rotate(-8 1489 664)"/>
<ellipse cx="1231" cy="705" rx="4.9" ry="2.2" fill="#1050b0" transform="rotate(-8 1231 705)"/>
<ellipse cx="1341" cy="689" rx="4.1" ry="2.4" fill="#1a78e0" transform="rotate(-8 1341 689)"/>
<ellipse cx="1471" cy="671" rx="7.8" ry="1.6" fill="#1a68d0" transform="rotate(-8 1471 671)"/>
<ellipse cx="1293" cy="719" rx="7.4" ry="2.3" fill="#1a88d8" transform="rotate(-8 1293 719)"/>
<ellipse cx="1464" cy="697" rx="6.2" ry="2.4" fill="#1a68d0" transform="rotate(-8 1464 697)"/>
<ellipse cx="1309" cy="684" rx="5.1" ry="1.8" fill="#1050b0" transform="rotate(-8 1309 684)"/>
<ellipse cx="1433" cy="673" rx="8.8" ry="2.5" fill="#1050b0" transform="rotate(-8 1433 673)"/>
<ellipse cx="1301" cy="712" rx="7.6" ry="2.9" fill="#1a68d0" transform="rotate(-8 1301 712)"/>
</g>
<g filter="url(#b3)">
<ellipse cx="1452" cy="788" rx="8.5" ry="4.6" fill="#0c4a68"/>
<ellipse cx="1389" cy="784" rx="11.3" ry="5.2" fill="#0c4a68"/>
<ellipse cx="1389" cy="763" rx="11.1" ry="3.2" fill="#0c4a68"/>
<ellipse cx="1437" cy="766" rx="8.3" ry="5.8" fill="#0c4a68"/>
<ellipse cx="1322" cy="740" rx="11.7" ry="3.3" fill="#0c4a68"/>
<ellipse cx="1373" cy="766" rx="7.3" ry="4.3" fill="#0c4a68"/>
<ellipse cx="1338" cy="748" rx="6.0" ry="4.6" fill="#0c4a68"/>
<ellipse cx="1276" cy="787" rx="11.0" ry="3.3" fill="#0c4a68"/>
<ellipse cx="1243" cy="787" rx="8.3" ry="4.6" fill="#0c4a68"/>
<ellipse cx="1209" cy="764" rx="6.4" ry="4.9" fill="#0c4a68"/>
<ellipse cx="1386" cy="752" rx="11.7" ry="3.6" fill="#0c4a68"/>
<ellipse cx="1400" cy="756" rx="7.3" ry="4.2" fill="#0c4a68"/>
<ellipse cx="1402" cy="775" rx="8.5" ry="3.9" fill="#0c4a68"/>
<ellipse cx="1463" cy="765" rx="10.9" ry="5.9" fill="#0c4a68"/>
<ellipse cx="1290" cy="761" rx="10.3" ry="4.7" fill="#0c4a68"/>
<ellipse cx="1362" cy="745" rx="8.8" ry="5.5" fill="#0c4a68"/>
<ellipse cx="1230" cy="749" rx="11.5" ry="5.4" fill="#0c4a68"/>
<ellipse cx="1216" cy="776" rx="5.3" ry="4.1" fill="#0c4a68"/>
<ellipse cx="1409" cy="773" rx="11.2" ry="5.0" fill="#0c4a68"/>
<ellipse cx="1305" cy="742" rx="10.8" ry="5.8" fill="#0c4a68"/>
<ellipse cx="1451" cy="755" rx="7.7" ry="4.1" fill="#0c4a68"/>
<ellipse cx="1312" cy="765" rx="8.1" ry="3.1" fill="#0c4a68"/>
<ellipse cx="1487" cy="763" rx="9.5" ry="4.5" fill="#0c4a68"/>
<ellipse cx="1464" cy="749" rx="5.3" ry="3.9" fill="#0c4a68"/>
<ellipse cx="1459" cy="736" rx="7.6" ry="3.6" fill="#0c4a68"/>
<ellipse cx="1490" cy="774" rx="7.9" ry="5.5" fill="#0c4a68"/>
<ellipse cx="1294" cy="751" rx="7.8" ry="6.0" fill="#0c4a68"/>
<ellipse cx="1418" cy="763" rx="9.6" ry="3.3" fill="#0c4a68"/>
<ellipse cx="1416" cy="760" rx="5.1" ry="5.3" fill="#0c4a68"/>
<ellipse cx="1319" cy="786" rx="9.3" ry="5.6" fill="#0c4a68"/>
<ellipse cx="1242" cy="762" rx="8.8" ry="4.4" fill="#0c4a68"/>
<ellipse cx="1422" cy="765" rx="6.8" ry="4.3" fill="#0c4a68"/>
<ellipse cx="1208" cy="750" rx="6.0" ry="6.0" fill="#0c4a68"/>
<ellipse cx="1477" cy="743" rx="11.8" ry="4.6" fill="#0c4a68"/>
<ellipse cx="1283" cy="773" rx="11.2" ry="4.0" fill="#0c4a68"/>
<ellipse cx="1455" cy="780" rx="8.5" ry="4.0" fill="#0c4a68"/>
<ellipse cx="1374" cy="769" rx="11.9" ry="3.1" fill="#0c4a68"/>
<ellipse cx="1340" cy="770" rx="7.1" ry="5.9" fill="#0c4a68"/>
<ellipse cx="1236" cy="786" rx="5.9" ry="3.3" fill="#0c4a68"/>
<ellipse cx="1328" cy="749" rx="8.2" ry="4.7" fill="#0c4a68"/>
</g>
<g filter="url(#b6)">
<rect x="240" y="730" width="980" height="70" fill="#041838"/>
<rect x="720" y="745" width="260" height="30" fill="#021226"/>
</g>
<g filter="url(#b2)">
<ellipse cx="493" cy="774" rx="4.6" ry="2.3" fill="#1848b8" transform="rotate(-14 493 774)"/>
<ellipse cx="876" cy="773" rx="5.1" ry="2.1" fill="#1848b8" transform="rotate(-14 876 773)"/>
<ellipse cx="367" cy="766" rx="3.1" ry="1.8" fill="#103a98" transform="rotate(-14 367 766)"/>
<ellipse cx="363" cy="774" rx="5.5" ry="2.5" fill="#1848b8" transform="rotate(-14 363 774)"/>
<ellipse cx="323" cy="780" rx="5.2" ry="1.8" fill="#103a98" transform="rotate(-14 323 780)"/>
<ellipse cx="966" cy="789" rx="4.9" ry="1.8" fill="#1848b8" transform="rotate(-14 966 789)"/>
<ellipse cx="715" cy="778" rx="4.2" ry="1.9" fill="#1444a8" transform="rotate(-14 715 778)"/>
<ellipse cx="1106" cy="772" rx="4.5" ry="1.8" fill="#1444a8" transform="rotate(-14 1106 772)"/>
<ellipse cx="914" cy="767" rx="4.7" ry="1.6" fill="#103a98" transform="rotate(-14 914 767)"/>
<ellipse cx="763" cy="752" rx="3.0" ry="1.9" fill="#1444a8" transform="rotate(-14 763 752)"/>
<ellipse cx="688" cy="770" rx="3.7" ry="1.6" fill="#103a98" transform="rotate(-14 688 770)"/>
<ellipse cx="776" cy="768" rx="5.2" ry="2.2" fill="#1848b8" transform="rotate(-14 776 768)"/>
<ellipse cx="311" cy="772" rx="5.4" ry="1.9" fill="#103a98" transform="rotate(-14 311 772)"/>
<ellipse cx="1150" cy="738" rx="2.9" ry="2.3" fill="#103a98" transform="rotate(-14 1150 738)"/>
<ellipse cx="863" cy="745" rx="3.7" ry="2.4" fill="#1444a8" transform="rotate(-14 863 745)"/>
<ellipse cx="438" cy="784" rx="3.6" ry="2.2" fill="#1848b8" transform="rotate(-14 438 784)"/>
<ellipse cx="1119" cy="775" rx="3.2" ry="2.0" fill="#1a50c0" transform="rotate(-14 1119 775)"/>
<ellipse cx="806" cy="769" rx="3.6" ry="2.2" fill="#1444a8" transform="rotate(-14 806 769)"/>
<ellipse cx="418" cy="747" rx="4.9" ry="2.1" fill="#1848b8" transform="rotate(-14 418 747)"/>
<ellipse cx="403" cy="760" rx="4.3" ry="2.3" fill="#1a50c0" transform="rotate(-14 403 760)"/>
<ellipse cx="1187" cy="782" rx="4.4" ry="2.0" fill="#1848b8" transform="rotate(-14 1187 782)"/>
<ellipse cx="1213" cy="743" rx="3.4" ry="1.8" fill="#1a50c0" transform="rotate(-14 1213 743)"/>
<ellipse cx="1155" cy="765" rx="5.1" ry="1.5" fill="#1444a8" transform="rotate(-14 1155 765)"/>
<ellipse cx="566" cy="764" rx="5.4" ry="2.0" fill="#103a98" transform="rotate(-14 566 764)"/>
<ellipse cx="457" cy="748" rx="4.9" ry="1.9" fill="#1848b8" transform="rotate(-14 457 748)"/>
<ellipse cx="960" cy="750" rx="4.6" ry="2.3" fill="#1444a8" transform="rotate(-14 960 750)"/>
<ellipse cx="654" cy="749" rx="4.8" ry="2.1" fill="#103a98" transform="rotate(-14 654 749)"/>
<ellipse cx="439" cy="756" rx="2.6" ry="1.9" fill="#1a50c0" transform="rotate(-14 439 756)"/>
<ellipse cx="307" cy="739" rx="5.3" ry="2.2" fill="#1444a8" transform="rotate(-14 307 739)"/>
<ellipse cx="426" cy="763" rx="4.2" ry="1.8" fill="#1444a8" transform="rotate(-14 426 763)"/>
<ellipse cx="755" cy="789" rx="2.9" ry="1.6" fill="#1444a8" transform="rotate(-14 755 789)"/>
<ellipse cx="1043" cy="748" rx="3.4" ry="1.9" fill="#1a50c0" transform="rotate(-14 1043 748)"/>
<ellipse cx="579" cy="742" rx="4.0" ry="2.1" fill="#103a98" transform="rotate(-14 579 742)"/>
<ellipse cx="282" cy="766" rx="2.9" ry="2.3" fill="#1444a8" transform="rotate(-14 282 766)"/>
<ellipse cx="402" cy="786" rx="4.7" ry="2.4" fill="#1848b8" transform="rotate(-14 402 786)"/>
<ellipse cx="1130" cy="774" rx="2.8" ry="2.4" fill="#1a50c0" transform="rotate(-14 1130 774)"/>
<ellipse cx="576" cy="781" rx="3.1" ry="2.2" fill="#1848b8" transform="rotate(-14 576 781)"/>
<ellipse cx="747" cy="788" rx="3.8" ry="2.1" fill="#1a50c0" transform="rotate(-14 747 788)"/>
<ellipse cx="1059" cy="786" rx="2.8" ry="1.6" fill="#1444a8" transform="rotate(-14 1059 786)"/>
<ellipse cx="760" cy="753" rx="5.4" ry="1.8" fill="#1a50c0" transform="rotate(-14 760 753)"/>
<ellipse cx="603" cy="788" rx="3.0" ry="1.5" fill="#1444a8" transform="rotate(-14 603 788)"/>
<ellipse cx="1085" cy="792" rx="4.9" ry="1.9" fill="#1444a8" transform="rotate(-14 1085 792)"/>
<ellipse cx="1135" cy="738" rx="2.8" ry="1.9" fill="#103a98" transform="rotate(-14 1135 738)"/>
<ellipse cx="699" cy="751" rx="4.9" ry="2.0" fill="#1a50c0" transform="rotate(-14 699 751)"/>
<ellipse cx="753" cy="766" rx="3.3" ry="1.7" fill="#1848b8" transform="rotate(-14 753 766)"/>
<ellipse cx="1170" cy="789" rx="3.6" ry="1.7" fill="#103a98" transform="rotate(-14 1170 789)"/>
<ellipse cx="639" cy="745" rx="4.2" ry="2.5" fill="#103a98" transform="rotate(-14 639 745)"/>
<ellipse cx="429" cy="757" rx="3.9" ry="1.7" fill="#1a50c0" transform="rotate(-14 429 757)"/>
<ellipse cx="710" cy="764" rx="2.9" ry="1.5" fill="#1848b8" transform="rotate(-14 710 764)"/>
<ellipse cx="540" cy="786" rx="4.0" ry="2.0" fill="#1a50c0" transform="rotate(-14 540 786)"/>
<ellipse cx="449" cy="778" rx="4.4" ry="1.9" fill="#1a50c0" transform="rotate(-14 449 778)"/>
<ellipse cx="997" cy="774" rx="3.4" ry="2.1" fill="#1a50c0" transform="rotate(-14 997 774)"/>
<ellipse cx="954" cy="760" rx="4.8" ry="1.7" fill="#1a50c0" transform="rotate(-14 954 760)"/>
<ellipse cx="833" cy="750" rx="4.1" ry="1.5" fill="#103a98" transform="rotate(-14 833 750)"/>
<ellipse cx="1110" cy="787" rx="4.5" ry="2.1" fill="#103a98" transform="rotate(-14 1110 787)"/>
<ellipse cx="470" cy="765" rx="2.5" ry="1.9" fill="#1848b8" transform="rotate(-14 470 765)"/>
<ellipse cx="1149" cy="782" rx="5.0" ry="2.2" fill="#1848b8" transform="rotate(-14 1149 782)"/>
<ellipse cx="891" cy="769" rx="3.3" ry="1.6" fill="#1848b8" transform="rotate(-14 891 769)"/>
<ellipse cx="822" cy="739" rx="4.4" ry="2.1" fill="#1a50c0" transform="rotate(-14 822 739)"/>
<ellipse cx="996" cy="785" rx="3.6" ry="2.3" fill="#103a98" transform="rotate(-14 996 785)"/>
<ellipse cx="1025" cy="765" rx="2.7" ry="2.4" fill="#1444a8" transform="rotate(-14 1025 765)"/>
<ellipse cx="570" cy="774" rx="5.2" ry="2.2" fill="#103a98" transform="rotate(-14 570 774)"/>
<ellipse cx="805" cy="779" rx="5.3" ry="1.8" fill="#1a50c0" transform="rotate(-14 805 779)"/>
<ellipse cx="1202" cy="761" rx="3.7" ry="2.1" fill="#1a50c0" transform="rotate(-14 1202 761)"/>
<ellipse cx="318" cy="748" rx="2.9" ry="1.8" fill="#1444a8" transform="rotate(-14 318 748)"/>
<ellipse cx="1059" cy="766" rx="3.8" ry="2.1" fill="#1a50c0" transform="rotate(-14 1059 766)"/>
<ellipse cx="439" cy="791" rx="2.8" ry="1.6" fill="#1848b8" transform="rotate(-14 439 791)"/>
<ellipse cx="1172" cy="767" rx="4.4" ry="1.8" fill="#1a50c0" transform="rotate(-14 1172 767)"/>
<ellipse cx="396" cy="746" rx="2.7" ry="1.9" fill="#1848b8" transform="rotate(-14 396 746)"/>
<ellipse cx="883" cy="776" rx="4.6" ry="2.3" fill="#1848b8" transform="rotate(-14 883 776)"/>
<ellipse cx="349" cy="756" rx="2.7" ry="2.3" fill="#1848b8" transform="rotate(-14 349 756)"/>
<ellipse cx="329" cy="779" rx="3.4" ry="1.8" fill="#1444a8" transform="rotate(-14 329 779)"/>
<ellipse cx="515" cy="768" rx="4.2" ry="2.4" fill="#1444a8" transform="rotate(-14 515 768)"/>
<ellipse cx="965" cy="748" rx="5.0" ry="1.6" fill="#1a50c0" transform="rotate(-14 965 748)"/>
<ellipse cx="1076" cy="790" rx="3.3" ry="2.3" fill="#1848b8" transform="rotate(-14 1076 790)"/>
<ellipse cx="849" cy="742" rx="4.0" ry="2.1" fill="#1a50c0" transform="rotate(-14 849 742)"/>
<ellipse cx="927" cy="768" rx="3.8" ry="2.2" fill="#1848b8" transform="rotate(-14 927 768)"/>
<ellipse cx="706" cy="783" rx="2.9" ry="2.2" fill="#103a98" transform="rotate(-14 706 783)"/>
<ellipse cx="326" cy="742" rx="4.9" ry="2.3" fill="#103a98" transform="rotate(-14 326 742)"/>
<ellipse cx="255" cy="788" rx="4.6" ry="2.1" fill="#1848b8" transform="rotate(-14 255 788)"/>
<ellipse cx="478" cy="744" rx="5.2" ry="1.5" fill="#1444a8" transform="rotate(-14 478 744)"/>
<ellipse cx="560" cy="756" rx="3.1" ry="1.6" fill="#1848b8" transform="rotate(-14 560 756)"/>
<ellipse cx="789" cy="771" rx="5.3" ry="2.3" fill="#103a98" transform="rotate(-14 789 771)"/>
<ellipse cx="991" cy="764" rx="4.2" ry="2.3" fill="#103a98" transform="rotate(-14 991 764)"/>
<ellipse cx="1020" cy="758" rx="3.7" ry="2.4" fill="#103a98" transform="rotate(-14 1020 758)"/>
<ellipse cx="520" cy="767" rx="3.7" ry="2.3" fill="#1a50c0" transform="rotate(-14 520 767)"/>
<ellipse cx="1003" cy="761" rx="4.1" ry="2.3" fill="#103a98" transform="rotate(-14 1003 761)"/>
<ellipse cx="965" cy="786" rx="4.2" ry="2.1" fill="#1848b8" transform="rotate(-14 965 786)"/>
<ellipse cx="266" cy="790" rx="2.6" ry="1.8" fill="#103a98" transform="rotate(-14 266 790)"/>
<ellipse cx="282" cy="756" rx="4.7" ry="2.0" fill="#1848b8" transform="rotate(-14 282 756)"/>
<ellipse cx="669" cy="748" rx="4.8" ry="1.9" fill="#103a98" transform="rotate(-14 669 748)"/>
<ellipse cx="633" cy="781" rx="4.7" ry="2.1" fill="#103a98" transform="rotate(-14 633 781)"/>
<ellipse cx="440" cy="738" rx="2.5" ry="2.0" fill="#103a98" transform="rotate(-14 440 738)"/>
<ellipse cx="632" cy="785" rx="2.9" ry="2.5" fill="#1a50c0" transform="rotate(-14 632 785)"/>
<ellipse cx="720" cy="763" rx="4.4" ry="1.6" fill="#1a50c0" transform="rotate(-14 720 763)"/>
<ellipse cx="298" cy="781" rx="4.4" ry="1.7" fill="#1a50c0" transform="rotate(-14 298 781)"/>
<ellipse cx="267" cy="775" rx="4.2" ry="1.7" fill="#103a98" transform="rotate(-14 267 775)"/>
<ellipse cx="275" cy="782" rx="3.1" ry="2.2" fill="#103a98" transform="rotate(-14 275 782)"/>
<ellipse cx="753" cy="744" rx="3.0" ry="2.3" fill="#1a50c0" transform="rotate(-14 753 744)"/>
<ellipse cx="413" cy="740" rx="3.0" ry="2.0" fill="#1848b8" transform="rotate(-14 413 740)"/>
<ellipse cx="889" cy="764" rx="4.3" ry="1.7" fill="#103a98" transform="rotate(-14 889 764)"/>
<ellipse cx="1001" cy="740" rx="4.3" ry="1.9" fill="#1848b8" transform="rotate(-14 1001 740)"/>
<ellipse cx="427" cy="787" rx="4.7" ry="1.9" fill="#1848b8" transform="rotate(-14 427 787)"/>
<ellipse cx="941" cy="786" rx="4.5" ry="2.5" fill="#1848b8" transform="rotate(-14 941 786)"/>
<ellipse cx="677" cy="770" rx="4.8" ry="2.4" fill="#1848b8" transform="rotate(-14 677 770)"/>
<ellipse cx="805" cy="789" rx="4.6" ry="2.3" fill="#1a50c0" transform="rotate(-14 805 789)"/>
<ellipse cx="731" cy="760" rx="4.9" ry="1.9" fill="#103a98" transform="rotate(-14 731 760)"/>
<ellipse cx="480" cy="753" rx="3.9" ry="2.3" fill="#1a50c0" transform="rotate(-14 480 753)"/>
<ellipse cx="985" cy="762" rx="4.6" ry="2.3" fill="#1848b8" transform="rotate(-14 985 762)"/>
<ellipse cx="498" cy="776" rx="3.9" ry="1.7" fill="#1444a8" transform="rotate(-14 498 776)"/>
<ellipse cx="830" cy="787" rx="4.6" ry="2.4" fill="#1848b8" transform="rotate(-14 830 787)"/>
<ellipse cx="652" cy="750" rx="3.8" ry="2.2" fill="#1444a8" transform="rotate(-14 652 750)"/>
<ellipse cx="338" cy="738" rx="3.5" ry="1.5" fill="#1a50c0" transform="rotate(-14 338 738)"/>
<ellipse cx="347" cy="756" rx="4.4" ry="2.2" fill="#1848b8" transform="rotate(-14 347 756)"/>
<ellipse cx="968" cy="763" rx="4.2" ry="2.1" fill="#1a50c0" transform="rotate(-14 968 763)"/>
<ellipse cx="695" cy="776" rx="5.4" ry="1.8" fill="#1444a8" transform="rotate(-14 695 776)"/>
<ellipse cx="317" cy="759" rx="3.7" ry="2.4" fill="#1a50c0" transform="rotate(-14 317 759)"/>
<ellipse cx="820" cy="789" rx="3.0" ry="2.1" fill="#1a50c0" transform="rotate(-14 820 789)"/>
<ellipse cx="618" cy="752" rx="4.0" ry="2.2" fill="#103a98" transform="rotate(-14 618 752)"/>
<ellipse cx="1035" cy="764" rx="2.8" ry="2.0" fill="#1444a8" transform="rotate(-14 1035 764)"/>
<ellipse cx="286" cy="753" rx="5.4" ry="2.0" fill="#1a50c0" transform="rotate(-14 286 753)"/>
<ellipse cx="656" cy="740" rx="4.3" ry="1.7" fill="#1a50c0" transform="rotate(-14 656 740)"/>
<ellipse cx="827" cy="775" rx="3.5" ry="1.8" fill="#103a98" transform="rotate(-14 827 775)"/>
<ellipse cx="260" cy="745" rx="3.5" ry="2.3" fill="#103a98" transform="rotate(-14 260 745)"/>
<ellipse cx="241" cy="760" rx="4.6" ry="1.9" fill="#1444a8" transform="rotate(-14 241 760)"/>
<ellipse cx="390" cy="778" rx="4.8" ry="2.2" fill="#1848b8" transform="rotate(-14 390 778)"/>
<ellipse cx="532" cy="776" rx="3.9" ry="1.5" fill="#1444a8" transform="rotate(-14 532 776)"/>
<ellipse cx="1204" cy="739" rx="3.2" ry="1.9" fill="#103a98" transform="rotate(-14 1204 739)"/>
<ellipse cx="1061" cy="771" rx="2.5" ry="2.2" fill="#1848b8" transform="rotate(-14 1061 771)"/>
<ellipse cx="977" cy="750" rx="5.3" ry="2.1" fill="#1848b8" transform="rotate(-14 977 750)"/>
<ellipse cx="375" cy="759" rx="3.7" ry="2.3" fill="#1444a8" transform="rotate(-14 375 759)"/>
<ellipse cx="786" cy="740" rx="3.8" ry="2.1" fill="#103a98" transform="rotate(-14 786 740)"/>
<ellipse cx="359" cy="786" rx="2.8" ry="1.7" fill="#1444a8" transform="rotate(-14 359 786)"/>
<ellipse cx="453" cy="774" rx="5.4" ry="1.8" fill="#1848b8" transform="rotate(-14 453 774)"/>
<ellipse cx="425" cy="765" rx="2.9" ry="2.2" fill="#103a98" transform="rotate(-14 425 765)"/>
<ellipse cx="695" cy="760" rx="3.7" ry="1.9" fill="#103a98" transform="rotate(-14 695 760)"/>
<ellipse cx="735" cy="751" rx="4.8" ry="1.9" fill="#1a50c0" transform="rotate(-14 735 751)"/>
<ellipse cx="758" cy="787" rx="2.7" ry="2.2" fill="#1a50c0" transform="rotate(-14 758 787)"/>
<ellipse cx="850" cy="756" rx="4.2" ry="1.9" fill="#103a98" transform="rotate(-14 850 756)"/>
<ellipse cx="1161" cy="742" rx="3.1" ry="2.4" fill="#103a98" transform="rotate(-14 1161 742)"/>
<ellipse cx="1032" cy="784" rx="2.8" ry="2.2" fill="#1a50c0" transform="rotate(-14 1032 784)"/>
<ellipse cx="891" cy="771" rx="3.7" ry="2.2" fill="#1848b8" transform="rotate(-14 891 771)"/>
<ellipse cx="633" cy="740" rx="3.3" ry="2.2" fill="#1a50c0" transform="rotate(-14 633 740)"/>
<ellipse cx="597" cy="747" rx="3.4" ry="2.3" fill="#1848b8" transform="rotate(-14 597 747)"/>
<ellipse cx="605" cy="752" rx="3.5" ry="2.4" fill="#1444a8" transform="rotate(-14 605 752)"/>
<ellipse cx="1042" cy="738" rx="5.3" ry="2.3" fill="#1848b8" transform="rotate(-14 1042 738)"/>
<ellipse cx="976" cy="784" rx="5.2" ry="2.4" fill="#1444a8" transform="rotate(-14 976 784)"/>
<ellipse cx="269" cy="741" rx="4.2" ry="2.0" fill="#1444a8" transform="rotate(-14 269 741)"/>
<ellipse cx="1197" cy="742" rx="5.3" ry="2.5" fill="#1848b8" transform="rotate(-14 1197 742)"/>
<ellipse cx="1013" cy="783" rx="2.5" ry="1.6" fill="#1848b8" transform="rotate(-14 1013 783)"/>
<ellipse cx="408" cy="747" rx="4.8" ry="2.5" fill="#1444a8" transform="rotate(-14 408 747)"/>
<ellipse cx="344" cy="780" rx="4.1" ry="1.6" fill="#103a98" transform="rotate(-14 344 780)"/>
<ellipse cx="1051" cy="739" rx="5.3" ry="1.6" fill="#1444a8" transform="rotate(-14 1051 739)"/>
<ellipse cx="489" cy="787" rx="3.9" ry="2.1" fill="#103a98" transform="rotate(-14 489 787)"/>
<ellipse cx="276" cy="752" rx="4.4" ry="1.7" fill="#103a98" transform="rotate(-14 276 752)"/>
<ellipse cx="993" cy="783" rx="4.3" ry="2.4" fill="#103a98" transform="rotate(-14 993 783)"/>
<ellipse cx="953" cy="784" rx="3.6" ry="1.8" fill="#1a50c0" transform="rotate(-14 953 784)"/>
<ellipse cx="321" cy="748" rx="3.8" ry="2.3" fill="#1444a8" transform="rotate(-14 321 748)"/>
<ellipse cx="576" cy="770" rx="3.1" ry="2.1" fill="#1a50c0" transform="rotate(-14 576 770)"/>
<ellipse cx="983" cy="759" rx="5.2" ry="2.1" fill="#1a50c0" transform="rotate(-14 983 759)"/>
<ellipse cx="974" cy="755" rx="5.1" ry="2.4" fill="#1a50c0" transform="rotate(-14 974 755)"/>
<ellipse cx="843" cy="741" rx="2.7" ry="2.2" fill="#1848b8" transform="rotate(-14 843 741)"/>
<ellipse cx="312" cy="761" rx="2.9" ry="2.0" fill="#1848b8" transform="rotate(-14 312 761)"/>
<ellipse cx="244" cy="742" rx="5.2" ry="2.4" fill="#1848b8" transform="rotate(-14 244 742)"/>
<ellipse cx="528" cy="753" rx="4.7" ry="2.1" fill="#103a98" transform="rotate(-14 528 753)"/>
<ellipse cx="1173" cy="761" rx="3.4" ry="1.7" fill="#1a50c0" transform="rotate(-14 1173 761)"/>
<ellipse cx="1129" cy="763" rx="4.8" ry="2.4" fill="#1848b8" transform="rotate(-14 1129 763)"/>
<ellipse cx="379" cy="742" rx="4.5" ry="1.8" fill="#1a50c0" transform="rotate(-14 379 742)"/>
<ellipse cx="281" cy="789" rx="3.3" ry="2.1" fill="#103a98" transform="rotate(-14 281 789)"/>
<ellipse cx="587" cy="748" rx="4.2" ry="1.8" fill="#1a50c0" transform="rotate(-14 587 748)"/>
</g>
</svg></div>
<div id="frame"></div>
<div id="win">
  <div id="title">
    <svg width="957" height="31" style="position:absolute;left:0;top:0">
      <circle cx="15.9" cy="15" r="13.3" fill="#303234"/>
      <path d="M11.5 15 H21.9 M16.5 10 L11.5 15 L16.5 20" stroke="#ececec" stroke-width="1.6" fill="none"/>
      <rect x="874" y="19.2" width="11.3" height="1.9" fill="#d0d4d6"/>
      <rect x="906.1" y="10.6" width="9.6" height="9.8" stroke="#d0d4d6" stroke-width="1.7" fill="none"/>
      <path d="M936.8 10.3 L946.9 20.7 M946.9 10.3 L936.8 20.7" stroke="#e6e6e6" stroke-width="1.6"/>
    </svg>
  </div>
  <div id="appbar"><div class="t">Friendlychat</div>
    <svg width="957" height="43" style="position:absolute;left:0;top:0">
      <defs><filter id="rsh" x="-50%" y="-50%" width="200%" height="200%"><feGaussianBlur stdDeviation="1.5"/></filter></defs>
      <polygon points="911.6,0 930.4,0 957,26.6 957,45.4" fill="#5a0a60" fill-opacity="0.45" filter="url(#rsh)"/>
      <polygon points="913.6,0 928.4,0 957,28.6 957,43.4" fill="#931a58"/>
      <text x="0" y="0" transform="translate(938.6,18.3) rotate(45)" text-anchor="middle" font-family="Liberation Sans" font-weight="bold" font-size="6.8" fill="#fff" dy="2.4">DEBUG</text>
    </svg>
  </div>
  <div id="shadow"></div>
  <div id="side">
    <div class="item" style="top:6.65px"><div class="av"><span>P</span></div><div class="nm">Person 1</div></div>
    <div class="item" style="top:50.05px"><div class="av"><span>P</span></div><div class="nm">Person 2</div></div>
    <div class="item" style="top:93.85px"><div class="av"><span>P</span></div><div class="nm">Person 3</div></div>
  </div>
  <div id="input"><div class="ph">Send a message</div>
    <svg width="18" height="18" viewBox="0 0 24 24" style="position:absolute;left:673.7px;top:9.75px"><path d="M2.01 21L23 12 2.01 3 2 10l15 2-15 2z" fill="#9e9e9e"/></svg>
  </div>
</div>
<svg class="abs" style="left:240px;top:70px" width="24" height="24" viewBox="0 0 24 24">
  <g transform="translate(7.6,6.8) scale(0.88)">
  <path d="M0 0 L5.6 0 L4 1.6 L11.4 9 L13 7.4 L13 13 L7.4 13 L9 11.4 L1.6 4 L0 5.6 Z" fill="#0a0a0a" stroke="#e4e4e4" stroke-width="1.4" stroke-linejoin="miter"/>
  </g>
</svg>
<div id="shelf">
  <svg width="1495" height="55" style="position:absolute;left:0;top:0">
    <!-- launcher -->
    <circle cx="27.2" cy="27.7" r="19.2" fill="#3a3d40" fill-opacity="0.75"/>
    <circle cx="27.2" cy="27.7" r="7.2" fill="none" stroke="#e6e6e6" stroke-width="1.2"/>
    <circle cx="27.2" cy="27.7" r="5.3" fill="#ffffff"/>
    <!-- chrome -->
    <g transform="translate(560.3,26.8)">
      <circle r="19.8" fill="#2aa35a"/>
      <path d="M0 0 L0 -8 L17.5 -8 A19.8 19.8 0 0 0 -15.67 -11.12 L-6.93 4 Z" fill="#d14b4b"/>
      <path d="M0 0 L-6.93 4 L-1.83 19.72 A19.8 19.8 0 0 0 17.5 -8 L0 -8 Z" fill="#ebc445"/>
      <circle r="8.9" fill="#f4f4f4"/>
      <circle r="7" fill="#4f86e8"/>
    </g>
    <!-- gmail -->
    <g transform="translate(602.6,12.6)">
      <rect x="0" y="0" width="39.6" height="29.1" rx="2.5" fill="#efefef"/>
      <path d="M0 2 L0 27 Q0 29.1 2.5 29.1 L5.2 29.1 L5.2 8.5 L19.8 19 L34.4 8.5 L34.4 29.1 L37.1 29.1 Q39.6 29.1 39.6 27 L39.6 2 Q39.6 -0.5 37 0.5 L19.8 13 L2.6 0.5 Q0 -0.5 0 2 Z" fill="#d44a4a"/>
      <path d="M34.4 8.5 L39.6 4.5 L39.6 27 Q39.6 29.1 37.1 29.1 L34.4 29.1 Z" fill="#b8283a"/>
    </g>
    <!-- docs -->
    <g transform="translate(670.9,8.3)">
      <path d="M1.5 0 L19 0 L27.8 9 L27.8 35.9 Q27.8 37.4 26.3 37.4 L1.5 37.4 Q0 37.4 0 35.9 L0 1.5 Q0 0 1.5 0 Z" fill="#4f86e8"/>
      <path d="M19 0 L27.8 9 L19 9 Z" fill="#a1c8f4"/>
      <rect x="6.5" y="17.3" width="14.3" height="1.6" fill="#f0f4fc"/>
      <rect x="6.5" y="20.4" width="14.3" height="1.6" fill="#f0f4fc"/>
      <rect x="6.5" y="23.5" width="14.3" height="1.6" fill="#f0f4fc"/>
      <rect x="6.5" y="26.6" width="8.7" height="1.6" fill="#f0f4fc"/>
    </g>
    <!-- youtube -->
    <g transform="translate(730.9,15.7)">
      <rect x="0" y="0" width="32.6" height="22.6" rx="4" fill="#d9261c"/>
      <path d="M13 7 L21.3 11.3 L13 15.6 Z" fill="#ffffff"/>
      <circle cx="27.2" cy="21.3" r="9.2" fill="#ffffff"/>
      <circle cx="27.2" cy="21.3" r="4.3" fill="none" stroke="#8a8a8a" stroke-width="1.8"/>
      <circle cx="27.2" cy="21.3" r="1.5" fill="#6a6a6a"/>
    </g>
    <!-- play -->
    <g transform="translate(809.6,27)">
      <circle r="19.6" fill="#fbfbfb"/>
      <path d="M-10 -13.1 L3 0 L-10 13 Z" fill="#22c8f0"/>
      <path d="M-10 -13.1 L7 -3.6 L3 0 Z" fill="#2ed7a0"/>
      <path d="M-10 13 L7 3.6 L3 0 Z" fill="#d94a52"/>
      <path d="M7 -3.6 L14.3 0 L7 3.6 L3 0 Z" fill="#ecc244"/>
    </g>
    <!-- settings -->
    <defs><clipPath id="gclip"><path d="M-7.80 -13.51 L-4.30 -15.00 L-3.68 -18.95 L3.68 -18.95 L4.30 -15.00 L7.80 -13.51 L10.84 -11.22 L14.57 -12.66 L18.25 -6.28 L15.14 -3.77 L15.60 0.00 L15.14 3.77 L18.25 6.28 L14.57 12.66 L10.84 11.22 L7.80 13.51 L4.30 15.00 L3.68 18.95 L-3.68 18.95 L-4.30 15.00 L-7.80 13.51 L-10.84 11.22 L-14.57 12.66 L-18.25 6.28 L-15.14 3.77 L-15.60 0.00 L-15.14 -3.77 L-18.25 -6.28 L-14.57 -12.66 L-10.84 -11.22 Z"/></clipPath></defs>
    <g transform="translate(871.7,27)">
      <path id="gear" d="M-7.80 -13.51 L-4.30 -15.00 L-3.68 -18.95 L3.68 -18.95 L4.30 -15.00 L7.80 -13.51 L10.84 -11.22 L14.57 -12.66 L18.25 -6.28 L15.14 -3.77 L15.60 0.00 L15.14 3.77 L18.25 6.28 L14.57 12.66 L10.84 11.22 L7.80 13.51 L4.30 15.00 L3.68 18.95 L-3.68 18.95 L-4.30 15.00 L-7.80 13.51 L-10.84 11.22 L-14.57 12.66 L-18.25 6.28 L-15.14 3.77 L-15.60 0.00 L-15.14 -3.77 L-18.25 -6.28 L-14.57 -12.66 L-10.84 -11.22 Z" fill="#6a9aa0"/>
      <path d="M20.3 -3.9 L20.3 20.3 L-5.8 20.3 Z" fill="#1c2024" fill-opacity="0.22" clip-path="url(#gclip)"/>
      <circle r="11.3" fill="#d7dadb"/>
      <path d="M0 -11.3 A11.3 11.3 0 0 1 11.3 0 L0 0 Z" fill="#a8e0ea"/>
      <path d="M11.3 0 A11.3 11.3 0 0 1 0 11.3 L0 0Z" fill="#868c8c"/>
      <circle r="7.8" fill="#6d7676"/>
      <circle r="5.3" fill="#a9e2ee"/>
    </g>
    <rect x="903" y="17.8" width="1" height="20" fill="#5a5e62"/>
    <!-- flutter -->
    <g transform="translate(918.3,7.4) scale(0.1215)">
      <path fill="#47C5FB" d="M157.666.001L.001 157.666l48.8 48.8L255.268.001zM156.567 145.396L72.15 229.815l48.984 49.716 48.71-48.71 85.425-85.425z"/>
      <path fill="#00569E" d="M121.133 279.531l37.082 37.082h97.052l-85.425-85.426z"/>
      <path fill="#00B5F8" d="M71.6 230.364l48.8-48.8 49.441 49.63-48.708 48.71z"/>
    </g>
    <rect x="930" y="51.5" width="9.6" height="2" rx="1" fill="#d6d6d6"/>
    <!-- tray -->
    <rect x="1370.8" y="8" width="116.1" height="38.5" rx="19.25" fill="#3a3f44" fill-opacity="0.6"/>
    <circle cx="1391.6" cy="28" r="8.1" fill="#eeeeee"/>
    <path d="M1390.6 24.4 L1392.6 23.6 L1392.6 32.2 L1391 32.2 L1391 25.9 L1389.6 26.4 Z" fill="#2a2e31" stroke="#2a2e31" stroke-width="0.5"/>
    <path d="M1410.6 22.4 A12.5 12.5 0 0 1 1424.6 22.4 L1417.6 33.8 Z" fill="#ececec"/>
    <path d="M1410.6 22.4 A12.5 12.5 0 0 1 1424.6 22.4 L1423.1 24.8 A10.5 10.5 0 0 0 1412.1 24.8 Z" fill="#7a8084"/>
    <rect x="1433.2" y="22.5" width="9" height="13.1" rx="0.8" fill="#ececec"/>
    <rect x="1435.7" y="20.7" width="4" height="2" fill="#7a8084"/>
    <text x="1449" y="32.6" font-family="Liberation Sans" font-size="14.6" fill="#eeeeee" textLength="26" lengthAdjust="spacingAndGlyphs" stroke="#eeeeee" stroke-width="0.25">3:47</text>
  </svg>
</div>

</body></html>
